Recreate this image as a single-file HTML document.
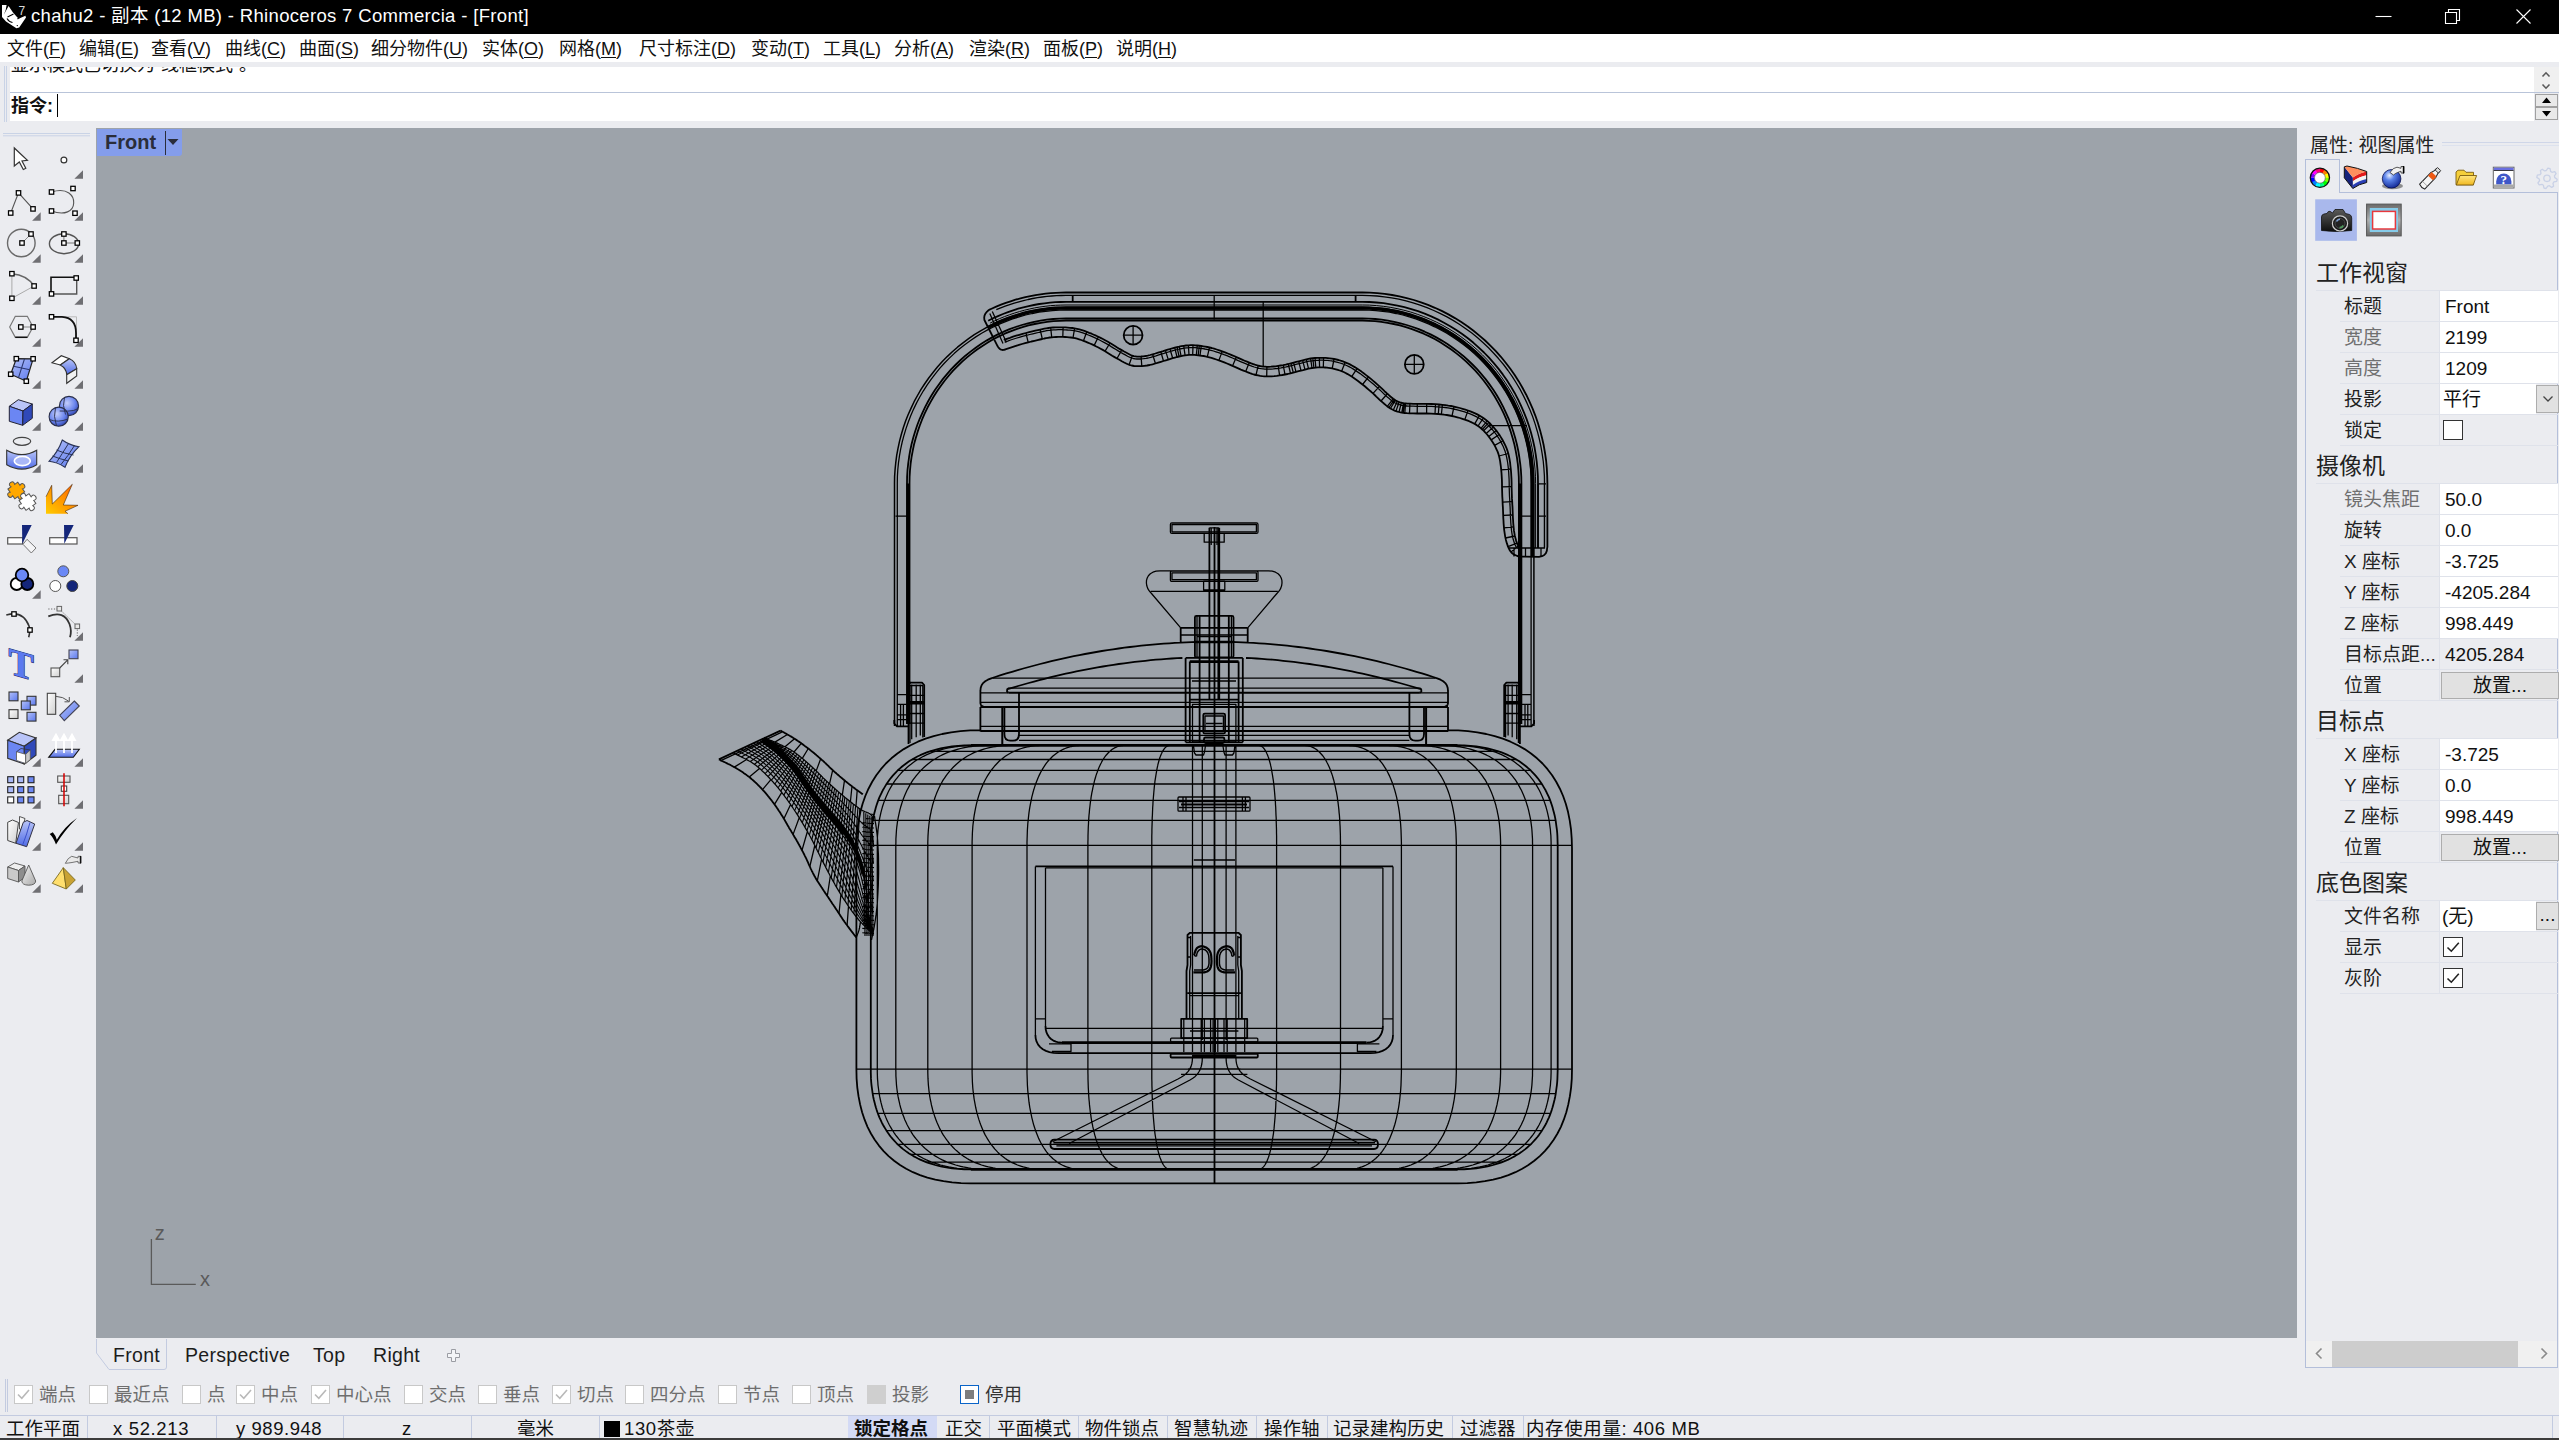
<!DOCTYPE html>
<html lang="zh-CN">
<head>
<meta charset="utf-8">
<title>chahu2 - 副本 (12 MB) - Rhinoceros 7 Commercia - [Front]</title>
<style>
html,body{margin:0;padding:0;}
body{width:2559px;height:1440px;overflow:hidden;position:relative;background:#ebecf0;
 font-family:"Liberation Sans","Noto Sans CJK SC",sans-serif;font-size:18px;color:#111;}
.abs{position:absolute;}
.t{position:absolute;white-space:nowrap;line-height:1;}
#titlebar{left:0;top:0;width:2559px;height:34px;background:#000;}
#title{left:31px;top:7px;color:#fff;font-size:18.5px;letter-spacing:0.33px;}
#menubar{left:0;top:34px;width:2559px;height:28px;background:#fff;}
#menubar .t{top:6px;font-size:18px;color:#111;}
#menubar u{text-decoration-thickness:1px;text-underline-offset:2px;}
#cmdhist{left:10px;top:67px;width:2524px;height:25px;background:#fff;overflow:hidden;}
#cmdline{left:10px;top:93px;width:2524px;height:28px;background:#fff;}
#cmdsep{left:10px;top:92px;width:2549px;height:1px;background:#b9c4d9;}
#viewport{left:96px;top:128px;width:2201px;height:1210px;background:#9da3aa;overflow:hidden;}
#vtab{left:97px;top:129px;width:85px;height:27px;background:#849deb;border-bottom-right-radius:3px;}
.hl{position:absolute;height:1px;background:#c9d1e2;}
.vl{position:absolute;width:1px;background:#c9d1e2;}
</style>
</head>
<body>
<div id="titlebar" class="abs"></div>
<div id="title" class="t">chahu2 - 副本 (12 MB) - Rhinoceros 7 Commercia - [Front]</div>
<div id="menubar" class="abs">
<span class="t" style="left:7px">文件(<u>F</u>)</span>
<span class="t" style="left:79px">编辑(<u>E</u>)</span>
<span class="t" style="left:151px">查看(<u>V</u>)</span>
<span class="t" style="left:225px">曲线(<u>C</u>)</span>
<span class="t" style="left:299px">曲面(<u>S</u>)</span>
<span class="t" style="left:371px">细分物件(<u>U</u>)</span>
<span class="t" style="left:482px">实体(<u>O</u>)</span>
<span class="t" style="left:559px">网格(<u>M</u>)</span>
<span class="t" style="left:639px">尺寸标注(<u>D</u>)</span>
<span class="t" style="left:751px">变动(<u>T</u>)</span>
<span class="t" style="left:823px">工具(<u>L</u>)</span>
<span class="t" style="left:894px">分析(<u>A</u>)</span>
<span class="t" style="left:969px">渲染(<u>R</u>)</span>
<span class="t" style="left:1043px">面板(<u>P</u>)</span>
<span class="t" style="left:1116px">说明(<u>H</u>)</span>
</div>
<div id="cmdhist" class="abs"><span class="t" style="left:1px;top:-11px;font-size:18px">显示模式已切换为“线框模式”。</span></div>
<div id="cmdline" class="abs"><span class="t" style="left:1px;top:4px;font-size:18px;font-weight:bold">指令:</span><div class="abs" style="left:47px;top:1px;width:1px;height:23px;background:#000"></div></div>
<div id="cmdsep" class="abs"></div>
<div id="viewport" class="abs">
<svg class="abs" style="left:0;top:0" width="2201" height="1210" viewBox="96 128 2201 1210" fill="none" stroke="#000" stroke-linecap="butt" stroke-linejoin="round">
<path stroke-width="1.28" d="M1258.4 745.4L1259 745.4L1259.6 745.5L1260.2 745.7L1260.7 745.9L1261.3 746.2L1261.8 746.5L1262.4 746.9L1262.9 747.4L1263.4 747.9L1263.9 748.5L1264.4 749.1L1264.9 749.8L1265.4 750.6L1265.8 751.4L1266.3 752.2L1266.7 753.2L1267.2 754.2L1267.6 755.2L1268 756.3L1268.5 757.5L1268.9 758.7L1269.2 760L1269.6 761.3L1270 762.7L1270.4 764.2L1270.7 765.7L1271.1 767.3L1271.4 768.9L1271.7 770.5L1272 772.3L1272.3 774.1L1272.6 775.9L1272.9 777.8L1273.2 779.7L1273.5 781.7L1273.7 783.8L1274 785.9L1274.2 788.1L1274.4 790.3L1274.6 792.5L1274.8 794.9L1275 797.2L1275.2 799.7L1275.4 802.1L1275.5 804.7L1275.7 807.3L1275.8 809.9L1275.9 812.6L1276 815.3L1276.2 818.1L1276.2 820.9L1276.3 823.8L1276.4 826.8L1276.5 829.7L1276.5 832.8L1276.6 835.9L1276.6 839L1276.6 842.2L1276.6 845.4L1276.6 1069.4L1276.6 1072.6L1276.6 1075.8L1276.6 1078.9L1276.5 1082L1276.5 1085.1L1276.4 1088L1276.3 1091L1276.2 1093.9L1276.2 1096.7L1276 1099.5L1275.9 1102.2L1275.8 1104.9L1275.7 1107.5L1275.5 1110.1L1275.4 1112.7L1275.2 1115.1L1275 1117.6L1274.8 1119.9L1274.6 1122.3L1274.4 1124.5L1274.2 1126.7L1274 1128.9L1273.7 1131L1273.5 1133.1L1273.2 1135.1L1272.9 1137L1272.6 1138.9L1272.3 1140.7L1272 1142.5L1271.7 1144.3L1271.4 1145.9L1271.1 1147.5L1270.7 1149.1L1270.4 1150.6L1270 1152.1L1269.6 1153.5L1269.2 1154.8L1268.9 1156.1L1268.5 1157.3L1268 1158.5L1267.6 1159.6L1267.2 1160.6L1266.7 1161.6L1266.3 1162.6L1265.8 1163.4L1265.4 1164.2L1264.9 1165L1264.4 1165.7L1263.9 1166.3L1263.4 1166.9L1262.9 1167.4L1262.4 1167.9L1261.8 1168.3L1261.3 1168.6L1260.7 1168.9L1260.2 1169.1L1259.6 1169.3L1259 1169.4L1258.4 1169.4M1303.7 745.4L1304.9 745.4L1306.1 745.5L1307.2 745.7L1308.4 745.9L1309.5 746.2L1310.6 746.5L1311.7 746.9L1312.7 747.4L1313.8 747.9L1314.8 748.5L1315.8 749.1L1316.8 749.8L1317.7 750.6L1318.7 751.4L1319.6 752.2L1320.5 753.2L1321.4 754.2L1322.3 755.2L1323.2 756.3L1324 757.5L1324.8 758.7L1325.6 760L1326.4 761.3L1327.1 762.7L1327.9 764.2L1328.6 765.7L1329.3 767.3L1330 768.9L1330.6 770.5L1331.2 772.3L1331.9 774.1L1332.5 775.9L1333 777.8L1333.6 779.7L1334.1 781.7L1334.6 783.8L1335.1 785.9L1335.6 788.1L1336 790.3L1336.5 792.5L1336.9 794.9L1337.3 797.2L1337.6 799.7L1338 802.1L1338.3 804.7L1338.6 807.3L1338.9 809.9L1339.1 812.6L1339.4 815.3L1339.6 818.1L1339.8 820.9L1339.9 823.8L1340.1 826.8L1340.2 829.7L1340.3 832.8L1340.4 835.9L1340.4 839L1340.5 842.2L1340.5 845.4L1340.5 1069.4L1340.5 1072.6L1340.4 1075.8L1340.4 1078.9L1340.3 1082L1340.2 1085.1L1340.1 1088L1339.9 1091L1339.8 1093.9L1339.6 1096.7L1339.4 1099.5L1339.1 1102.2L1338.9 1104.9L1338.6 1107.5L1338.3 1110.1L1338 1112.7L1337.6 1115.1L1337.3 1117.6L1336.9 1119.9L1336.5 1122.3L1336 1124.5L1335.6 1126.7L1335.1 1128.9L1334.6 1131L1334.1 1133.1L1333.6 1135.1L1333 1137L1332.5 1138.9L1331.9 1140.7L1331.2 1142.5L1330.6 1144.3L1330 1145.9L1329.3 1147.5L1328.6 1149.1L1327.9 1150.6L1327.1 1152.1L1326.4 1153.5L1325.6 1154.8L1324.8 1156.1L1324 1157.3L1323.2 1158.5L1322.3 1159.6L1321.4 1160.6L1320.5 1161.6L1319.6 1162.6L1318.7 1163.4L1317.7 1164.2L1316.8 1165L1315.8 1165.7L1314.8 1166.3L1313.8 1166.9L1312.7 1167.4L1311.7 1167.9L1310.6 1168.3L1309.5 1168.6L1308.4 1168.9L1307.2 1169.1L1306.1 1169.3L1304.9 1169.4L1303.7 1169.4M1346.9 745.4L1348.6 745.4L1350.4 745.5L1352.1 745.7L1353.8 745.9L1355.4 746.2L1357 746.5L1358.6 746.9L1360.2 747.4L1361.8 747.9L1363.3 748.5L1364.8 749.1L1366.2 749.8L1367.7 750.6L1369.1 751.4L1370.5 752.2L1371.8 753.2L1373.1 754.2L1374.4 755.2L1375.7 756.3L1376.9 757.5L1378.1 758.7L1379.3 760L1380.5 761.3L1381.6 762.7L1382.7 764.2L1383.7 765.7L1384.8 767.3L1385.8 768.9L1386.7 770.5L1387.7 772.3L1388.6 774.1L1389.5 775.9L1390.3 777.8L1391.1 779.7L1391.9 781.7L1392.7 783.8L1393.4 785.9L1394.1 788.1L1394.8 790.3L1395.4 792.5L1396 794.9L1396.6 797.2L1397.1 799.7L1397.6 802.1L1398.1 804.7L1398.6 807.3L1399 809.9L1399.4 812.6L1399.7 815.3L1400 818.1L1400.3 820.9L1400.6 823.8L1400.8 826.8L1401 829.7L1401.1 832.8L1401.2 835.9L1401.3 839L1401.4 842.2L1401.4 845.4L1401.4 1069.4L1401.4 1072.6L1401.3 1075.8L1401.2 1078.9L1401.1 1082L1401 1085.1L1400.8 1088L1400.6 1091L1400.3 1093.9L1400 1096.7L1399.7 1099.5L1399.4 1102.2L1399 1104.9L1398.6 1107.5L1398.1 1110.1L1397.6 1112.7L1397.1 1115.1L1396.6 1117.6L1396 1119.9L1395.4 1122.3L1394.8 1124.5L1394.1 1126.7L1393.4 1128.9L1392.7 1131L1391.9 1133.1L1391.1 1135.1L1390.3 1137L1389.5 1138.9L1388.6 1140.7L1387.7 1142.5L1386.7 1144.3L1385.8 1145.9L1384.8 1147.5L1383.7 1149.1L1382.7 1150.6L1381.6 1152.1L1380.5 1153.5L1379.3 1154.8L1378.1 1156.1L1376.9 1157.3L1375.7 1158.5L1374.4 1159.6L1373.1 1160.6L1371.8 1161.6L1370.5 1162.6L1369.1 1163.4L1367.7 1164.2L1366.2 1165L1364.8 1165.7L1363.3 1166.3L1361.8 1166.9L1360.2 1167.4L1358.6 1167.9L1357 1168.3L1355.4 1168.6L1353.8 1168.9L1352.1 1169.1L1350.4 1169.3L1348.6 1169.4L1346.9 1169.4M1385.8 745.4L1388.1 745.4L1390.4 745.5L1392.6 745.7L1394.7 745.9L1396.9 746.2L1399 746.5L1401 746.9L1403.1 747.4L1405.1 747.9L1407 748.5L1409 749.1L1410.9 749.8L1412.7 750.6L1414.5 751.4L1416.3 752.2L1418.1 753.2L1419.8 754.2L1421.5 755.2L1423.1 756.3L1424.7 757.5L1426.3 758.7L1427.8 760L1429.3 761.3L1430.7 762.7L1432.1 764.2L1433.5 765.7L1434.8 767.3L1436.1 768.9L1437.4 770.5L1438.6 772.3L1439.8 774.1L1440.9 775.9L1442 777.8L1443.1 779.7L1444.1 781.7L1445.1 783.8L1446 785.9L1446.9 788.1L1447.8 790.3L1448.6 792.5L1449.4 794.9L1450.1 797.2L1450.8 799.7L1451.5 802.1L1452.1 804.7L1452.7 807.3L1453.2 809.9L1453.7 812.6L1454.2 815.3L1454.6 818.1L1454.9 820.9L1455.3 823.8L1455.6 826.8L1455.8 829.7L1456 832.8L1456.1 835.9L1456.2 839L1456.3 842.2L1456.3 845.4L1456.3 1069.4L1456.3 1072.6L1456.2 1075.8L1456.1 1078.9L1456 1082L1455.8 1085.1L1455.6 1088L1455.3 1091L1454.9 1093.9L1454.6 1096.7L1454.2 1099.5L1453.7 1102.2L1453.2 1104.9L1452.7 1107.5L1452.1 1110.1L1451.5 1112.7L1450.8 1115.1L1450.1 1117.6L1449.4 1119.9L1448.6 1122.3L1447.8 1124.5L1446.9 1126.7L1446 1128.9L1445.1 1131L1444.1 1133.1L1443.1 1135.1L1442 1137L1440.9 1138.9L1439.8 1140.7L1438.6 1142.5L1437.4 1144.3L1436.1 1145.9L1434.8 1147.5L1433.5 1149.1L1432.1 1150.6L1430.7 1152.1L1429.3 1153.5L1427.8 1154.8L1426.3 1156.1L1424.7 1157.3L1423.1 1158.5L1421.5 1159.6L1419.8 1160.6L1418.1 1161.6L1416.3 1162.6L1414.5 1163.4L1412.7 1164.2L1410.9 1165L1409 1165.7L1407 1166.3L1405.1 1166.9L1403.1 1167.4L1401 1167.9L1399 1168.3L1396.9 1168.6L1394.7 1168.9L1392.6 1169.1L1390.4 1169.3L1388.1 1169.4L1385.8 1169.4M1417.2 745.4L1419.9 745.4L1422.6 745.5L1425.2 745.7L1427.8 745.9L1430.3 746.2L1432.8 746.5L1435.2 746.9L1437.6 747.4L1440 747.9L1442.3 748.5L1444.6 749.1L1446.9 749.8L1449 750.6L1451.2 751.4L1453.3 752.2L1455.4 753.2L1457.4 754.2L1459.4 755.2L1461.3 756.3L1463.2 757.5L1465.1 758.7L1466.9 760L1468.6 761.3L1470.3 762.7L1472 764.2L1473.6 765.7L1475.2 767.3L1476.7 768.9L1478.2 770.5L1479.7 772.3L1481.1 774.1L1482.4 775.9L1483.7 777.8L1485 779.7L1486.2 781.7L1487.3 783.8L1488.5 785.9L1489.5 788.1L1490.5 790.3L1491.5 792.5L1492.4 794.9L1493.3 797.2L1494.1 799.7L1494.9 802.1L1495.7 804.7L1496.3 807.3L1497 809.9L1497.5 812.6L1498.1 815.3L1498.6 818.1L1499 820.9L1499.4 823.8L1499.7 826.8L1500 829.7L1500.2 832.8L1500.4 835.9L1500.5 839L1500.6 842.2L1500.6 845.4L1500.6 1069.4L1500.6 1072.6L1500.5 1075.8L1500.4 1078.9L1500.2 1082L1500 1085.1L1499.7 1088L1499.4 1091L1499 1093.9L1498.6 1096.7L1498.1 1099.5L1497.5 1102.2L1497 1104.9L1496.3 1107.5L1495.7 1110.1L1494.9 1112.7L1494.1 1115.1L1493.3 1117.6L1492.4 1119.9L1491.5 1122.3L1490.5 1124.5L1489.5 1126.7L1488.5 1128.9L1487.3 1131L1486.2 1133.1L1485 1135.1L1483.7 1137L1482.4 1138.9L1481.1 1140.7L1479.7 1142.5L1478.2 1144.3L1476.7 1145.9L1475.2 1147.5L1473.6 1149.1L1472 1150.6L1470.3 1152.1L1468.6 1153.5L1466.9 1154.8L1465.1 1156.1L1463.2 1157.3L1461.3 1158.5L1459.4 1159.6L1457.4 1160.6L1455.4 1161.6L1453.3 1162.6L1451.2 1163.4L1449 1164.2L1446.9 1165L1444.6 1165.7L1442.3 1166.3L1440 1166.9L1437.6 1167.4L1435.2 1167.9L1432.8 1168.3L1430.3 1168.6L1427.8 1168.9L1425.2 1169.1L1422.6 1169.3L1419.9 1169.4L1417.2 1169.4M1439.9 745.4L1442.9 745.4L1445.8 745.5L1448.7 745.7L1451.6 745.9L1454.4 746.2L1457.2 746.5L1459.9 746.9L1462.6 747.4L1465.2 747.9L1467.8 748.5L1470.3 749.1L1472.8 749.8L1475.2 750.6L1477.6 751.4L1480 752.2L1482.3 753.2L1484.5 754.2L1486.7 755.2L1488.9 756.3L1491 757.5L1493 758.7L1495 760L1497 761.3L1498.9 762.7L1500.8 764.2L1502.6 765.7L1504.3 767.3L1506 768.9L1507.7 770.5L1509.3 772.3L1510.8 774.1L1512.3 775.9L1513.8 777.8L1515.2 779.7L1516.5 781.7L1517.8 783.8L1519 785.9L1520.2 788.1L1521.4 790.3L1522.4 792.5L1523.5 794.9L1524.4 797.2L1525.4 799.7L1526.2 802.1L1527 804.7L1527.8 807.3L1528.5 809.9L1529.1 812.6L1529.7 815.3L1530.3 818.1L1530.8 820.9L1531.2 823.8L1531.6 826.8L1531.9 829.7L1532.1 832.8L1532.3 835.9L1532.5 839L1532.5 842.2L1532.6 845.4L1532.6 1069.4L1532.5 1072.6L1532.5 1075.8L1532.3 1078.9L1532.1 1082L1531.9 1085.1L1531.6 1088L1531.2 1091L1530.8 1093.9L1530.3 1096.7L1529.7 1099.5L1529.1 1102.2L1528.5 1104.9L1527.8 1107.5L1527 1110.1L1526.2 1112.7L1525.4 1115.1L1524.4 1117.6L1523.5 1119.9L1522.4 1122.3L1521.4 1124.5L1520.2 1126.7L1519 1128.9L1517.8 1131L1516.5 1133.1L1515.2 1135.1L1513.8 1137L1512.3 1138.9L1510.8 1140.7L1509.3 1142.5L1507.7 1144.3L1506 1145.9L1504.3 1147.5L1502.6 1149.1L1500.8 1150.6L1498.9 1152.1L1497 1153.5L1495 1154.8L1493 1156.1L1491 1157.3L1488.9 1158.5L1486.7 1159.6L1484.5 1160.6L1482.3 1161.6L1480 1162.6L1477.6 1163.4L1475.2 1164.2L1472.8 1165L1470.3 1165.7L1467.8 1166.3L1465.2 1166.9L1462.6 1167.4L1459.9 1167.9L1457.2 1168.3L1454.4 1168.6L1451.6 1168.9L1448.7 1169.1L1445.8 1169.3L1442.9 1169.4L1439.9 1169.4M1453 745.4L1456.2 745.4L1459.3 745.5L1462.4 745.7L1465.4 745.9L1468.4 746.2L1471.3 746.5L1474.2 746.9L1477 747.4L1479.8 747.9L1482.5 748.5L1485.2 749.1L1487.9 749.8L1490.4 750.6L1493 751.4L1495.5 752.2L1497.9 753.2L1500.3 754.2L1502.6 755.2L1504.9 756.3L1507.1 757.5L1509.3 758.7L1511.4 760L1513.5 761.3L1515.5 762.7L1517.4 764.2L1519.4 765.7L1521.2 767.3L1523 768.9L1524.8 770.5L1526.5 772.3L1528.1 774.1L1529.7 775.9L1531.2 777.8L1532.7 779.7L1534.1 781.7L1535.5 783.8L1536.8 785.9L1538.1 788.1L1539.3 790.3L1540.4 792.5L1541.5 794.9L1542.5 797.2L1543.5 799.7L1544.4 802.1L1545.3 804.7L1546.1 807.3L1546.8 809.9L1547.5 812.6L1548.1 815.3L1548.7 818.1L1549.2 820.9L1549.6 823.8L1550 826.8L1550.4 829.7L1550.6 832.8L1550.9 835.9L1551 839L1551.1 842.2L1551.1 845.4L1551.1 1069.4L1551.1 1072.6L1551 1075.8L1550.9 1078.9L1550.6 1082L1550.4 1085.1L1550 1088L1549.6 1091L1549.2 1093.9L1548.7 1096.7L1548.1 1099.5L1547.5 1102.2L1546.8 1104.9L1546.1 1107.5L1545.3 1110.1L1544.4 1112.7L1543.5 1115.1L1542.5 1117.6L1541.5 1119.9L1540.4 1122.3L1539.3 1124.5L1538.1 1126.7L1536.8 1128.9L1535.5 1131L1534.1 1133.1L1532.7 1135.1L1531.2 1137L1529.7 1138.9L1528.1 1140.7L1526.5 1142.5L1524.8 1144.3L1523 1145.9L1521.2 1147.5L1519.4 1149.1L1517.4 1150.6L1515.5 1152.1L1513.5 1153.5L1511.4 1154.8L1509.3 1156.1L1507.1 1157.3L1504.9 1158.5L1502.6 1159.6L1500.3 1160.6L1497.9 1161.6L1495.5 1162.6L1493 1163.4L1490.4 1164.2L1487.9 1165L1485.2 1165.7L1482.5 1166.3L1479.8 1166.9L1477 1167.4L1474.2 1167.9L1471.3 1168.3L1468.4 1168.6L1465.4 1168.9L1462.4 1169.1L1459.3 1169.3L1456.2 1169.4L1453 1169.4M1170 745.4L1169.4 745.4L1168.8 745.5L1168.2 745.7L1167.7 745.9L1167.1 746.2L1166.6 746.5L1166 746.9L1165.5 747.4L1165 747.9L1164.5 748.5L1164 749.1L1163.5 749.8L1163 750.6L1162.6 751.4L1162.1 752.2L1161.7 753.2L1161.2 754.2L1160.8 755.2L1160.4 756.3L1159.9 757.5L1159.5 758.7L1159.2 760L1158.8 761.3L1158.4 762.7L1158 764.2L1157.7 765.7L1157.3 767.3L1157 768.9L1156.7 770.5L1156.4 772.3L1156.1 774.1L1155.8 775.9L1155.5 777.8L1155.2 779.7L1154.9 781.7L1154.7 783.8L1154.4 785.9L1154.2 788.1L1154 790.3L1153.8 792.5L1153.6 794.9L1153.4 797.2L1153.2 799.7L1153 802.1L1152.9 804.7L1152.7 807.3L1152.6 809.9L1152.5 812.6L1152.4 815.3L1152.2 818.1L1152.2 820.9L1152.1 823.8L1152 826.8L1151.9 829.7L1151.9 832.8L1151.8 835.9L1151.8 839L1151.8 842.2L1151.8 845.4L1151.8 1069.4L1151.8 1072.6L1151.8 1075.8L1151.8 1078.9L1151.9 1082L1151.9 1085.1L1152 1088L1152.1 1091L1152.2 1093.9L1152.2 1096.7L1152.4 1099.5L1152.5 1102.2L1152.6 1104.9L1152.7 1107.5L1152.9 1110.1L1153 1112.7L1153.2 1115.1L1153.4 1117.6L1153.6 1119.9L1153.8 1122.3L1154 1124.5L1154.2 1126.7L1154.4 1128.9L1154.7 1131L1154.9 1133.1L1155.2 1135.1L1155.5 1137L1155.8 1138.9L1156.1 1140.7L1156.4 1142.5L1156.7 1144.3L1157 1145.9L1157.3 1147.5L1157.7 1149.1L1158 1150.6L1158.4 1152.1L1158.8 1153.5L1159.2 1154.8L1159.5 1156.1L1159.9 1157.3L1160.4 1158.5L1160.8 1159.6L1161.2 1160.6L1161.7 1161.6L1162.1 1162.6L1162.6 1163.4L1163 1164.2L1163.5 1165L1164 1165.7L1164.5 1166.3L1165 1166.9L1165.5 1167.4L1166 1167.9L1166.6 1168.3L1167.1 1168.6L1167.7 1168.9L1168.2 1169.1L1168.8 1169.3L1169.4 1169.4L1170 1169.4M1124.7 745.4L1123.5 745.4L1122.3 745.5L1121.2 745.7L1120 745.9L1118.9 746.2L1117.8 746.5L1116.7 746.9L1115.7 747.4L1114.6 747.9L1113.6 748.5L1112.6 749.1L1111.6 749.8L1110.7 750.6L1109.7 751.4L1108.8 752.2L1107.9 753.2L1107 754.2L1106.1 755.2L1105.2 756.3L1104.4 757.5L1103.6 758.7L1102.8 760L1102 761.3L1101.3 762.7L1100.5 764.2L1099.8 765.7L1099.1 767.3L1098.4 768.9L1097.8 770.5L1097.2 772.3L1096.5 774.1L1095.9 775.9L1095.4 777.8L1094.8 779.7L1094.3 781.7L1093.8 783.8L1093.3 785.9L1092.8 788.1L1092.4 790.3L1091.9 792.5L1091.5 794.9L1091.1 797.2L1090.8 799.7L1090.4 802.1L1090.1 804.7L1089.8 807.3L1089.5 809.9L1089.3 812.6L1089 815.3L1088.8 818.1L1088.6 820.9L1088.5 823.8L1088.3 826.8L1088.2 829.7L1088.1 832.8L1088 835.9L1088 839L1087.9 842.2L1087.9 845.4L1087.9 1069.4L1087.9 1072.6L1088 1075.8L1088 1078.9L1088.1 1082L1088.2 1085.1L1088.3 1088L1088.5 1091L1088.6 1093.9L1088.8 1096.7L1089 1099.5L1089.3 1102.2L1089.5 1104.9L1089.8 1107.5L1090.1 1110.1L1090.4 1112.7L1090.8 1115.1L1091.1 1117.6L1091.5 1119.9L1091.9 1122.3L1092.4 1124.5L1092.8 1126.7L1093.3 1128.9L1093.8 1131L1094.3 1133.1L1094.8 1135.1L1095.4 1137L1095.9 1138.9L1096.5 1140.7L1097.2 1142.5L1097.8 1144.3L1098.4 1145.9L1099.1 1147.5L1099.8 1149.1L1100.5 1150.6L1101.3 1152.1L1102 1153.5L1102.8 1154.8L1103.6 1156.1L1104.4 1157.3L1105.2 1158.5L1106.1 1159.6L1107 1160.6L1107.9 1161.6L1108.8 1162.6L1109.7 1163.4L1110.7 1164.2L1111.6 1165L1112.6 1165.7L1113.6 1166.3L1114.6 1166.9L1115.7 1167.4L1116.7 1167.9L1117.8 1168.3L1118.9 1168.6L1120 1168.9L1121.2 1169.1L1122.3 1169.3L1123.5 1169.4L1124.7 1169.4M1081.5 745.4L1079.8 745.4L1078 745.5L1076.3 745.7L1074.6 745.9L1073 746.2L1071.4 746.5L1069.8 746.9L1068.2 747.4L1066.6 747.9L1065.1 748.5L1063.6 749.1L1062.2 749.8L1060.7 750.6L1059.3 751.4L1057.9 752.2L1056.6 753.2L1055.3 754.2L1054 755.2L1052.7 756.3L1051.5 757.5L1050.3 758.7L1049.1 760L1047.9 761.3L1046.8 762.7L1045.7 764.2L1044.7 765.7L1043.6 767.3L1042.6 768.9L1041.7 770.5L1040.7 772.3L1039.8 774.1L1038.9 775.9L1038.1 777.8L1037.3 779.7L1036.5 781.7L1035.7 783.8L1035 785.9L1034.3 788.1L1033.6 790.3L1033 792.5L1032.4 794.9L1031.8 797.2L1031.3 799.7L1030.8 802.1L1030.3 804.7L1029.8 807.3L1029.4 809.9L1029 812.6L1028.7 815.3L1028.4 818.1L1028.1 820.9L1027.8 823.8L1027.6 826.8L1027.4 829.7L1027.3 832.8L1027.2 835.9L1027.1 839L1027 842.2L1027 845.4L1027 1069.4L1027 1072.6L1027.1 1075.8L1027.2 1078.9L1027.3 1082L1027.4 1085.1L1027.6 1088L1027.8 1091L1028.1 1093.9L1028.4 1096.7L1028.7 1099.5L1029 1102.2L1029.4 1104.9L1029.8 1107.5L1030.3 1110.1L1030.8 1112.7L1031.3 1115.1L1031.8 1117.6L1032.4 1119.9L1033 1122.3L1033.6 1124.5L1034.3 1126.7L1035 1128.9L1035.7 1131L1036.5 1133.1L1037.3 1135.1L1038.1 1137L1038.9 1138.9L1039.8 1140.7L1040.7 1142.5L1041.7 1144.3L1042.6 1145.9L1043.6 1147.5L1044.7 1149.1L1045.7 1150.6L1046.8 1152.1L1047.9 1153.5L1049.1 1154.8L1050.3 1156.1L1051.5 1157.3L1052.7 1158.5L1054 1159.6L1055.3 1160.6L1056.6 1161.6L1057.9 1162.6L1059.3 1163.4L1060.7 1164.2L1062.2 1165L1063.6 1165.7L1065.1 1166.3L1066.6 1166.9L1068.2 1167.4L1069.8 1167.9L1071.4 1168.3L1073 1168.6L1074.6 1168.9L1076.3 1169.1L1078 1169.3L1079.8 1169.4L1081.5 1169.4M1042.6 745.4L1040.3 745.4L1038 745.5L1035.8 745.7L1033.7 745.9L1031.5 746.2L1029.4 746.5L1027.4 746.9L1025.3 747.4L1023.3 747.9L1021.4 748.5L1019.4 749.1L1017.5 749.8L1015.7 750.6L1013.9 751.4L1012.1 752.2L1010.3 753.2L1008.6 754.2L1006.9 755.2L1005.3 756.3L1003.7 757.5L1002.1 758.7L1000.6 760L999.1 761.3L997.7 762.7L996.3 764.2L994.9 765.7L993.6 767.3L992.3 768.9L991 770.5L989.8 772.3L988.6 774.1L987.5 775.9L986.4 777.8L985.3 779.7L984.3 781.7L983.3 783.8L982.4 785.9L981.5 788.1L980.6 790.3L979.8 792.5L979 794.9L978.3 797.2L977.6 799.7L976.9 802.1L976.3 804.7L975.7 807.3L975.2 809.9L974.7 812.6L974.2 815.3L973.8 818.1L973.5 820.9L973.1 823.8L972.8 826.8L972.6 829.7L972.4 832.8L972.3 835.9L972.2 839L972.1 842.2L972.1 845.4L972.1 1069.4L972.1 1072.6L972.2 1075.8L972.3 1078.9L972.4 1082L972.6 1085.1L972.8 1088L973.1 1091L973.5 1093.9L973.8 1096.7L974.2 1099.5L974.7 1102.2L975.2 1104.9L975.7 1107.5L976.3 1110.1L976.9 1112.7L977.6 1115.1L978.3 1117.6L979 1119.9L979.8 1122.3L980.6 1124.5L981.5 1126.7L982.4 1128.9L983.3 1131L984.3 1133.1L985.3 1135.1L986.4 1137L987.5 1138.9L988.6 1140.7L989.8 1142.5L991 1144.3L992.3 1145.9L993.6 1147.5L994.9 1149.1L996.3 1150.6L997.7 1152.1L999.1 1153.5L1000.6 1154.8L1002.1 1156.1L1003.7 1157.3L1005.3 1158.5L1006.9 1159.6L1008.6 1160.6L1010.3 1161.6L1012.1 1162.6L1013.9 1163.4L1015.7 1164.2L1017.5 1165L1019.4 1165.7L1021.4 1166.3L1023.3 1166.9L1025.3 1167.4L1027.4 1167.9L1029.4 1168.3L1031.5 1168.6L1033.7 1168.9L1035.8 1169.1L1038 1169.3L1040.3 1169.4L1042.6 1169.4M1011.2 745.4L1008.5 745.4L1005.8 745.5L1003.2 745.7L1000.6 745.9L998.1 746.2L995.6 746.5L993.2 746.9L990.8 747.4L988.4 747.9L986.1 748.5L983.8 749.1L981.5 749.8L979.4 750.6L977.2 751.4L975.1 752.2L973 753.2L971 754.2L969 755.2L967.1 756.3L965.2 757.5L963.3 758.7L961.5 760L959.8 761.3L958.1 762.7L956.4 764.2L954.8 765.7L953.2 767.3L951.7 768.9L950.2 770.5L948.7 772.3L947.3 774.1L946 775.9L944.7 777.8L943.4 779.7L942.2 781.7L941.1 783.8L939.9 785.9L938.9 788.1L937.9 790.3L936.9 792.5L936 794.9L935.1 797.2L934.3 799.7L933.5 802.1L932.7 804.7L932.1 807.3L931.4 809.9L930.9 812.6L930.3 815.3L929.8 818.1L929.4 820.9L929 823.8L928.7 826.8L928.4 829.7L928.2 832.8L928 835.9L927.9 839L927.8 842.2L927.8 845.4L927.8 1069.4L927.8 1072.6L927.9 1075.8L928 1078.9L928.2 1082L928.4 1085.1L928.7 1088L929 1091L929.4 1093.9L929.8 1096.7L930.3 1099.5L930.9 1102.2L931.4 1104.9L932.1 1107.5L932.7 1110.1L933.5 1112.7L934.3 1115.1L935.1 1117.6L936 1119.9L936.9 1122.3L937.9 1124.5L938.9 1126.7L939.9 1128.9L941.1 1131L942.2 1133.1L943.4 1135.1L944.7 1137L946 1138.9L947.3 1140.7L948.7 1142.5L950.2 1144.3L951.7 1145.9L953.2 1147.5L954.8 1149.1L956.4 1150.6L958.1 1152.1L959.8 1153.5L961.5 1154.8L963.3 1156.1L965.2 1157.3L967.1 1158.5L969 1159.6L971 1160.6L973 1161.6L975.1 1162.6L977.2 1163.4L979.4 1164.2L981.5 1165L983.8 1165.7L986.1 1166.3L988.4 1166.9L990.8 1167.4L993.2 1167.9L995.6 1168.3L998.1 1168.6L1000.6 1168.9L1003.2 1169.1L1005.8 1169.3L1008.5 1169.4L1011.2 1169.4M988.5 745.4L985.5 745.4L982.6 745.5L979.7 745.7L976.8 745.9L974 746.2L971.2 746.5L968.5 746.9L965.8 747.4L963.2 747.9L960.6 748.5L958.1 749.1L955.6 749.8L953.2 750.6L950.8 751.4L948.4 752.2L946.1 753.2L943.9 754.2L941.7 755.2L939.5 756.3L937.4 757.5L935.4 758.7L933.4 760L931.4 761.3L929.5 762.7L927.6 764.2L925.8 765.7L924.1 767.3L922.4 768.9L920.7 770.5L919.1 772.3L917.6 774.1L916.1 775.9L914.6 777.8L913.2 779.7L911.9 781.7L910.6 783.8L909.4 785.9L908.2 788.1L907 790.3L906 792.5L904.9 794.9L904 797.2L903 799.7L902.2 802.1L901.4 804.7L900.6 807.3L899.9 809.9L899.3 812.6L898.7 815.3L898.1 818.1L897.6 820.9L897.2 823.8L896.8 826.8L896.5 829.7L896.3 832.8L896.1 835.9L895.9 839L895.9 842.2L895.8 845.4L895.8 1069.4L895.9 1072.6L895.9 1075.8L896.1 1078.9L896.3 1082L896.5 1085.1L896.8 1088L897.2 1091L897.6 1093.9L898.1 1096.7L898.7 1099.5L899.3 1102.2L899.9 1104.9L900.6 1107.5L901.4 1110.1L902.2 1112.7L903 1115.1L904 1117.6L904.9 1119.9L906 1122.3L907 1124.5L908.2 1126.7L909.4 1128.9L910.6 1131L911.9 1133.1L913.2 1135.1L914.6 1137L916.1 1138.9L917.6 1140.7L919.1 1142.5L920.7 1144.3L922.4 1145.9L924.1 1147.5L925.8 1149.1L927.6 1150.6L929.5 1152.1L931.4 1153.5L933.4 1154.8L935.4 1156.1L937.4 1157.3L939.5 1158.5L941.7 1159.6L943.9 1160.6L946.1 1161.6L948.4 1162.6L950.8 1163.4L953.2 1164.2L955.6 1165L958.1 1165.7L960.6 1166.3L963.2 1166.9L965.8 1167.4L968.5 1167.9L971.2 1168.3L974 1168.6L976.8 1168.9L979.7 1169.1L982.6 1169.3L985.5 1169.4L988.5 1169.4M975.4 745.4L972.2 745.4L969.1 745.5L966 745.7L963 745.9L960 746.2L957.1 746.5L954.2 746.9L951.4 747.4L948.6 747.9L945.9 748.5L943.2 749.1L940.5 749.8L938 750.6L935.4 751.4L932.9 752.2L930.5 753.2L928.1 754.2L925.8 755.2L923.5 756.3L921.3 757.5L919.1 758.7L917 760L914.9 761.3L912.9 762.7L911 764.2L909 765.7L907.2 767.3L905.4 768.9L903.6 770.5L901.9 772.3L900.3 774.1L898.7 775.9L897.2 777.8L895.7 779.7L894.3 781.7L892.9 783.8L891.6 785.9L890.3 788.1L889.1 790.3L888 792.5L886.9 794.9L885.9 797.2L884.9 799.7L884 802.1L883.1 804.7L882.3 807.3L881.6 809.9L880.9 812.6L880.3 815.3L879.7 818.1L879.2 820.9L878.8 823.8L878.4 826.8L878 829.7L877.8 832.8L877.5 835.9L877.4 839L877.3 842.2L877.3 845.4L877.3 1069.4L877.3 1072.6L877.4 1075.8L877.5 1078.9L877.8 1082L878 1085.1L878.4 1088L878.8 1091L879.2 1093.9L879.7 1096.7L880.3 1099.5L880.9 1102.2L881.6 1104.9L882.3 1107.5L883.1 1110.1L884 1112.7L884.9 1115.1L885.9 1117.6L886.9 1119.9L888 1122.3L889.1 1124.5L890.3 1126.7L891.6 1128.9L892.9 1131L894.3 1133.1L895.7 1135.1L897.2 1137L898.7 1138.9L900.3 1140.7L901.9 1142.5L903.6 1144.3L905.4 1145.9L907.2 1147.5L909 1149.1L911 1150.6L912.9 1152.1L914.9 1153.5L917 1154.8L919.1 1156.1L921.3 1157.3L923.5 1158.5L925.8 1159.6L928.1 1160.6L930.5 1161.6L932.9 1162.6L935.4 1163.4L938 1164.2L940.5 1165L943.2 1165.7L945.9 1166.3L948.6 1166.9L951.4 1167.4L954.2 1167.9L957.1 1168.3L960 1168.6L963 1168.9L966 1169.1L969.1 1169.3L972.2 1169.4L975.4 1169.4M930 751.4L1498.4 751.4M912.1 759.5L1516.3 759.5M897.8 770.4L1530.6 770.4M886.6 784L1541.8 784M878.3 800.3L1550.1 800.3M872.8 820.4L1555.6 820.4M870.8 845.4L1557.7 845.4M870.8 1069.2L1557.7 1069.2M872.7 1093.6L1555.7 1093.6M877.8 1113.3L1550.6 1113.3M886.4 1130.6L1542 1130.6M897.8 1144.4L1530.6 1144.4M910.6 1154.4L1517.8 1154.4M926.6 1162.2L1501.8 1162.2M856.4 1069.2L870.8 1069.2M1572 1069.2L1557.7 1069.2M1557.7 845.4L1572 845.4M993 678.2L1435.4 678.2M1009 688.1L1419.4 688.1M980.4 692.8L1008.5 692.8M1448 692.8L1419.9 692.8M980.4 702.4L1448 702.4M980.4 726.4L1448 726.4M1019 735.4L1409.4 735.4M1019 740.4L1409.4 740.4M1180.7 635L1247.7 635M1197 616L1197 657M1231.4 616L1231.4 657M1197 636.7L1231.4 636.7M1211.2 527.8L1211.2 545M1217 527.8L1217 545M1209.4 527.8L1218.8 527.8M1192.5 704.3H1235.9V742H1192.5ZM1205 716H1223.4V731H1205ZM1206 723.5L1222.4 723.5M1192 681L1236 681M1193.5 745.5L1194.5 753L1196 755L1203.5 755L1204.5 752L1205.5 745.5M1234.9 745.5L1233.9 753L1232.4 755L1224.9 755L1223.9 752L1222.9 745.5M1171.9 522.9H1256.5Q1258 522.9 1258 524.4V531.9Q1258 533.4 1256.5 533.4H1171.9Q1170.4 533.4 1170.4 531.9V524.4Q1170.4 522.9 1171.9 522.9ZM1172 524.5H1256.4V531.8H1172ZM1204.2 533.3H1224.2V542.2H1204.2ZM1171.4 571.2H1257Q1258 571.2 1258 572.2V580.3Q1258 581.3 1257 581.3H1171.4Q1170.4 581.3 1170.4 580.3V572.2Q1170.4 571.2 1171.4 571.2ZM1172 572.8H1256.4V579.7H1172ZM1203.6 581.1H1224.8V590H1203.6ZM1214.2 570.8L1160 570.8L1160 570.8L1156.1 571.2L1152.9 572.2L1150.3 573.7L1148.4 575.7L1147.2 578L1146.5 580.4L1146.4 583L1146.4 583L1146.8 585.8L1147.6 588.1L1148.7 590.2L1150 591.9L1151.5 593.5L1180.7 627.8M1214.2 570.8L1268.4 570.8L1268.4 570.8L1272.3 571.2L1275.5 572.2L1278.1 573.7L1280 575.7L1281.2 578L1281.9 580.4L1282 583L1282 583L1281.6 585.8L1280.8 588.1L1279.7 590.2L1278.4 591.9L1276.9 593.5L1247.7 627.8M1150.6 591.3L1277.8 591.3M1192.5 745.4L1192.5 1040M1235.9 745.4L1235.9 1040M1202.3 745.4L1202.3 1040M1226.1 745.4L1226.1 1040M1179 797H1249Q1250 797 1250 798V810.2Q1250 811.2 1249 811.2H1179Q1178 811.2 1178 810.2V798Q1178 797 1179 797ZM1179 801.5L1249 801.5M1179 807.5L1249 807.5M1183 797L1183 811M1245.4 797L1245.4 811M1186 797L1186 811M1242.4 797L1242.4 811M1193.8 860L1235 860M1045.5 867.8L1382.9 867.8M1035.4 866.4L1035.4 1035M1393 866.4L1393 1035M1045.5 867.8L1045.5 1026M1382.9 867.8L1382.9 1026M1035.4 1018.8L1045.5 1018.8M1393 1018.8L1382.9 1018.8M1045.5 1028.4L1382.9 1028.4M1049 1043.8L1071 1043.8L1071 1051.5L1052 1051.5M1379.4 1043.8L1357.4 1043.8L1357.4 1051.5L1376.4 1051.5M1190.6 936L1190.6 965L1189.7 971L1189.7 1018.8M1237.8 936L1237.8 965L1238.7 971L1238.7 1018.8M1188 937.5L1190.5 937.5M1240.4 937.5L1237.9 937.5M1188 957L1190.5 957M1240.4 957L1237.9 957M1194 955.3L1196.4 956.3M1234.4 955.3L1232 956.3M1190 995.6L1238.4 995.6M1183.8 1018.8L1183.8 1052M1244.7 1018.8L1244.7 1052M1192.5 1018.8L1192.5 1052M1235.9 1018.8L1235.9 1052M1201.2 1018.8L1201.2 1052M1227.2 1018.8L1227.2 1052M1204.4 1018.8L1204.4 1052M1224 1018.8L1224 1052M1210.6 1018.8L1210.6 1052M1217.8 1018.8L1217.8 1052M1213.1 1018.8L1213.1 1052M1215.3 1018.8L1215.3 1052M1190 1031L1238.4 1031M1171.6 1038.1H1256.8Q1257.8 1038.1 1257.8 1039.1V1040.9Q1257.8 1041.9 1256.8 1041.9H1171.6Q1170.6 1041.9 1170.6 1040.9V1039.1Q1170.6 1038.1 1171.6 1038.1ZM1192.5 1057.5L1192.3 1060.8L1191.8 1063.9L1191 1066.6L1189.7 1069.1L1188.2 1071.4L1186.2 1073.5L1183.9 1075.5L1181.1 1077.3L1178 1079L1052.5 1141.7M1235.9 1057.5L1236.1 1060.8L1236.6 1063.9L1237.4 1066.6L1238.7 1069.1L1240.2 1071.4L1242.2 1073.5L1244.5 1075.5L1247.3 1077.3L1250.4 1079L1375.9 1141.7M1202.3 1057.5L1202.2 1060.9L1201.8 1064L1201.1 1066.9L1200.1 1069.6L1198.8 1072L1197.2 1074.3L1195.2 1076.4L1192.8 1078.3L1190 1080L1069.2 1143.5M1226.1 1057.5L1226.2 1060.9L1226.6 1064L1227.3 1066.9L1228.3 1069.6L1229.6 1072L1231.2 1074.3L1233.2 1076.4L1235.6 1078.3L1238.4 1080L1359.2 1143.5M1188 1068.8L1240.4 1068.8M1181 1074.4L1247.4 1074.4M1056.4 1145.8L1372 1145.8M897.3 726L897.3 483.5L897.4 476.5L897.8 469.5L898.5 462.6L899.5 455.7L900.7 448.8L902.2 442L904 435.2L906 428.6L908.3 422L910.8 415.5L913.6 409.1L916.6 402.9L919.9 396.8L923.4 390.8L927.2 384.9L931.1 379.3L935.3 373.8L939.7 368.4L944.3 363.3L949.1 358.4L954.1 353.6L959.3 349.1L964.7 344.8L970.2 340.7L975.8 336.9L981.6 333.2L987.6 329.9L993.7 326.8L999.9 323.9L1006.2 321.3L1012.6 318.9L1019.1 316.9L1025.6 315L1032.3 313.5L1038.9 312.2L1045.7 311.3L1052.4 310.6L1059.2 310.1L1066 310L1362.4 310L1369.2 310.1L1376 310.6L1382.7 311.3L1389.5 312.2L1396.1 313.5L1402.8 315L1409.3 316.9L1415.8 318.9L1422.2 321.3L1428.5 323.9L1434.7 326.8L1440.8 329.9L1446.8 333.2L1452.6 336.9L1458.2 340.7L1463.7 344.8L1469.1 349.1L1474.3 353.6L1479.3 358.4L1484.1 363.3L1488.7 368.4L1493.1 373.8L1497.3 379.3L1501.2 384.9L1505 390.8L1508.5 396.8L1511.8 402.9L1514.8 409.1L1517.6 415.5L1520.1 422L1522.4 428.6L1524.4 435.2L1526.2 442L1527.7 448.8L1528.9 455.7L1529.9 462.6L1530.6 469.5L1531 476.5L1531.1 483.5L1531.1 726M896.7 694.7L906.5 694.7M896.7 704.4L906.5 704.4M896.7 714.9L906.5 714.9M896.7 719.7L906.5 719.7M900.6 704.4L900.6 726.3M903.4 704.4L903.4 726.3M910 743L910 685.5L922.8 685.5L922.8 737.5M911.7 684.5L911.7 739.3M916.2 684.5L916.2 737.3M920.3 684.5L920.3 735.5M908.5 695.4L924.2 695.4M908.5 713.5L924.2 713.5M908.5 723.2L924.2 723.2M1531.7 694.7L1521.9 694.7M1531.7 704.4L1521.9 704.4M1531.7 714.9L1521.9 714.9M1531.7 719.7L1521.9 719.7M1527.8 704.4L1527.8 726.3M1525 704.4L1525 726.3M1518.4 743L1518.4 685.5L1505.6 685.5L1505.6 737.5M1516.7 684.5L1516.7 739.3M1512.2 684.5L1512.2 737.3M1508.1 684.5L1508.1 735.5M1519.9 695.4L1504.2 695.4M1519.9 713.5L1504.2 713.5M1519.9 723.2L1504.2 723.2M996.3 309.7L1000.7 307.9L1005.2 306.2L1009.7 304.6L1014.3 303.1L1018.9 301.8L1023.5 300.6L1028.1 299.5L1032.8 298.5L1037.5 297.7L1042.2 297L1047 296.4L1051.7 296L1056.5 295.7L1061.2 295.5L1066 295.4L1362.4 295.4L1369.7 295.6L1377.1 296L1384.3 296.8L1391.6 297.8L1398.8 299.2L1406 300.9L1413.1 302.8L1420.1 305.1L1427 307.6L1433.8 310.5L1440.5 313.6L1447 316.9L1453.5 320.6L1459.7 324.5L1465.8 328.7L1471.8 333.1L1477.6 337.8L1483.2 342.7L1488.5 347.8L1493.7 353.2L1498.7 358.8L1503.5 364.5L1508 370.5L1512.3 376.6L1516.3 383L1520.1 389.4L1523.6 396.1L1526.9 402.9L1529.9 409.8L1532.7 416.8L1535.1 423.9L1537.3 431.2L1539.2 438.5L1540.8 445.9L1542.1 453.3L1543.2 460.8L1543.9 468.4L1544.4 475.9L1544.5 483.5L1544.5 547.5M989.8 313.5L1003 343.5M992.3 311.5L1006.5 342.5M1004.6 342.1L1007.6 341.1L1010.6 340L1013.7 339L1016.9 338L1020 337.1L1023.2 336.2L1026.5 335.3L1029.7 334.5L1032.8 333.8L1035.7 333.1L1038.4 332.5L1040.7 332L1042.8 331.5L1044.7 331.1L1046.7 330.7L1048.8 330.4L1051 330.1L1053.3 329.9L1055.7 329.8L1058.2 329.7L1060.6 329.7L1063 329.7L1065.4 329.8L1067.6 330L1069.8 330.1L1072 330.4L1074.2 330.7L1076.5 331.2L1078.8 331.7L1081.2 332.4L1083.6 333.2L1086 334.1L1088.3 335L1090.6 335.9L1092.9 336.9L1095.1 337.9L1097.3 338.9L1099.6 340L1101.8 341.2L1104 342.4L1106.3 343.6L1108.8 345L1111.2 346.6L1113.6 348.1L1116 349.5L1118.2 350.9L1120.5 352.2L1122.9 353.6L1125.3 354.9L1127.6 356.2L1129.6 357.2L1131.5 358L1133.3 358.5L1135.1 358.8L1137 359L1139.1 359L1141.2 358.9L1143.6 358.7L1145.9 358.4L1148.2 358L1150.7 357.4L1153.3 356.6L1156 355.8L1158.8 354.9L1161.5 354.1L1163.9 353.4L1166.1 352.7L1168.4 352L1170.7 351.3L1173 350.6L1175.3 350L1177.5 349.5L1179.7 349L1181.9 348.6L1184.1 348.2L1186.3 347.9L1188.5 347.7L1190.8 347.6L1192.9 347.6L1195 347.7L1197 347.9L1199 348.1L1201 348.4L1202.9 348.6L1204.9 349L1206.9 349.3L1208.9 349.8L1211.1 350.3L1213.5 351L1216 351.8L1218.6 352.7L1221.3 353.6L1224.1 354.7L1226.9 355.7L1229.7 356.8L1232.5 358L1235.5 359.3L1238.3 360.6L1241.1 361.8L1243.7 362.9L1246.1 363.9L1248.4 364.8L1250.5 365.7L1252.4 366.4L1254.2 367L1255.9 367.5L1257.6 368L1259.5 368.4L1261.3 368.7L1263.1 368.9L1264.9 369.1L1266.8 369.2L1268.9 369.2L1271.1 369.1L1273.4 368.9L1275.9 368.6L1278.5 368.3L1281.1 367.9L1283.7 367.4L1286.2 366.9L1288.8 366.3L1291.5 365.6L1294.2 364.9L1296.8 364.2L1299.2 363.6L1301.3 363.1L1303.2 362.6L1305 362.1L1306.9 361.7L1308.9 361.2L1310.9 360.9L1313.1 360.6L1315.2 360.4L1317.3 360.3L1319.4 360.2L1321.5 360.2L1323.5 360.2L1325.5 360.3L1327.5 360.4L1329.5 360.7L1331.6 360.9L1333.6 361.3L1335.7 361.8L1337.8 362.4L1339.9 363L1342.1 363.7L1344.3 364.5L1346.6 365.5L1348.9 366.6L1351.1 367.8L1353.4 369.1L1355.6 370.6L1357.9 372.1L1360.1 373.6L1362.3 375.2L1364.6 377L1367 378.8L1369.3 380.8L1371.7 382.7L1373.9 384.6L1376 386.4L1377.9 388.1L1379.7 389.8L1381.4 391.4L1382.9 392.9L1384.3 394.3L1385.8 395.6L1387.3 397L1388.9 398.3L1390.3 399.5L1391.7 400.7L1393 401.6L1394.2 402.4L1395.3 403L1396.3 403.5L1397.3 403.9L1398.3 404.3L1399.5 404.7L1400.8 405L1402 405.3L1403.1 405.5L1404.1 405.7L1405.4 405.8L1407.3 406L1409.8 406.1L1413.1 406.2L1417.3 406.3L1421.9 406.3L1426.7 406.3L1431.3 406.4L1435.4 406.6L1438.9 406.9L1442.1 407.2L1445.1 407.5L1447.9 407.9L1450.7 408.4L1453.5 409L1456.3 409.6L1459.2 410.3L1461.9 411.1L1464.6 411.9L1467.2 412.8L1469.6 413.7L1471.9 414.6L1474.1 415.6L1476.2 416.6L1478.2 417.7L1480.2 418.8L1482.1 420.1L1483.9 421.4L1485.6 422.8L1487.2 424.2L1488.7 425.7L1490.2 427.2L1491.6 428.7L1493 430.4L1494.4 432.1L1495.8 433.9L1497.2 435.8L1498.5 437.8L1499.7 439.9L1500.9 441.9L1502 444.1L1503.1 446.3L1504.1 448.7L1505.1 451.3L1505.9 454.1L1506.6 457L1507.2 460L1507.7 463L1508.1 466.1L1508.4 469.2L1508.7 472.4L1508.9 475.9L1509.1 479.5L1509.2 483.2L1509.2 486.8L1509.3 490.2L1509.4 493.3L1509.5 496.3L1509.7 499.1L1509.8 501.7L1509.9 504.4L1510.1 507L1510.2 509.7L1510.3 512.4L1510.4 515.1L1510.5 517.7L1510.7 520.3L1510.8 522.7L1511 525L1511.2 527.2L1511.4 529.2L1511.6 531.2L1511.9 533.1L1512.2 534.8L1512.5 536.5L1512.9 538.1L1513.3 539.8L1513.8 541.3L1514.3 542.7L1514.7 544L1515.2 545L1515.6 545.9L1515.9 546.5L1516.2 547L1516.5 547.4L1516.8 547.7L1517.1 548L1517.2 548.1L1517.5 548.2L1518 548.4M1028.2 342.3L1025.9 333M1042.3 339L1040.2 329.6M1051.7 337.3L1050.7 327.7M1062.8 336.9L1063.1 327.3M1073 337.8L1074.6 328.4M1083.5 340.8L1086.8 331.8M1094.2 345.4L1098.4 336.8M1105.1 351.2L1110 343M1117 358.5L1121.7 350.1M1129.1 364.8L1132.3 355.7M1141.8 366.1L1141.1 356.5M1155.4 363.5L1152.6 354.3M1168.3 359.6L1165.4 350.4M1179.1 356.5L1177 347.1M1189 354.9L1188.4 345.3M1198.2 355.3L1199.3 345.7M1207.3 356.8L1209.5 347.5M1218.9 360.4L1222.2 351.4M1232.5 365.9L1236.4 357.1M1245.7 371.5L1249.3 362.6M1256 375L1258.2 365.6M1266.7 376.4L1266.9 366.8M1279.6 375.4L1278.2 365.9M1293.3 372.6L1290.9 363.3M1305 369.6L1302.6 360.3M1313.9 367.8L1312.8 358.2M1323.3 367.4L1323.6 357.8M1332.2 368.4L1334.1 359M1341.6 371.2L1345.2 362.3M1351.7 376.6L1357 368.6M1362.5 384.5L1368.5 377M1373 393.4L1379.5 386.4M1381 401L1387.4 393.8M1388.9 407.5L1394.4 399.6M1396 411.1L1399.1 402M1403.2 412.8L1404.4 403.3M1417.2 413.5L1417.3 403.9M1438.3 414L1439.1 404.5M1452 416L1454 406.6M1464.8 419.6L1468 410.5M1474.7 423.9L1479.4 415.6M1482.3 429.5L1488.9 422.4M1488.8 436.6L1496.3 430.6M1494.6 445.4L1503 440.8M1499 456L1508.3 453.5M1501.2 469.9L1510.8 469M1502 486.9L1511.6 486.7M1502.6 502.1L1512.2 501.6M1503.2 515.4L1512.8 515M1504 527.9L1513.6 526.9M1505.5 538L1514.9 536M1508 546.6L1517 543.1M1511 552L1518.4 545.8M1163.5 361L1160.8 351.8M1168.3 359.6L1165.4 350.4M1172.7 358.2L1170 349M1177 357L1174.7 347.7M1181.1 356.1L1179.2 346.7M1185.1 355.3L1183.7 345.8M1189 354.9L1188.4 345.3M1192.7 354.8L1193 345.2M1196.3 355.1L1197.3 345.5M1200 355.5L1201.3 346M1279.6 375.4L1278.2 365.9M1285 374.5L1283.2 365.1M1290.5 373.3L1288.3 364M1296 371.9L1293.6 362.6M1301 370.6L1298.7 361.3M1305 369.6L1302.6 360.3M1308.5 368.7L1306.3 359.3M1312 368L1310.6 358.5M1315.8 367.6L1315 358M1319.6 367.4L1319.3 357.8M1387.3 406.4L1393.2 398.8M1390.4 408.5L1395.4 400.3M1393.3 410L1397.3 401.3M1396 411.1L1399.1 402M1399 412L1401.4 402.7M1401.8 412.6L1403.5 403.2M1404.8 413L1405.6 403.4M1409.5 413.3L1409.9 403.7M1417.2 413.5L1417.3 403.9M1426.6 413.5L1426.7 403.9M1435 413.8L1435.5 404.2M1441.4 414.3L1442.4 404.8M1474.7 423.9L1479.4 415.6M1478 426L1483.4 418.1M1481 428.3L1487.2 420.9M1483.6 430.7L1490.5 424M1486.2 433.5L1493.4 427.1M1488.8 436.6L1496.3 430.6M1491.2 439.9L1499.2 434.5M1509 548L1545 548M1544.4 484L1544.4 548M1538.1 483.8L1538.1 548M1538.1 483.8L1546 483.8M1538.1 516.2L1546 516.2M1521 516.2L1531 516.2M1489.5 425.6L1527 425.6M1514 548L1514 556.6M1525.5 548L1525.5 556.6M1541 548L1541 556.6M1123.7 335.2L1142.5 335.2M1133.1 325.8L1133.1 344.6M1404.9 364.4L1423.7 364.4M1414.3 355L1414.3 373.8M1263.2 302L1263.2 366M1214.2 295.5L1214.2 319.5M895.5 516.2L907 516.2M720.3 760.9L781.8 732.2M765 738.1L765.7 738.4L766.4 738.7L767.1 739L767.7 739.2L768.4 739.5L769.1 739.8L769.8 740.1L770.5 740.3L771.2 740.6L771.9 740.9L772.6 741.2L773.3 741.5L773.9 741.7L774.6 742L775.3 742.3L776 742.6L776.7 742.9L777.3 743.2L778 743.5L778.7 743.9L779.4 744.2L780 744.5L780.7 744.8L781.4 745.1L782.1 745.4L782.7 745.7L783.4 746.1L784.1 746.4L784.7 746.7L785.4 747L786.1 747.4L786.7 747.7L787.4 748L788.1 748.4L788.7 748.7L789.4 749.1L790 749.4L790.6 749.8L791.3 750.2L791.9 750.6L792.5 751L793.2 751.4L793.8 751.8L794.4 752.2L795 752.7L795.6 753.1L796.2 753.6L796.8 754L797.4 754.5L798 754.9L798.6 755.4L799.1 755.8L799.7 756.3L800.3 756.8L800.9 757.2L801.4 757.7L802 758.2L802.6 758.6L803.2 759.1L803.7 759.6L804.3 760.1L804.8 760.6L805.4 761.1L806 761.5L806.5 762L807.1 762.5L807.6 763L808.2 763.5L808.8 764L809.3 764.5L809.9 765L810.4 765.5L811 766L811.5 766.5L812.1 767L812.6 767.5L813.2 768L813.7 768.5L814.2 769L814.8 769.5L815.3 770L815.8 770.6L816.4 771.1L816.9 771.6L817.4 772.1L818 772.6L818.5 773.2L819 773.7L819.5 774.2L820.1 774.7L820.6 775.3L821.1 775.8L821.6 776.3L822.2 776.8L822.7 777.4L823.2 777.9L823.8 778.4L824.3 778.9L824.8 779.4L825.4 780L825.9 780.5L826.4 781L827 781.5L827.5 782L828.1 782.5L828.6 783L829.2 783.5L829.7 784L830.3 784.5L830.8 785L831.4 785.5L831.9 786L832.5 786.5L833 787L833.6 787.5L834.1 788L834.7 788.5L835.2 789L835.8 789.5L836.3 790L836.9 790.4L837.5 790.9L838 791.4L838.6 791.9L839.1 792.4L839.7 792.9L840.3 793.4L840.8 793.8L841.4 794.3L842 794.8L842.5 795.3L843.1 795.8L843.7 796.2L844.3 796.7L844.8 797.2L845.4 797.7L846 798.1L846.5 798.6L847.1 799.1L847.7 799.5L848.3 800L848.9 800.5L849.4 800.9L850 801.4L850.6 801.9L851.2 802.3L851.8 802.8L852.3 803.2L852.9 803.7L853.5 804.2L854.1 804.6L854.7 805.1L855.3 805.5L855.9 806L856.5 806.4L857.1 806.9L857.7 807.3L858.3 807.7L858.9 808.2L859.5 808.6L860.1 809L860.7 809.5L861.3 809.8L862 810.2L862.6 810.6L863.3 810.9L863.9 811.2L864.6 811.5L865.3 811.8L866 812L866.7 812.3L867.4 812.6L868.1 812.8L868.8 813.2L869.4 813.5L870 813.9L870.6 814.4L871.1 814.9L871.6 815.5L872 816.1L872.3 816.8L872.6 817.5L872.8 818.2L872.9 818.9L873.1 819.6L873.2 820.4L873.3 821.1M733 752.8L734 753.3L735.1 753.9L736.1 754.4L737.2 754.9L738.2 755.4L739.3 755.9L740.3 756.4L741.4 756.9L742.4 757.4L743.5 758L744.5 758.5L745.6 759L746.6 759.5L747.6 760.1L748.7 760.7L749.7 761.2L750.7 761.8L751.7 762.4L752.6 763.1L753.6 763.7L754.6 764.4L755.5 765.1L756.4 765.8L757.3 766.6L758.2 767.3L759.1 768.1L760 768.8L760.9 769.6L761.7 770.4L762.6 771.2L763.4 772L764.3 772.8L765.1 773.6L765.9 774.5L766.7 775.3L767.6 776.1L768.4 777L769.2 777.8L770 778.7L770.8 779.5L771.6 780.4L772.4 781.2L773.2 782.1L773.9 783L774.7 783.8L775.5 784.7L776.3 785.6L777 786.5L777.8 787.4L778.5 788.3L779.2 789.2L780 790.1L780.7 791L781.4 791.9L782.1 792.9L782.8 793.8L783.5 794.7L784.2 795.6L784.9 796.6L785.6 797.5L786.3 798.5L787 799.4L787.7 800.4L788.4 801.3L789.1 802.3L789.7 803.2L790.4 804.2L791 805.1L791.7 806.1L792.4 807.1L793 808L793.6 809L794.3 810L794.9 811L795.6 812L796.2 812.9L796.8 813.9L797.5 814.9L798.1 815.9L798.7 816.9L799.3 817.9L799.9 818.9L800.6 819.9L801.2 820.9L801.8 821.9L802.4 822.8L803 823.9L803.6 824.9L804.2 825.9L804.8 826.9L805.3 827.9L805.9 828.9L806.5 829.9L807.1 830.9L807.7 831.9L808.2 833L808.8 834L809.4 835L809.9 836L810.5 837L811 838.1L811.6 839.1L812.1 840.1L812.7 841.2L813.2 842.2L813.7 843.3L814.2 844.3L814.8 845.3L815.3 846.4L815.8 847.4L816.3 848.5L816.8 849.5L817.3 850.6L817.9 851.6L818.4 852.7L818.9 853.7L819.4 854.8L819.9 855.8L820.4 856.9L821 857.9L821.5 859L822 860L822.5 861L823.1 862.1L823.6 863.1L824.1 864.2L824.7 865.2L825.2 866.3L825.7 867.3L826.3 868.3L826.8 869.4L827.3 870.4L827.9 871.4L828.4 872.5L829 873.5L829.5 874.5L830 875.6L830.6 876.6L831.2 877.6L831.7 878.7L832.3 879.7L832.8 880.7L833.4 881.7L834 882.7L834.6 883.8L835.1 884.8L835.7 885.8L836.3 886.8L836.9 887.8L837.5 888.8L838.1 889.8L838.7 890.8L839.3 891.8L839.9 892.8L840.5 893.8L841.1 894.8L841.7 895.8L842.3 896.8L842.9 897.8L843.6 898.8L844.2 899.8L844.8 900.7L845.5 901.7L846.1 902.7L846.8 903.7L847.4 904.6L848.1 905.6L848.7 906.6L849.4 907.5L850.1 908.5L850.7 909.4L851.4 910.4L852.1 911.3L852.8 912.3L853.5 913.2L854.2 914.2L854.9 915.1L855.6 916L856.3 916.9L857.1 917.8L857.8 918.7L858.5 919.6L859.3 920.5L860.1 921.4L860.9 922.2L861.7 923.1L862.5 923.9L863.3 924.8L864.2 925.6L865 926.4L865.8 927.2L866.7 928L867.5 928.8L868.3 929.7L869.2 930.5L870 931.3L870.8 932.1L871.7 932.9L872.5 933.8M734.3 767.1L746.6 759.5M774.9 742.1L787.4 734.5M749.3 777.1L759.5 768.4M785 746.8L794.5 738.7M762.5 789.6L770.9 779.6M794 752L801.3 743.3M774.5 804.4L781.8 792.4M802.3 758.4L808.3 748.5M793.1 834.4L799.2 817.7M816.2 770.9L820.7 758.8M809.8 866.5L814.8 845.5M829.5 783.8L832.7 770.1M827.3 896L830.3 876.1M842.3 795.1L844.5 780.4M839 913.5L840.9 894.6M850.4 801.7L852 786.3M847.1 925.3L848.5 906.2M856 806.1L857.2 790.3M783.9 818.8L790.6 804.5M802 850.2L807.4 831.5M817.3 880.9L821.6 859.2M874.5 816L874.9 819L875.3 821.9L875.8 824.7L876.2 827.6L876.6 830.6L877 833.6L877.3 836.7L877.6 840L877.8 843.5L878 847.1L878.2 850.8L878.4 854.6L878.5 858.5L878.5 862.4L878.6 866.2L878.6 870L878.6 873.8L878.5 877.7L878.4 881.6L878.3 885.5L878.1 889.3L877.9 893.1L877.7 896.6L877.5 900L877.3 903.2L877 906.2L876.7 909L876.4 911.8L876.1 914.4L875.7 917L875.4 919.5L875 922L874.6 924.4L874.2 926.8L873.8 929L873.3 931.2L872.9 933.4L872.4 935.6L871.9 937.8L871.5 940M856.2 937.5L856.6 936.6L857 935.6L857.3 934.7L857.7 933.8L858.1 932.8L858.4 931.9L858.7 931L859 930L859.2 929L859.5 928L859.7 927L859.8 926L860 925L860.2 924L860.3 923L860.5 922"/>
<path stroke-width="1.8" d="M1457.7 745.4L1460.9 745.4L1464.1 745.5L1467.2 745.7L1470.3 745.9L1473.3 746.2L1476.3 746.5L1479.2 746.9L1482.1 747.4L1485 747.9L1487.7 748.5L1490.5 749.1L1493.2 749.8L1495.8 750.6L1498.4 751.4L1500.9 752.2L1503.4 753.2L1505.8 754.2L1508.2 755.2L1510.5 756.3L1512.8 757.5L1515 758.7L1517.1 760L1519.3 761.3L1521.3 762.7L1523.3 764.2L1525.3 765.7L1527.2 767.3L1529 768.9L1530.8 770.5L1532.5 772.3L1534.2 774.1L1535.8 775.9L1537.4 777.8L1538.9 779.7L1540.3 781.7L1541.7 783.8L1543 785.9L1544.3 788.1L1545.6 790.3L1546.7 792.5L1547.8 794.9L1548.9 797.2L1549.9 799.7L1550.8 802.1L1551.7 804.7L1552.5 807.3L1553.2 809.9L1553.9 812.6L1554.6 815.3L1555.2 818.1L1555.7 820.9L1556.1 823.8L1556.5 826.8L1556.9 829.7L1557.2 832.8L1557.4 835.9L1557.5 839L1557.6 842.2L1557.7 845.4L1557.7 1069.4L1557.6 1072.6L1557.5 1075.8L1557.4 1078.9L1557.2 1082L1556.9 1085.1L1556.5 1088L1556.1 1091L1555.7 1093.9L1555.2 1096.7L1554.6 1099.5L1553.9 1102.2L1553.2 1104.9L1552.5 1107.5L1551.7 1110.1L1550.8 1112.7L1549.9 1115.1L1548.9 1117.6L1547.8 1119.9L1546.7 1122.3L1545.6 1124.5L1544.3 1126.7L1543 1128.9L1541.7 1131L1540.3 1133.1L1538.9 1135.1L1537.4 1137L1535.8 1138.9L1534.2 1140.7L1532.5 1142.5L1530.8 1144.3L1529 1145.9L1527.2 1147.5L1525.3 1149.1L1523.3 1150.6L1521.3 1152.1L1519.3 1153.5L1517.1 1154.8L1515 1156.1L1512.8 1157.3L1510.5 1158.5L1508.2 1159.6L1505.8 1160.6L1503.4 1161.6L1500.9 1162.6L1498.4 1163.4L1495.8 1164.2L1493.2 1165L1490.5 1165.7L1487.7 1166.3L1485 1166.9L1482.1 1167.4L1479.2 1167.9L1476.3 1168.3L1473.3 1168.6L1470.3 1168.9L1467.2 1169.1L1464.1 1169.3L1460.9 1169.4L1457.7 1169.4M970.8 745.4L967.5 745.4L964.3 745.5L961.2 745.7L958.1 745.9L955.1 746.2L952.1 746.5L949.2 746.9L946.3 747.4L943.4 747.9L940.7 748.5L937.9 749.1L935.2 749.8L932.6 750.6L930 751.4L927.5 752.2L925 753.2L922.6 754.2L920.2 755.2L917.9 756.3L915.6 757.5L913.4 758.7L911.3 760L909.1 761.3L907.1 762.7L905.1 764.2L903.1 765.7L901.2 767.3L899.4 768.9L897.6 770.5L895.9 772.3L894.2 774.1L892.6 775.9L891 777.8L889.5 779.7L888.1 781.7L886.7 783.8L885.4 785.9L884.1 788.1L882.8 790.3L881.7 792.5L880.6 794.9L879.5 797.2L878.5 799.7L877.6 802.1L876.7 804.7L875.9 807.3L875.2 809.9L874.5 812.6L873.8 815.3L873.2 818.1L872.7 820.9L872.3 823.8L871.9 826.8L871.5 829.7L871.2 832.8L871 835.9L870.9 839L870.8 842.2L870.8 845.4L870.8 1069.4L870.8 1072.6L870.9 1075.8L871 1078.9L871.2 1082L871.5 1085.1L871.9 1088L872.3 1091L872.7 1093.9L873.2 1096.7L873.8 1099.5L874.5 1102.2L875.2 1104.9L875.9 1107.5L876.7 1110.1L877.6 1112.7L878.5 1115.1L879.5 1117.6L880.6 1119.9L881.7 1122.3L882.8 1124.5L884.1 1126.7L885.4 1128.9L886.7 1131L888.1 1133.1L889.5 1135.1L891 1137L892.6 1138.9L894.2 1140.7L895.9 1142.5L897.6 1144.3L899.4 1145.9L901.2 1147.5L903.1 1149.1L905.1 1150.6L907.1 1152.1L909.1 1153.5L911.3 1154.8L913.4 1156.1L915.6 1157.3L917.9 1158.5L920.2 1159.6L922.6 1160.6L925 1161.6L927.5 1162.6L930 1163.4L932.6 1164.2L935.2 1165L937.9 1165.7L940.7 1166.3L943.4 1166.9L946.3 1167.4L949.2 1167.9L952.1 1168.3L955.1 1168.6L958.1 1168.9L961.2 1169.1L964.3 1169.3L967.5 1169.4L970.8 1169.4M1448 730.2L1458.2 730.4L1467.9 731.2L1477.3 732.3L1486.2 734L1494.7 736.1L1502.8 738.7L1510.5 741.7L1517.8 745.2L1524.6 749.1L1531 753.5L1537 758.3L1542.5 763.5L1547.5 769.2L1552.1 775.3L1556.2 781.8L1559.9 788.7L1563.1 796L1565.8 803.7L1568 811.8L1569.7 820.4L1571 829.3L1571.7 838.5L1572 848.2L1572 1069.3L1571.8 1078.6L1571.1 1087.6L1569.9 1096.2L1568.3 1104.4L1566.3 1112.3L1563.8 1119.7L1560.9 1126.8L1557.5 1133.5L1553.7 1139.7L1549.5 1145.6L1544.8 1151.1L1539.8 1156.1L1534.3 1160.8L1528.4 1165L1522.2 1168.8L1515.5 1172.2L1508.4 1175.1L1501 1177.6L1493.1 1179.6L1484.9 1181.2L1476.3 1182.4L1467.3 1183.1L1458 1183.3M980.4 730.2L970.2 730.4L960.5 731.2L951.1 732.3L942.2 734L933.7 736.1L925.6 738.7L917.9 741.7L910.6 745.2L903.8 749.1L897.4 753.5L891.4 758.3L885.9 763.5L880.9 769.2L876.3 775.3L872.2 781.8L868.5 788.7L865.3 796L862.6 803.7L860.4 811.8L858.7 820.4L857.4 829.3L856.7 838.5L856.4 848.2L856.4 1069.3L856.6 1078.6L857.3 1087.6L858.5 1096.2L860.1 1104.4L862.1 1112.3L864.6 1119.7L867.5 1126.8L870.9 1133.5L874.7 1139.7L878.9 1145.6L883.6 1151.1L888.6 1156.1L894.1 1160.8L900 1165L906.2 1168.8L912.9 1172.2L920 1175.1L927.4 1177.6L935.3 1179.6L943.5 1181.2L952.1 1182.4L961.1 1183.1L970.4 1183.3M970.4 1183.3L1458 1183.3M1214.5 527L1214.5 1183.3M1214.2 641.8L1208.6 641.8L1203 641.9L1197.4 642L1191.7 642.2L1186.1 642.4L1180.5 642.6L1174.9 642.9L1169.3 643.3L1163.7 643.7L1158 644.1L1152.4 644.6L1146.8 645.1L1141.2 645.7L1135.6 646.3L1130 647L1124.4 647.7L1118.7 648.5L1113.1 649.3L1107.5 650.1L1101.9 651L1096.3 652L1090.7 653L1085 654L1079.4 655.1L1073.8 656.2L1068.2 657.4L1062.6 658.6L1057 659.9L1051.4 661.2L1045.7 662.6L1040.1 664L1034.5 665.5L1028.9 667L1023.3 668.5L1017.7 670.1L1012 671.8L1006.4 673.4L1000.8 675.2L995.2 677L995.2 677L991.2 678.3L987.9 679.7L985.2 681.3L983.1 683.1L981.6 685.3L980.7 687.9L980.4 691M1214.2 641.8L1219.8 641.8L1225.4 641.9L1231 642L1236.7 642.2L1242.3 642.4L1247.9 642.6L1253.5 642.9L1259.1 643.3L1264.7 643.7L1270.4 644.1L1276 644.6L1281.6 645.1L1287.2 645.7L1292.8 646.3L1298.4 647L1304 647.7L1309.7 648.5L1315.3 649.3L1320.9 650.1L1326.5 651L1332.1 652L1337.7 653L1343.4 654L1349 655.1L1354.6 656.2L1360.2 657.4L1365.8 658.6L1371.4 659.9L1377 661.2L1382.7 662.6L1388.3 664L1393.9 665.5L1399.5 667L1405.1 668.5L1410.7 670.1L1416.4 671.8L1422 673.4L1427.6 675.2L1433.2 677L1433.2 677L1437.2 678.3L1440.5 679.7L1443.2 681.3L1445.3 683.1L1446.8 685.3L1447.7 687.9L1448 691M1182.4 658L1177.1 658.2L1171.8 658.5L1166.5 658.9L1161.2 659.3L1155.9 659.7L1150.6 660.2L1145.3 660.8L1140 661.3L1134.7 661.9L1129.4 662.6L1124.1 663.3L1118.8 664L1113.5 664.8L1108.2 665.6L1102.9 666.5L1097.6 667.4L1092.3 668.3L1087 669.3L1081.7 670.4L1076.4 671.4L1071.1 672.6L1065.8 673.7L1060.5 674.9L1055.2 676.2L1049.9 677.4L1044.6 678.8L1039.3 680.1L1034 681.6L1028.7 683L1023.4 684.5L1018.1 686L1012.8 687.6L1007.5 689.2M1246 658L1251.3 658.2L1256.6 658.5L1261.9 658.9L1267.2 659.3L1272.5 659.7L1277.8 660.2L1283.1 660.8L1288.4 661.3L1293.7 661.9L1299 662.6L1304.3 663.3L1309.6 664L1314.9 664.8L1320.2 665.6L1325.5 666.5L1330.8 667.4L1336.1 668.3L1341.4 669.3L1346.7 670.4L1352 671.4L1357.3 672.6L1362.6 673.7L1367.9 674.9L1373.2 676.2L1378.5 677.4L1383.8 678.8L1389.1 680.1L1394.4 681.6L1399.7 683L1405 684.5L1410.3 686L1415.6 687.6L1420.9 689.2M980.4 690L980.4 703.5M1448 690L1448 703.5M980.4 703L980.7 704.3L981.2 705.4L982.1 706.1L983.4 706.6L985 706.9M1448 703L1447.7 704.3L1447.2 705.4L1446.3 706.1L1445 706.6L1443.4 706.9M1009 688.1L1007.2 689.3L1007 691.5L1008.5 692.8M1419.4 688.1L1421.2 689.3L1421.4 691.5L1419.9 692.8M980.4 706.9L980.4 731.4M1448 706.9L1448 731.4M1004.4 707V734Q1004.4 740.7 1010.4 740.7H1013Q1019 740.7 1019 734V693M1424 707V734Q1424 740.7 1418 740.7H1415.4Q1409.4 740.7 1409.4 734V693M1180.7 627.8L1180.7 643.2M1247.7 627.8L1247.7 643.2M1180.7 627.8L1247.7 627.8M1196.4 615.9H1232Q1233.5 615.9 1233.5 617.4V656Q1233.5 657.5 1232 657.5H1196.4Q1194.9 657.5 1194.9 656V617.4Q1194.9 615.9 1196.4 615.9ZM1199.6 616L1199.6 742M1228.8 616L1228.8 742M1185.6 657.8L1242.8 657.8M1185.6 657.9L1185.6 742.3M1242.8 657.9L1242.8 742.3M1189.8 661.6L1189.8 742.3M1238.6 661.6L1238.6 742.3M1185.6 742.3L1242.8 742.3M1209.4 527.8L1209.4 700M1189.8 699.6L1238.6 699.6M1204.8 713.6H1223.6Q1225.1 713.6 1225.1 715.1V731.9Q1225.1 733.4 1223.6 733.4H1204.8Q1203.3 733.4 1203.3 731.9V715.1Q1203.3 713.6 1204.8 713.6ZM1205.5 737.5H1222.9Q1224.4 737.5 1224.4 739V741.5Q1224.4 743 1222.9 743H1205.5Q1204 743 1204 741.5V739Q1204 737.5 1205.5 737.5ZM1181 804.5L1247 804.5M1035.4 866.4L1393 866.4M1035.4 1035L1035.7 1038.5L1036.6 1041.7L1038.1 1044.6L1040.2 1047.1L1042.8 1049.2L1045.9 1050.9L1049.5 1052.1L1053.5 1052.8L1058 1053.1M1393 1035L1392.7 1038.5L1391.8 1041.7L1390.3 1044.6L1388.2 1047.1L1385.6 1049.2L1382.5 1050.9L1378.9 1052.1L1374.9 1052.8L1370.4 1053.1M1045.5 1026L1045.7 1029.2L1046.4 1032.1L1047.6 1034.8L1049.1 1037.1L1051 1039L1053.3 1040.6L1055.9 1041.7L1058.8 1042.5L1062 1042.7M1382.9 1026L1382.7 1029.2L1382 1032.1L1380.8 1034.8L1379.3 1037.1L1377.4 1039L1375.1 1040.6L1372.5 1041.7L1369.6 1042.5L1366.4 1042.7M1058 1053.1L1370.4 1053.1M1214.2 932.8L1190 932.8L1187.5 935L1187.5 965L1186.5 971L1186.5 1018.8M1214.2 932.8L1238.4 932.8L1240.9 935L1240.9 965L1241.9 971L1241.9 1018.8M1187.5 993.1L1240.9 993.1M1181.2 1018.8H1247.2V1038.1H1181.2ZM1171.6 1053.8H1256.8Q1257.8 1053.8 1257.8 1054.8V1056.5Q1257.8 1057.5 1256.8 1057.5H1171.6Q1170.6 1057.5 1170.6 1056.5V1054.8Q1170.6 1053.8 1171.6 1053.8ZM1054.4 1139.6H1374Q1378 1139.6 1378 1144.3Q1378 1149 1374 1149H1054.4Q1050.4 1149 1050.4 1144.3Q1050.4 1139.6 1054.4 1139.6ZM1053.4 1142.7L1375 1142.7M907 724L907 483.5L907.1 476.9L907.5 470.2L908.2 463.6L909.1 457L910.2 450.5L911.6 444L913.3 437.6L915.2 431.2L917.3 425L919.7 418.8L922.4 412.8L925.2 406.8L928.3 401L931.6 395.3L935.1 389.8L938.9 384.4L942.8 379.1L947 374.1L951.3 369.2L955.9 364.5L960.6 360L965.4 355.7L970.5 351.6L975.7 347.7L981 344L986.5 340.6L992.1 337.4L997.8 334.4L1003.7 331.7L1009.6 329.2L1015.6 327L1021.8 325L1027.9 323.3L1034.2 321.8L1040.5 320.6L1046.8 319.7L1053.2 319L1059.6 318.6L1066 318.5L1362.4 318.5L1368.8 318.6L1375.2 319L1381.6 319.7L1387.9 320.6L1394.2 321.8L1400.5 323.3L1406.6 325L1412.8 327L1418.8 329.2L1424.7 331.7L1430.6 334.4L1436.3 337.4L1441.9 340.6L1447.4 344L1452.7 347.7L1457.9 351.6L1463 355.7L1467.8 360L1472.5 364.5L1477.1 369.2L1481.4 374.1L1485.6 379.1L1489.5 384.4L1493.3 389.8L1496.8 395.3L1500.1 401L1503.2 406.8L1506 412.8L1508.7 418.8L1511.1 425L1513.2 431.2L1515.1 437.6L1516.8 444L1518.2 450.5L1519.3 457L1520.2 463.6L1520.9 470.2L1521.3 476.9L1521.4 483.5L1521.4 724M909.5 724L909.5 483.5L909.6 476.9L910 470.4L910.6 463.9L911.5 457.4L912.7 450.9L914 444.5L915.7 438.2L917.6 431.9L919.7 425.8L922 419.7L924.6 413.7L927.4 407.8L930.5 402.1L933.7 396.5L937.2 391L940.9 385.7L944.8 380.5L948.9 375.5L953.1 370.7L957.6 366.1L962.2 361.6L967 357.4L972 353.4L977.1 349.5L982.4 345.9L987.8 342.5L993.3 339.3L998.9 336.4L1004.7 333.7L1010.5 331.3L1016.4 329.1L1022.5 327.1L1028.5 325.4L1034.7 324L1040.9 322.8L1047.1 321.9L1053.4 321.2L1059.7 320.8L1066 320.7L1362.4 320.7L1368.7 320.8L1375 321.2L1381.3 321.9L1387.5 322.8L1393.7 324L1399.9 325.4L1405.9 327.1L1412 329.1L1417.9 331.3L1423.7 333.7L1429.5 336.4L1435.1 339.3L1440.7 342.5L1446 345.9L1451.3 349.5L1456.4 353.4L1461.4 357.4L1466.2 361.6L1470.8 366.1L1475.3 370.7L1479.5 375.5L1483.6 380.5L1487.5 385.7L1491.2 391L1494.7 396.5L1497.9 402.1L1501 407.8L1503.8 413.7L1506.4 419.7L1508.7 425.8L1510.8 431.9L1512.7 438.2L1514.4 444.5L1515.7 450.9L1516.9 457.4L1517.8 463.9L1518.4 470.4L1518.8 476.9L1518.9 483.5L1518.9 724M894.3 720L894.3 723.5L897 726.3L908 726.3M908.5 744L908.5 685L910.5 682.6L922 682.6L924.2 685L924.2 737M908.5 701.9L924.2 701.9M908.5 703.7L924.2 703.7M1534.1 720L1534.1 723.5L1531.4 726.3L1520.4 726.3M1519.9 744L1519.9 685L1517.9 682.6L1506.4 682.6L1504.2 685L1504.2 737M1519.9 701.9L1504.2 701.9M1519.9 703.7L1504.2 703.7M991.5 308.7L996.2 306.6L1001 304.7L1005.8 302.9L1010.6 301.3L1015.5 299.7L1020.5 298.4L1025.4 297.1L1030.4 296.1L1035.5 295.1L1040.5 294.3L1045.6 293.7L1050.7 293.2L1055.8 292.8L1060.9 292.6L1066 292.5L1362.4 292.5L1369.8 292.7L1377.3 293.1L1384.7 293.9L1392.1 295L1399.4 296.4L1406.7 298.1L1413.9 300L1421 302.3L1428 304.9L1434.9 307.8L1441.7 310.9L1448.4 314.4L1454.9 318.1L1461.3 322.1L1467.5 326.3L1473.5 330.8L1479.4 335.6L1485.1 340.5L1490.6 345.8L1495.8 351.2L1500.9 356.8L1505.7 362.7L1510.3 368.8L1514.7 375L1518.8 381.4L1522.6 388L1526.2 394.7L1529.5 401.6L1532.6 408.6L1535.4 415.8L1537.9 423L1540.1 430.4L1542 437.8L1543.7 445.3L1545 452.9L1546.1 460.5L1546.8 468.1L1547.2 475.8L1547.4 483.5L1547.4 547.5M988.2 320.7L993 318.3L998 316.1L1003 314L1008 312.1L1013.1 310.3L1018.2 308.7L1023.4 307.3L1028.7 306.1L1033.9 305L1039.2 304L1044.6 303.3L1049.9 302.7L1055.3 302.2L1060.6 302L1066 301.9L1362.4 301.9L1369.5 302L1376.5 302.5L1383.6 303.2L1390.6 304.3L1397.5 305.6L1404.4 307.2L1411.3 309.1L1418 311.2L1424.7 313.7L1431.2 316.4L1437.7 319.4L1444 322.7L1450.2 326.2L1456.3 330L1462.2 334L1467.9 338.3L1473.5 342.8L1478.8 347.6L1484 352.5L1489 357.7L1493.8 363.1L1498.4 368.6L1502.8 374.4L1506.9 380.3L1510.8 386.4L1514.5 392.7L1517.9 399.1L1521 405.6L1523.9 412.3L1526.6 419.1L1529 426L1531.1 433L1532.9 440L1534.5 447.2L1535.7 454.4L1536.7 461.6L1537.4 468.9L1537.9 476.2L1538 483.5L1538 548M991.5 308.7L989.6 309.6L987.9 310.8L986.5 312.2L985.3 313.8L984.5 315.7L984.2 317.7L984.4 320L996.9 344.8L996.9 344.8L997.8 346.5L998.8 347.9L999.9 349L1001.1 349.6L1002.4 350L1003.9 349.9L1005.5 349.6M1003.8 349.9L1006.8 348.9L1009.9 347.9L1012.9 346.9L1015.9 345.9L1019 344.9L1022 344L1025.1 343.1L1028.2 342.3L1031.4 341.5L1034.5 340.8L1037.4 340.1L1040 339.5L1042.3 339L1044.3 338.5L1046.1 338.1L1047.9 337.8L1049.7 337.5L1051.7 337.3L1053.8 337.1L1056.1 337L1058.3 336.9L1060.6 336.9L1062.8 336.9L1065 337L1067.1 337.1L1069.1 337.3L1071 337.5L1073 337.8L1075 338.2L1077 338.7L1079.1 339.3L1081.3 340L1083.5 340.8L1085.6 341.7L1087.8 342.6L1090 343.5L1092.1 344.4L1094.2 345.4L1096.3 346.5L1098.4 347.5L1100.6 348.7L1102.8 349.9L1105.1 351.2L1107.4 352.7L1109.8 354.2L1112.2 355.7L1114.6 357.1L1117 358.5L1119.4 359.8L1121.8 361.2L1124.2 362.5L1126.7 363.7L1129.1 364.8L1131.6 365.5L1134.1 366L1136.6 366.2L1139.2 366.2L1141.8 366.1L1144.4 365.8L1147 365.5L1149.7 365L1152.5 364.3L1155.4 363.5L1158.2 362.6L1160.9 361.8L1163.5 361L1165.9 360.3L1168.3 359.6L1170.5 358.8L1172.7 358.2L1174.9 357.6L1177 357L1179.1 356.5L1181.1 356.1L1183.2 355.7L1185.1 355.3L1187.1 355.1L1189 354.9L1190.9 354.8L1192.7 354.8L1194.5 354.9L1196.3 355.1L1198.2 355.3L1200 355.5L1201.8 355.8L1203.6 356L1205.4 356.4L1207.3 356.8L1209.3 357.3L1211.4 357.9L1213.7 358.6L1216.3 359.5L1218.9 360.4L1221.6 361.4L1224.3 362.4L1227 363.5L1229.7 364.6L1232.5 365.9L1235.4 367.1L1238.2 368.4L1240.9 369.6L1243.4 370.6L1245.7 371.5L1247.9 372.4L1249.9 373.2L1251.9 373.9L1253.9 374.5L1256 375L1258.1 375.4L1260.2 375.8L1262.3 376.1L1264.4 376.3L1266.7 376.4L1269 376.4L1271.5 376.3L1274.1 376.1L1276.8 375.8L1279.6 375.4L1282.3 375L1285 374.5L1287.7 374L1290.5 373.3L1293.3 372.6L1296 371.9L1298.6 371.2L1301 370.6L1303.1 370.1L1305 369.6L1306.8 369.1L1308.5 368.7L1310.2 368.3L1312 368L1313.9 367.8L1315.8 367.6L1317.7 367.4L1319.6 367.4L1321.4 367.4L1323.3 367.4L1325.1 367.5L1326.9 367.6L1328.6 367.8L1330.4 368.1L1332.2 368.4L1334 368.8L1335.9 369.3L1337.8 369.9L1339.7 370.5L1341.6 371.2L1343.6 372L1345.6 373L1347.6 374.1L1349.6 375.3L1351.7 376.6L1353.8 378L1355.9 379.5L1358 381L1360.2 382.7L1362.5 384.5L1364.8 386.3L1367 388.2L1369.2 390.1L1371.2 391.8L1373 393.4L1374.7 395L1376.3 396.6L1377.9 398.1L1379.4 399.6L1381 401L1382.6 402.4L1384.2 403.8L1385.8 405.1L1387.3 406.4L1388.9 407.5L1390.4 408.5L1391.9 409.3L1393.3 410L1394.6 410.6L1396 411.1L1397.5 411.6L1399 412L1400.5 412.4L1401.8 412.6L1403.2 412.8L1404.8 413L1406.9 413.2L1409.5 413.3L1413 413.4L1417.2 413.5L1421.8 413.5L1426.6 413.5L1431.1 413.6L1435 413.8L1438.3 414L1441.4 414.3L1444.2 414.7L1446.8 415L1449.4 415.5L1452 416L1454.7 416.6L1457.3 417.3L1459.9 418L1462.4 418.8L1464.8 419.6L1467 420.4L1469.1 421.2L1471.1 422.1L1472.9 423L1474.7 423.9L1476.4 424.9L1478 426L1479.5 427.1L1481 428.3L1482.3 429.5L1483.6 430.7L1484.9 432.1L1486.2 433.5L1487.5 435L1488.8 436.6L1490 438.2L1491.2 439.9L1492.4 441.7L1493.5 443.5L1494.6 445.4L1495.6 447.3L1496.5 449.3L1497.5 451.4L1498.3 453.6L1499 456L1499.6 458.5L1500.1 461.2L1500.5 464L1500.9 466.9L1501.2 469.9L1501.5 473L1501.7 476.3L1501.9 479.8L1502 483.3L1502 486.9L1502.1 490.4L1502.2 493.6L1502.3 496.6L1502.5 499.4L1502.6 502.1L1502.7 504.7L1502.9 507.4L1503 510L1503.1 512.7L1503.2 515.4L1503.3 518.1L1503.5 520.7L1503.6 523.2L1503.8 525.6L1504 527.9L1504.2 530.1L1504.5 532.2L1504.8 534.2L1505.1 536.1L1505.5 538L1505.9 539.9L1506.4 541.7L1506.9 543.4L1507.5 545.1L1508 546.6L1508.6 548L1509.2 549.2L1509.8 550.3L1510.4 551.2L1511 552L1511.7 552.8L1512.5 553.5L1513.3 554.1L1514.3 554.6L1515.2 555.1L1516.2 555.5L1517.2 555.9L1518.2 556.3M1003.8 339.8L1006.8 338.8L1009.9 337.8L1013 336.7L1016.2 335.7L1019.3 334.8L1022.6 333.9L1025.9 333L1029.1 332.2L1032.3 331.4L1035.2 330.7L1037.9 330.1L1040.2 329.6L1042.3 329.1L1044.3 328.7L1046.3 328.3L1048.5 328L1050.7 327.7L1053.1 327.5L1055.6 327.4L1058.1 327.3L1060.6 327.3L1063.1 327.3L1065.5 327.4L1067.8 327.6L1070 327.8L1072.3 328L1074.6 328.4L1077 328.8L1079.4 329.4L1081.9 330.1L1084.4 330.9L1086.8 331.8L1089.2 332.8L1091.6 333.7L1093.8 334.7L1096.1 335.7L1098.4 336.8L1100.6 337.9L1102.9 339L1105.1 340.2L1107.5 341.5L1110 343L1112.5 344.5L1114.9 346L1117.2 347.5L1119.5 348.9L1121.7 350.1L1124.1 351.5L1126.5 352.8L1128.7 354L1130.6 355L1132.3 355.7L1133.8 356.2L1135.4 356.4L1137.1 356.6L1139 356.6L1141.1 356.5L1143.3 356.3L1145.5 356L1147.7 355.6L1150.1 355L1152.6 354.3L1155.3 353.5L1158.1 352.6L1160.8 351.8L1163.2 351.1L1165.4 350.4L1167.7 349.7L1170 349L1172.3 348.3L1174.7 347.7L1177 347.1L1179.2 346.7L1181.4 346.2L1183.7 345.8L1186 345.5L1188.4 345.3L1190.7 345.2L1193 345.2L1195.2 345.3L1197.3 345.5L1199.3 345.7L1201.3 346L1203.3 346.3L1205.3 346.6L1207.3 347L1209.5 347.5L1211.7 348L1214.1 348.7L1216.7 349.5L1219.4 350.4L1222.2 351.4L1225 352.4L1227.8 353.5L1230.6 354.6L1233.5 355.8L1236.4 357.1L1239.3 358.4L1242.1 359.6L1244.6 360.7L1247 361.7L1249.3 362.6L1251.3 363.4L1253.2 364.1L1254.9 364.7L1256.5 365.2L1258.2 365.6L1259.9 366L1261.7 366.3L1263.4 366.6L1265.1 366.7L1266.9 366.8L1268.8 366.8L1270.9 366.7L1273.2 366.5L1275.6 366.3L1278.2 365.9L1280.7 365.5L1283.2 365.1L1285.7 364.6L1288.3 364L1290.9 363.3L1293.6 362.6L1296.2 361.9L1298.7 361.3L1300.7 360.8L1302.6 360.3L1304.4 359.8L1306.3 359.3L1308.4 358.9L1310.6 358.5L1312.8 358.2L1315 358L1317.2 357.9L1319.3 357.8L1321.5 357.8L1323.6 357.8L1325.7 357.9L1327.7 358.1L1329.8 358.3L1331.9 358.6L1334.1 359L1336.3 359.5L1338.5 360L1340.6 360.7L1342.9 361.4L1345.2 362.3L1347.6 363.3L1349.9 364.4L1352.3 365.7L1354.7 367.1L1357 368.6L1359.2 370.1L1361.5 371.6L1363.7 373.3L1366.1 375.1L1368.5 377L1370.9 378.9L1373.2 380.9L1375.4 382.8L1377.5 384.6L1379.5 386.4L1381.4 388.1L1383 389.7L1384.5 391.2L1386 392.5L1387.4 393.8L1388.9 395.1L1390.4 396.5L1391.9 397.7L1393.2 398.8L1394.4 399.6L1395.4 400.3L1396.4 400.9L1397.3 401.3L1398.2 401.7L1399.1 402L1400.1 402.4L1401.4 402.7L1402.6 403L1403.5 403.2L1404.4 403.3L1405.6 403.4L1407.5 403.6L1409.9 403.7L1413.2 403.8L1417.3 403.9L1421.9 403.9L1426.7 403.9L1431.4 404L1435.5 404.2L1439.1 404.5L1442.4 404.8L1445.4 405.1L1448.3 405.6L1451.1 406L1454 406.6L1456.9 407.3L1459.8 408L1462.6 408.8L1465.3 409.6L1468 410.5L1470.4 411.4L1472.8 412.4L1475.1 413.4L1477.3 414.4L1479.4 415.6L1481.4 416.8L1483.4 418.1L1485.4 419.5L1487.2 420.9L1488.9 422.4L1490.5 424L1491.9 425.5L1493.4 427.1L1494.8 428.8L1496.3 430.6L1497.7 432.5L1499.2 434.5L1500.5 436.6L1501.8 438.7L1503 440.8L1504.1 443L1505.3 445.3L1506.4 447.8L1507.4 450.6L1508.3 453.5L1509 456.5L1509.6 459.6L1510.1 462.7L1510.4 465.8L1510.8 469L1511.1 472.3L1511.3 475.8L1511.5 479.4L1511.6 483.1L1511.6 486.7L1511.7 490.1L1511.8 493.2L1511.9 496.2L1512 498.9L1512.2 501.6L1512.3 504.3L1512.5 506.9L1512.6 509.5L1512.7 512.3L1512.8 515L1512.9 517.6L1513.1 520.2L1513.2 522.5L1513.4 524.8L1513.6 526.9L1513.8 529L1514 530.9L1514.3 532.7L1514.6 534.4L1514.9 536L1515.3 537.6L1515.7 539.1L1516.1 540.6L1516.5 541.9L1517 543.1L1517.4 544.1L1517.7 544.8L1518 545.3L1518.2 545.6L1518.4 545.8L1518.5 546L1518.6 546.1L1518.5 546L1518.6 546L1519 546.2M1518.2 556.6L1539 556.8L1539 556.8L1542 556.2L1544.3 555L1545.9 553.1L1546.9 550.6L1547.2 547.5M1123.7 335.2A9.4 9.4 0 1 0 1142.5 335.2A9.4 9.4 0 1 0 1123.7 335.2M1404.9 364.4A9.4 9.4 0 1 0 1423.7 364.4A9.4 9.4 0 1 0 1404.9 364.4M1072.7 295.5L1072.7 302M1355.6 295.5L1355.6 302M780.6 730.6L781 730.8L781.4 731L781.7 731.3L782.1 731.5L782.5 731.7L782.9 731.9L783.2 732.1L783.6 732.3L784 732.5L784.4 732.8L784.8 733L785.1 733.2L785.5 733.4L785.9 733.6L786.3 733.8L786.7 734L787 734.2L787.4 734.5L787.8 734.7L788.2 734.9L788.5 735.1L788.9 735.3L789.3 735.5L789.7 735.7L790.1 736L790.4 736.2L790.8 736.4L791.2 736.6L791.5 736.8L791.9 737.1L792.3 737.3L792.7 737.5L793 737.8L793.4 738L793.8 738.2L794.1 738.5L794.5 738.7L794.9 738.9L795.2 739.2L795.6 739.4L796 739.6L796.3 739.9L796.7 740.1L797 740.4L797.4 740.6L797.8 740.9L798.1 741.1L798.5 741.3L798.8 741.6L799.2 741.8L799.5 742.1L799.9 742.3L800.3 742.6L800.6 742.8L801 743.1L801.3 743.3L801.7 743.6L802 743.9L802.4 744.1L802.7 744.4L803.1 744.6L803.4 744.9L803.8 745.1L804.1 745.4L804.5 745.7L804.8 745.9L805.2 746.2L805.5 746.4L805.9 746.7L806.2 747L806.6 747.2L806.9 747.5L807.3 747.7L807.6 748L807.9 748.3L808.3 748.5L808.6 748.8L809 749.1L809.3 749.3L809.7 749.6L810 749.9L810.3 750.1L810.7 750.4L811 750.7L811.4 751L811.7 751.2L812 751.5L812.4 751.8L812.7 752L813.1 752.3L813.4 752.6L813.7 752.9L814.1 753.1L814.4 753.4L814.7 753.7L815.1 754L815.4 754.3L815.7 754.5L816.1 754.8L816.4 755.1L816.7 755.4L817.1 755.7L817.4 756L817.7 756.2L818 756.5L818.4 756.8L818.7 757.1L819 757.4L819.4 757.7L819.7 758L820 758.2L820.3 758.5L820.7 758.8L821 759.1L821.3 759.4L821.6 759.7L822 760L822.3 760.3L822.6 760.6L822.9 760.8L823.3 761.1L823.6 761.4L823.9 761.7L824.2 762L824.5 762.3L824.8 762.6L825.2 762.9L825.5 763.2L825.8 763.5L826.1 763.8L826.4 764.1L826.7 764.4L827 764.7L827.3 765L827.7 765.3L828 765.6L828.3 765.9L828.6 766.2L828.9 766.5L829.2 766.9L829.5 767.2L829.8 767.5L830.2 767.8L830.5 768.1L830.8 768.4L831.1 768.7L831.4 769L831.7 769.3L832 769.5L832.4 769.8L832.7 770.1L833 770.4L833.3 770.7L833.6 771L834 771.3L834.3 771.6L834.6 771.9L834.9 772.2L835.3 772.5L835.6 772.8L835.9 773L836.2 773.3L836.6 773.6L836.9 773.9L837.2 774.2L837.6 774.5L837.9 774.8L838.2 775L838.5 775.3L838.9 775.6L839.2 775.9L839.5 776.2L839.9 776.5L840.2 776.7L840.5 777L840.9 777.3L841.2 777.6L841.5 777.9L841.9 778.1L842.2 778.4L842.5 778.7L842.9 779L843.2 779.3L843.5 779.5L843.9 779.8L844.2 780.1L844.5 780.4L844.9 780.6L845.2 780.9L845.5 781.2L845.9 781.5L846.2 781.7L846.5 782L846.9 782.3L847.2 782.6L847.6 782.8L847.9 783.1L848.2 783.4L848.6 783.7L848.9 783.9L849.3 784.2L849.6 784.5L849.9 784.7L850.3 785L850.6 785.3L851 785.5L851.3 785.8L851.7 786.1L852 786.3L852.3 786.6L852.7 786.9L853 787.1L853.4 787.4L853.7 787.7L854.1 787.9L854.4 788.2L854.8 788.4L855.1 788.7L855.5 789L855.8 789.2L856.2 789.5L856.5 789.7L856.9 790L857.2 790.3L857.6 790.5L857.9 790.8L858.3 791L858.6 791.3L859 791.5L859.3 791.8L859.7 792.1L860 792.3L860.4 792.6L860.7 792.8L861.1 793.1L861.4 793.4L861.8 793.6L862.1 793.9L862.5 794.1L862.8 794.4M718.9 759.4L719.8 759.8L720.6 760.2L721.5 760.7L722.3 761.1L723.2 761.5L724 761.9L724.9 762.3L725.8 762.7L726.6 763.1L727.5 763.6L728.3 764L729.2 764.4L730.1 764.8L730.9 765.3L731.7 765.7L732.6 766.2L733.4 766.6L734.3 767.1L735.1 767.6L735.9 768L736.7 768.5L737.5 769L738.4 769.5L739.2 770L740 770.5L740.8 771.1L741.6 771.6L742.4 772.1L743.2 772.6L743.9 773.2L744.7 773.7L745.5 774.3L746.3 774.8L747 775.4L747.8 776L748.6 776.6L749.3 777.1L750.1 777.7L750.8 778.3L751.5 779L752.3 779.6L753 780.2L753.7 780.8L754.4 781.5L755.1 782.1L755.8 782.8L756.5 783.4L757.2 784.1L757.9 784.8L758.5 785.5L759.2 786.1L759.9 786.8L760.5 787.5L761.2 788.2L761.8 788.9L762.5 789.6L763.1 790.3L763.8 791L764.4 791.7L765 792.4L765.7 793.2L766.3 793.9L766.9 794.6L767.5 795.3L768.1 796.1L768.7 796.8L769.3 797.6L769.9 798.3L770.5 799.1L771.1 799.8L771.7 800.6L772.2 801.3L772.8 802.1L773.4 802.8L774 803.6L774.5 804.4L775.1 805.2L775.6 805.9L776.2 806.7L776.7 807.5L777.2 808.3L777.8 809.1L778.3 809.9L778.8 810.7L779.4 811.5L779.9 812.3L780.4 813.1L780.9 813.9L781.4 814.7L781.9 815.5L782.4 816.3L782.9 817.1L783.4 817.9L783.9 818.8L784.4 819.6L784.9 820.4L785.3 821.2L785.8 822.1L786.3 822.9L786.8 823.7L787.2 824.6L787.7 825.4L788.2 826.2L788.7 827L789.1 827.9L789.6 828.7L790.1 829.5L790.6 830.3L791.1 831.1L791.6 832L792.1 832.8L792.6 833.6L793.1 834.4L793.5 835.2L794 836.1L794.5 836.9L795 837.7L795.5 838.5L796 839.3L796.5 840.2L796.9 841L797.4 841.8L797.9 842.7L798.3 843.5L798.8 844.3L799.3 845.2L799.7 846L800.2 846.8L800.6 847.7L801.1 848.5L801.5 849.4L802 850.2L802.4 851L802.9 851.9L803.3 852.7L803.7 853.6L804.2 854.4L804.6 855.3L805 856.1L805.4 857L805.9 857.9L806.3 858.7L806.7 859.6L807.1 860.5L807.5 861.3L807.9 862.2L808.3 863.1L808.6 863.9L809 864.8L809.4 865.7L809.8 866.5L810.2 867.4L810.6 868.3L811 869.1L811.4 870L811.8 870.9L812.3 871.7L812.7 872.6L813.1 873.4L813.5 874.3L814 875.1L814.4 876L814.9 876.8L815.4 877.6L815.8 878.5L816.3 879.3L816.8 880.1L817.3 880.9L817.9 881.7L818.4 882.5L818.9 883.3L819.4 884.1L820 884.9L820.5 885.7L821 886.5L821.5 887.3L822.1 888.1L822.6 888.9L823.1 889.7L823.6 890.5L824.1 891.3L824.7 892.1L825.2 892.9L825.7 893.7L826.3 894.4L826.8 895.2L827.3 896L827.9 896.8L828.4 897.6L828.9 898.4L829.5 899.2L830 900L830.5 900.8L831.1 901.6L831.6 902.4L832.1 903.2L832.6 904L833.2 904.8L833.7 905.5L834.2 906.3L834.8 907.1L835.3 907.9L835.8 908.7L836.3 909.5L836.9 910.3L837.4 911.1L837.9 911.9L838.5 912.7L839 913.5L839.5 914.3L840 915.1L840.5 915.9L841.1 916.7L841.6 917.5L842.1 918.3L842.6 919.1L843.2 919.9L843.7 920.7L844.3 921.4L844.8 922.2L845.4 923L845.9 923.8L846.5 924.5L847.1 925.3L847.6 926.1L848.2 926.8L848.8 927.6L849.3 928.4L849.9 929.1L850.5 929.9L851.1 930.7L851.6 931.4L852.2 932.2L852.8 932.9L853.4 933.7L854 934.5L854.5 935.2L855.1 936L855.7 936.7L856.2 937.5M718.9 759.4L780.6 730.6M763.8 737.5L764.7 738.2L765.6 738.9L766.6 739.5L767.5 740.2L768.4 740.9L769.4 741.5L770.3 742.2L771.2 742.9L772.2 743.6L773.1 744.2L774.1 744.9L775 745.7L775.9 746.4L776.8 747.1L777.8 747.9L778.6 748.6L779.5 749.4L780.4 750.2L781.3 751L782.1 751.8L782.9 752.6L783.8 753.4L784.6 754.2L785.4 755.1L786.3 755.9L787.1 756.7L787.9 757.6L788.7 758.4L789.5 759.2L790.3 760.1L791 760.9L791.8 761.8L792.6 762.7L793.4 763.5L794.1 764.4L794.9 765.3L795.7 766.2L796.4 767.1L797.2 768L797.9 769L798.6 769.9L799.3 770.8L800 771.8L800.6 772.7L801.3 773.7L802 774.7L802.6 775.6L803.2 776.6L803.9 777.5L804.5 778.5L805.2 779.4L805.8 780.3L806.5 781.3L807.1 782.2L807.8 783.1L808.5 784.1L809.1 785L809.8 785.9L810.5 786.9L811.1 787.8L811.8 788.7L812.5 789.7L813.1 790.6L813.8 791.5L814.5 792.4L815.1 793.4L815.8 794.3L816.5 795.2L817.2 796.1L817.9 797L818.6 797.9L819.3 798.8L820 799.7L820.7 800.6L821.4 801.4L822.1 802.3L822.9 803.2L823.6 804.1L824.3 804.9L825.1 805.8L825.8 806.7L826.5 807.6L827.3 808.4L828 809.3L828.8 810.2L829.5 811.1L830.3 811.9L831 812.8L831.8 813.6L832.5 814.5L833.3 815.3L834 816.2L834.8 817.1L835.6 817.9L836.3 818.8L837.1 819.7L837.9 820.6L838.6 821.4L839.4 822.3L840.1 823.2L840.8 824.1L841.6 825L842.3 825.9L843 826.8L843.7 827.8L844.4 828.7L845.1 829.6L845.8 830.6L846.5 831.5L847.2 832.4L847.9 833.4L848.5 834.4L849.2 835.3L849.8 836.3L850.5 837.2L851.1 838.2L851.8 839.1L852.4 840.1L853.1 841.1M763.2 738.4L764.1 739.1L765 739.8L765.9 740.4L766.9 741.1L767.8 741.8L768.7 742.4L769.7 743.1L770.6 743.8L771.5 744.4L772.5 745.1L773.4 745.8L774.3 746.5L775.2 747.2L776.1 748L777 748.7L777.9 749.5L778.8 750.2L779.7 751L780.5 751.8L781.4 752.6L782.2 753.4L783 754.2L783.8 755L784.7 755.8L785.5 756.7L786.3 757.5L787.1 758.3L787.9 759.2L788.7 760L789.5 760.8L790.2 761.7L791 762.5L791.8 763.4L792.6 764.3L793.3 765.1L794.1 766L794.8 766.9L795.6 767.8L796.3 768.7L797 769.6L797.7 770.5L798.4 771.5L799.1 772.4L799.7 773.4L800.4 774.3L801 775.3L801.7 776.2L802.3 777.2L803 778.1L803.6 779.1L804.3 780L804.9 781L805.6 781.9L806.2 782.8L806.9 783.8L807.6 784.7L808.2 785.6L808.9 786.6L809.6 787.5L810.2 788.4L810.9 789.4L811.6 790.3L812.2 791.2L812.9 792.2L813.6 793.1L814.3 794L814.9 794.9L815.6 795.9L816.3 796.8L817 797.7L817.7 798.6L818.4 799.5L819.1 800.4L819.8 801.2L820.6 802.1L821.3 803L822 803.9L822.8 804.8L823.5 805.7L824.2 806.5L825 807.4L825.7 808.3L826.5 809.2L827.2 810L827.9 810.9L828.7 811.8L829.4 812.6L830.2 813.5L830.9 814.4L831.7 815.2L832.5 816.1L833.2 816.9L834 817.8L834.7 818.7L835.5 819.5L836.3 820.4L837 821.3L837.8 822.1L838.5 823L839.3 823.9L840 824.8L840.7 825.7L841.4 826.6L842.1 827.5L842.8 828.4L843.6 829.4L844.3 830.3L844.9 831.2L845.6 832.1L846.3 833.1L847 834L847.6 835L848.3 835.9L848.9 836.9L849.6 837.8L850.2 838.8L850.9 839.7L851.5 840.7L852.1 841.7L852.7 842.7L853.4 843.7L853.9 844.7L854.5 845.7L855.1 846.7L855.6 847.8L856.1 848.8L856.6 849.9L857.1 850.9L857.6 852L858 853.1L858.5 854.1L858.9 855.2L859.3 856.3L859.7 857.4L860.1 858.5L860.5 859.6L860.8 860.7L861.2 861.8L861.5 862.9L861.8 864L862.2 865.1L862.5 866.2L862.8 867.3L863.1 868.5L863.4 869.6L863.6 870.7L863.9 871.8L864.2 873L864.4 874.1M762.5 739.3L763.4 740L764.3 740.7L765.3 741.3L766.2 742L767.2 742.7L768.1 743.3L769 744L770 744.7L770.9 745.3L771.8 746L772.7 746.7L773.7 747.4L774.6 748.1L775.4 748.8L776.3 749.6L777.2 750.3L778.1 751.1L778.9 751.8L779.8 752.6L780.6 753.4L781.4 754.2L782.2 755L783.1 755.8L783.9 756.6L784.7 757.4L785.5 758.3L786.3 759.1L787.1 759.9L787.9 760.7L788.7 761.6L789.4 762.4L790.2 763.3L791 764.1L791.7 765L792.5 765.9L793.2 766.7L794 767.6L794.7 768.5L795.4 769.4L796.1 770.3L796.8 771.2L797.5 772.1L798.2 773.1L798.8 774L799.5 775L800.1 775.9L800.8 776.9L801.4 777.8L802.1 778.8L802.7 779.7L803.4 780.7L804 781.6L804.7 782.5L805.3 783.5L806 784.4L806.7 785.3L807.3 786.3L808 787.2L808.7 788.1L809.3 789.1L810 790L810.7 791L811.3 791.9L812 792.8L812.7 793.7L813.4 794.7L814.1 795.6L814.7 796.5L815.4 797.4L816.1 798.3L816.8 799.2L817.5 800.1L818.3 801L819 801.9L819.7 802.8L820.4 803.7L821.2 804.6L821.9 805.5L822.6 806.4L823.4 807.2L824.1 808.1L824.9 809L825.6 809.9L826.4 810.7L827.1 811.6L827.9 812.5L828.6 813.4L829.4 814.2L830.1 815.1L830.9 815.9L831.6 816.8L832.4 817.7L833.2 818.5L833.9 819.4L834.7 820.3L835.4 821.1L836.2 822L836.9 822.9L837.7 823.7L838.4 824.6L839.1 825.5L839.8 826.4L840.6 827.3L841.3 828.2L842 829.1L842.7 830L843.4 830.9L844.1 831.9L844.7 832.8L845.4 833.7L846.1 834.7L846.7 835.6L847.4 836.5L848 837.5L848.7 838.4L849.3 839.4L850 840.4L850.6 841.3L851.2 842.3L851.8 843.3L852.4 844.2L853 845.2L853.6 846.2L854.1 847.2L854.6 848.3L855.1 849.3L855.6 850.3L856.1 851.4L856.6 852.4L857 853.5L857.4 854.5L857.9 855.6L858.3 856.7L858.7 857.8L859 858.8L859.4 859.9L859.8 861L860.1 862.1L860.5 863.2L860.8 864.3L861.1 865.4L861.4 866.5L861.7 867.6L862 868.7L862.3 869.9L862.6 871L862.8 872.1L863.1 873.2L863.4 874.3L863.6 875.4L863.8 876.6L864.1 877.7L864.3 878.8L864.5 879.9L864.7 881.1L865 882.2L865.2 883.3L865.4 884.5L865.6 885.6L865.8 886.7L866 887.8L866.2 889L866.4 890.1L866.6 891.2L866.7 892.4L866.9 893.5L867.1 894.7L867.2 895.8L867.4 896.9L867.6 898.1L867.7 899.2L867.9 900.3L868 901.5L868.2 902.6L868.4 903.7L868.5 904.9L868.7 906L868.9 907.2L869 908.3M761.8 740.2L762.8 740.9L763.7 741.6L764.6 742.2L765.6 742.9L766.5 743.6L767.5 744.2L768.4 744.9L769.3 745.6L770.2 746.2L771.2 746.9L772.1 747.6L773 748.3L773.9 749L774.8 749.7L775.6 750.4L776.5 751.1L777.3 751.9L778.2 752.6L779 753.4L779.8 754.2L780.7 755L781.5 755.8L782.3 756.6L783.1 757.4L783.9 758.2L784.7 759L785.5 759.8L786.3 760.7L787.1 761.5L787.8 762.3L788.6 763.2L789.4 764L790.1 764.9L790.9 765.7L791.7 766.6L792.4 767.4L793.1 768.3L793.9 769.2L794.6 770.1L795.3 771L795.9 771.9L796.6 772.8L797.3 773.7L797.9 774.6L798.6 775.6L799.2 776.5L799.9 777.5L800.5 778.4L801.2 779.4L801.8 780.3L802.4 781.3L803.1 782.2L803.8 783.2L804.4 784.1L805.1 785L805.8 786L806.4 786.9L807.1 787.8L807.8 788.8L808.4 789.7L809.1 790.7L809.8 791.6L810.5 792.5L811.1 793.5L811.8 794.4L812.5 795.3L813.2 796.2L813.9 797.2L814.6 798.1L815.3 799L816 799.9L816.7 800.8L817.4 801.7L818.1 802.6L818.9 803.5L819.6 804.4L820.3 805.3L821.1 806.2L821.8 807.1L822.5 808L823.3 808.8L824 809.7L824.8 810.6L825.5 811.5L826.3 812.3L827 813.2L827.8 814.1L828.5 815L829.3 815.8L830.1 816.7L830.8 817.5L831.6 818.4L832.3 819.3L833.1 820.1L833.9 821L834.6 821.8L835.3 822.7L836.1 823.6L836.8 824.4L837.5 825.3L838.3 826.2L839 827.1L839.7 828L840.4 828.9L841.1 829.8L841.8 830.7L842.5 831.6L843.2 832.5L843.8 833.4L844.5 834.4L845.2 835.3L845.8 836.2L846.5 837.2L847.1 838.1L847.8 839.1L848.4 840L849 841L849.7 841.9L850.3 842.9L850.9 843.8L851.5 844.8L852 845.8L852.6 846.8L853.1 847.7L853.6 848.7L854.1 849.8L854.6 850.8L855.1 851.8L855.5 852.9L856 853.9L856.4 854.9L856.8 856L857.2 857.1L857.6 858.1L858 859.2L858.4 860.3L858.7 861.4L859.1 862.4L859.4 863.5L859.7 864.6L860.1 865.7L860.4 866.8L860.7 867.9L861 869L861.2 870.1L861.5 871.2L861.8 872.3L862 873.4L862.3 874.6M761.2 741.1L762.1 741.8L763.1 742.4L764 743.1L764.9 743.8L765.9 744.5L766.8 745.1L767.7 745.8L768.7 746.4L769.6 747.1L770.5 747.8L771.4 748.5L772.3 749.1L773.2 749.8L774.1 750.5L774.9 751.2L775.8 752L776.6 752.7L777.4 753.5L778.3 754.2L779.1 755L779.9 755.8L780.7 756.6L781.5 757.4L782.3 758.2L783.1 759L783.9 759.8L784.7 760.6L785.5 761.4L786.3 762.3L787 763.1L787.8 763.9L788.6 764.8L789.3 765.6L790.1 766.5L790.8 767.3L791.6 768.2L792.3 769L793 769.9L793.7 770.7L794.4 771.6L795.1 772.5L795.7 773.4L796.4 774.3L797 775.3L797.7 776.2L798.3 777.1L799 778.1L799.6 779L800.2 780L800.9 780.9L801.5 781.9L802.2 782.9L802.9 783.8L803.5 784.8L804.2 785.7L804.9 786.6L805.6 787.6L806.2 788.5L806.9 789.4L807.5 790.4L808.2 791.3L808.9 792.2L809.6 793.2L810.2 794.1L810.9 795L811.6 796L812.3 796.9L813 797.8L813.7 798.8L814.4 799.7L815.1 800.6L815.8 801.5L816.5 802.4L817.3 803.3L818 804.2L818.7 805.1L819.5 806L820.2 806.9L821 807.8L821.7 808.7L822.5 809.5L823.2 810.4L823.9 811.3L824.7 812.2L825.4 813L826.2 813.9L826.9 814.8L827.7 815.7L828.5 816.5L829.2 817.4L830 818.3L830.8 819.1L831.5 820L832.3 820.8L833 821.7L833.8 822.6L834.5 823.4L835.3 824.3L836 825.1L836.7 826L837.4 826.9L838.1 827.8L838.8 828.7L839.5 829.6L840.2 830.5L840.9 831.4L841.6 832.3L842.3 833.2L843 834.1"/>
<path stroke-width="2.7" d="M970.8 1169.4L1457.7 1169.4M1195 642L1233.4 642M1189.8 661.6L1238.6 661.6M1218.8 527.8L1218.8 700M1062 1042.7L1366.4 1042.7M1192 1056L1236.4 1056"/>
<path stroke-width="2.0" d="M1008.5 692.8L1419.9 692.8M980.4 706.9L1448 706.9M980.4 731L1448 731M1002.3 707.4L1002.3 745M1426.1 707.4L1426.1 745"/>
<path stroke-width="2.9" d="M970.8 745.4L1457.7 745.4"/>
<path stroke-width="1.0" d="M990.1 323.1L994.8 320.8L999.6 318.6L1004.5 316.6L1009.4 314.8L1014.4 313.1L1019.4 311.6L1024.5 310.2L1029.6 309L1034.7 307.9L1039.9 307L1045.1 306.3L1050.3 305.7L1055.5 305.3L1060.8 305.1L1066 305L1362.4 305L1369.4 305.1L1376.3 305.6L1383.3 306.3L1390.2 307.3L1397 308.6L1403.8 310.2L1410.6 312L1417.2 314.2L1423.8 316.6L1430.3 319.3L1436.6 322.2L1442.9 325.4L1449 328.9L1455 332.6L1460.8 336.6L1466.4 340.8L1471.9 345.2L1477.3 349.9L1482.4 354.8L1487.3 359.8L1492 365.1L1496.6 370.6L1500.9 376.3L1504.9 382.1L1508.8 388.1L1512.4 394.2L1515.8 400.5L1518.9 407L1521.7 413.5L1524.3 420.2L1526.7 427L1528.8 433.8L1530.6 440.8L1532.1 447.8L1533.4 454.9L1534.3 462L1535 469.1L1535.5 476.3L1535.6 483.5L1535.6 548"/>
<path stroke-width="1.5" d="M1196.4 956.3L1196.5 955.8L1196.6 955.4L1196.7 954.9L1196.7 954.4L1196.8 953.9L1197 953.5L1197.1 953L1197.3 952.6L1197.5 952.2L1197.8 951.7L1198.1 951.3L1198.4 950.9L1198.7 950.5L1199.1 950.2L1199.4 949.8L1199.8 949.6L1200.2 949.4L1200.5 949.3L1200.9 949.2L1201.3 949.1L1201.8 949.1L1202.2 949.1L1202.6 949.1L1203 949.2L1203.4 949.3L1203.8 949.4L1204.3 949.6L1204.7 949.7L1205.1 950L1205.6 950.2L1205.9 950.5L1206.3 950.8L1206.6 951.2L1206.9 951.5L1207.2 952L1207.5 952.4L1207.8 952.9L1208 953.4L1208.2 954L1208.4 954.5L1208.6 955.1L1208.7 955.7L1208.8 956.3L1208.8 956.9L1208.9 957.6L1208.9 958.2L1209 958.9L1209 959.5L1209 960.1L1209 960.8L1209 961.5L1209 962.2L1209 962.8L1209 963.4L1208.9 964L1208.8 964.6L1208.7 965.1L1208.6 965.6L1208.5 966.1L1208.3 966.5L1208.1 966.9L1207.9 967.3L1207.7 967.7L1207.4 968L1207.1 968.3L1206.7 968.6L1206.3 968.9L1205.9 969.1L1205.5 969.3L1205 969.5L1204.5 969.7L1204 969.8L1203.5 969.9L1202.9 970L1202.2 970L1201.6 970L1200.9 970L1200.3 970L1199.6 970L1199 970L1198.4 970L1197.8 970L1197.1 970L1196.5 970L1195.9 970L1195.2 970L1194.6 970L1194 970M1232 956.3L1231.9 955.8L1231.8 955.4L1231.7 954.9L1231.7 954.4L1231.6 953.9L1231.4 953.5L1231.3 953L1231.1 952.6L1230.9 952.2L1230.6 951.7L1230.3 951.3L1230 950.9L1229.7 950.5L1229.3 950.2L1229 949.8L1228.6 949.6L1228.2 949.4L1227.9 949.3L1227.5 949.2L1227 949.1L1226.6 949.1L1226.2 949.1L1225.8 949.1L1225.4 949.2L1225 949.3L1224.6 949.4L1224.1 949.6L1223.7 949.7L1223.3 950L1222.8 950.2L1222.5 950.5L1222.1 950.8L1221.8 951.2L1221.5 951.5L1221.2 952L1220.9 952.4L1220.6 952.9L1220.4 953.4L1220.2 954L1220 954.5L1219.8 955.1L1219.7 955.7L1219.6 956.3L1219.6 956.9L1219.5 957.6L1219.5 958.2L1219.4 958.9L1219.4 959.5L1219.4 960.1L1219.4 960.8L1219.4 961.5L1219.4 962.2L1219.4 962.8L1219.4 963.4L1219.5 964L1219.6 964.6L1219.7 965.1L1219.8 965.6L1219.9 966.1L1220.1 966.5L1220.3 966.9L1220.5 967.3L1220.7 967.7L1221 968L1221.3 968.3L1221.7 968.6L1222.1 968.9L1222.5 969.1L1222.9 969.3L1223.4 969.5L1223.9 969.7L1224.4 969.8L1224.9 969.9L1225.5 970L1226.2 970L1226.8 970L1227.5 970L1228.1 970L1228.8 970L1229.4 970L1230 970L1230.7 970L1231.3 970L1231.9 970L1232.5 970L1233.2 970L1233.8 970L1234.4 970M894.5 726L894.5 483.5L894.6 476.4L895.1 469.3L895.8 462.3L896.7 455.3L898 448.3L899.5 441.4L901.3 434.5L903.3 427.8L905.6 421.1L908.2 414.5L911.1 408.1L914.1 401.7L917.5 395.5L921 389.4L924.9 383.5L928.9 377.8L933.2 372.2L937.6 366.8L942.3 361.6L947.2 356.6L952.3 351.8L957.5 347.2L963 342.8L968.6 338.7L974.3 334.7L980.2 331.1L986.3 327.7L992.5 324.5L998.8 321.6L1005.2 318.9L1011.7 316.6L1018.3 314.4L1025 312.6L1031.7 311.1L1038.5 309.8L1045.3 308.8L1052.2 308.1L1059.1 307.6L1066 307.5L1362.4 307.5L1369.3 307.6L1376.2 308.1L1383.1 308.8L1389.9 309.8L1396.7 311.1L1403.4 312.6L1410.1 314.4L1416.7 316.6L1423.2 318.9L1429.6 321.6L1435.9 324.5L1442.1 327.7L1448.2 331.1L1454.1 334.7L1459.8 338.7L1465.4 342.8L1470.9 347.2L1476.1 351.8L1481.2 356.6L1486.1 361.6L1490.8 366.8L1495.2 372.2L1499.5 377.8L1503.5 383.5L1507.4 389.4L1510.9 395.5L1514.3 401.7L1517.3 408.1L1520.2 414.5L1522.8 421.1L1525.1 427.8L1527.1 434.5L1528.9 441.4L1530.4 448.3L1531.7 455.3L1532.6 462.3L1533.3 469.3L1533.8 476.4L1533.9 483.5L1533.9 726"/>
<path stroke-width="3.4" d="M988.8 327.1L993.6 324.7L998.5 322.4L1003.4 320.3L1008.4 318.4L1013.5 316.6L1018.6 315L1023.7 313.5L1028.9 312.2L1034.1 311.1L1039.4 310.2L1044.7 309.4L1050 308.8L1055.3 308.3L1060.7 308.1L1066 308L1362.4 308L1369.2 308.1L1376.1 308.6L1382.9 309.3L1389.7 310.3L1396.4 311.5L1403.1 313.1L1409.7 314.9L1416.2 317L1422.7 319.4L1429 322L1435.3 324.9L1441.4 328.1L1447.4 331.5L1453.3 335.2L1459 339.1L1464.5 343.2L1469.9 347.6L1475.1 352.1L1480.2 356.9L1485 361.9L1489.6 367.1L1494.1 372.5L1498.3 378.1L1502.3 383.8L1506.1 389.7L1509.6 395.8L1512.9 401.9L1516 408.3L1518.8 414.7L1521.4 421.3L1523.7 427.9L1525.7 434.7L1527.5 441.5L1529 448.4L1530.2 455.3L1531.2 462.3L1531.8 469.4L1532.3 476.4L1532.4 483.5L1532.4 556M908.2 483.5L908.2 724M1520.2 483.5L1520.2 724"/>
<path stroke-width="2.2" d="M1194 955.3L1194.1 954.8L1194.3 954.3L1194.4 953.8L1194.6 953.3L1194.7 952.9L1194.9 952.4L1195 951.9L1195.2 951.5L1195.4 951.1L1195.5 950.7L1195.6 950.3L1195.8 949.9L1196 949.5L1196.1 949.2L1196.4 948.8L1196.6 948.5L1196.9 948.2L1197.2 947.9L1197.6 947.6L1197.9 947.4L1198.3 947.1L1198.7 946.9L1199.1 946.7L1199.5 946.6L1199.9 946.5L1200.3 946.4L1200.7 946.3L1201.2 946.3L1201.6 946.2L1202 946.2L1202.5 946.3L1203 946.4L1203.5 946.5L1204.1 946.7L1204.7 946.9L1205.3 947.2L1205.9 947.4L1206.5 947.8L1207 948.1L1207.5 948.5L1208 948.9L1208.4 949.4L1208.9 949.9L1209.3 950.5L1209.7 951.1L1210 951.7L1210.3 952.3L1210.6 953L1210.8 953.7L1211 954.4L1211.1 955.1L1211.2 955.9L1211.3 956.7L1211.3 957.5L1211.4 958.2L1211.4 959L1211.4 959.8L1211.5 960.5L1211.5 961.3L1211.5 962.1L1211.4 962.8L1211.4 963.6L1211.3 964.3L1211.2 965L1211.1 965.7L1210.9 966.3L1210.8 967L1210.6 967.6L1210.3 968.2L1210.1 968.8L1209.8 969.3L1209.4 969.8L1209 970.2L1208.5 970.6L1208 971L1207.5 971.3L1206.9 971.6L1206.3 971.8L1205.6 972L1205 972.2L1204.3 972.3L1203.6 972.4L1202.8 972.4L1202.1 972.5L1201.3 972.4L1200.5 972.4L1199.7 972.4L1199 972.4L1198.3 972.4L1197.6 972.4L1196.9 972.4L1196.2 972.4L1195.5 972.4L1194.8 972.4L1194.1 972.4L1193.4 972.4M1234.4 955.3L1234.3 954.8L1234.1 954.3L1234 953.8L1233.8 953.3L1233.7 952.9L1233.5 952.4L1233.4 951.9L1233.2 951.5L1233 951.1L1232.9 950.7L1232.8 950.3L1232.6 949.9L1232.4 949.5L1232.3 949.2L1232 948.8L1231.8 948.5L1231.5 948.2L1231.2 947.9L1230.8 947.6L1230.5 947.4L1230.1 947.1L1229.7 946.9L1229.3 946.7L1228.9 946.6L1228.5 946.5L1228.1 946.4L1227.7 946.3L1227.3 946.3L1226.8 946.2L1226.4 946.2L1225.9 946.3L1225.4 946.4L1224.9 946.5L1224.3 946.7L1223.7 946.9L1223.1 947.2L1222.5 947.4L1222 947.8L1221.4 948.1L1220.9 948.5L1220.4 948.9L1220 949.4L1219.5 949.9L1219.1 950.5L1218.7 951.1L1218.4 951.7L1218.1 952.3L1217.8 953L1217.6 953.7L1217.4 954.4L1217.3 955.1L1217.2 955.9L1217.1 956.7L1217.1 957.5L1217 958.2L1217 959L1217 959.8L1216.9 960.5L1216.9 961.3L1216.9 962.1L1217 962.8L1217 963.6L1217.1 964.3L1217.2 965L1217.3 965.7L1217.5 966.3L1217.6 967L1217.8 967.6L1218.1 968.2L1218.3 968.8L1218.6 969.3L1219 969.8L1219.4 970.2L1219.9 970.6L1220.4 971L1220.9 971.3L1221.5 971.6L1222.1 971.8L1222.8 972L1223.4 972.2L1224.1 972.3L1224.8 972.4L1225.6 972.4L1226.3 972.5L1227.1 972.4L1227.9 972.4L1228.7 972.4L1229.4 972.4L1230.1 972.4L1230.8 972.4L1231.5 972.4L1232.2 972.4L1232.9 972.4L1233.6 972.4L1234.3 972.4L1235 972.4"/>
<path stroke-width="1.15" d="M737.6 750.7L738.6 751.3L739.6 751.8L740.6 752.4L741.7 752.9L742.7 753.5L743.7 754L744.8 754.5L745.8 755L746.8 755.6L747.9 756.1L748.9 756.7L749.9 757.2L750.9 757.8L751.9 758.4L752.9 758.9L753.9 759.5L754.9 760.2L755.9 760.8L756.8 761.5L757.8 762.1L758.7 762.8L759.6 763.6L760.5 764.3L761.4 765L762.3 765.8L763.2 766.6L764.1 767.3L764.9 768.1L765.8 768.9L766.6 769.7L767.4 770.5L768.3 771.4L769.1 772.2L769.9 773L770.7 773.8L771.5 774.7L772.3 775.5L773.1 776.4L773.9 777.2L774.7 778.1L775.5 779L776.3 779.8L777 780.7L777.8 781.6L778.5 782.5L779.3 783.3L780 784.2L780.8 785.1L781.5 786L782.2 787L783 787.9L783.7 788.8L784.4 789.7L785.1 790.6L785.8 791.6L786.5 792.5L787.2 793.4L787.9 794.3L788.6 795.3L789.3 796.2L790 797.2L790.7 798.1L791.4 799L792 800L792.7 800.9L793.4 801.9L794 802.9L794.7 803.8L795.4 804.8L796 805.7L796.7 806.7L797.3 807.7L798 808.6L798.6 809.6L799.3 810.5L799.9 811.5L800.6 812.5L801.2 813.5L801.9 814.4L802.5 815.4L803.2 816.4L803.8 817.3L804.4 818.3L805.1 819.3L805.7 820.3L806.3 821.2L806.9 822.2L807.6 823.2L808.2 824.2L808.8 825.2L809.4 826.2L810 827.2L810.6 828.1L811.2 829.1L811.8 830.1L812.4 831.1L813 832.1L813.6 833.1L814.2 834.1L814.8 835.1L815.4 836.1L816 837.1L816.5 838.2L817.1 839.2L817.6 840.2L818.2 841.2L818.7 842.2L819.3 843.3L819.8 844.3L820.4 845.3L820.9 846.4L821.4 847.4L822 848.4L822.5 849.5L823 850.5L823.6 851.5L824.1 852.6L824.6 853.6L825.2 854.6L825.7 855.7L826.3 856.7L826.8 857.7L827.3 858.8L827.9 859.8L828.4 860.8L828.9 861.9L829.4 862.9L830 864L830.5 865L831 866L831.5 867.1L832 868.1L832.6 869.2L833.1 870.2L833.6 871.2L834.1 872.3L834.6 873.3L835.2 874.4L835.7 875.4L836.2 876.4L836.7 877.5L837.3 878.5L837.8 879.5L838.3 880.6L838.8 881.6L839.4 882.6L839.9 883.7L840.4 884.7L841 885.7L841.5 886.8L842 887.8L842.6 888.8L843.1 889.8L843.7 890.8L844.2 891.9L844.8 892.9L845.3 893.9L845.9 894.9L846.4 895.9L847 896.9L847.6 897.9L848.1 898.9L848.7 899.9L849.3 900.9L849.9 901.9L850.4 902.9L851 903.9L851.6 904.9L852.2 905.9L852.8 906.9L853.4 907.9L853.9 908.8L854.5 909.8L855.2 910.8L855.8 911.8L856.4 912.7L857 913.7L857.6 914.6L858.3 915.6L858.9 916.5L859.6 917.5L860.3 918.4L860.9 919.3L861.6 920.2L862.3 921.1L863 922L863.7 922.9L864.4 923.8L865.2 924.7L865.9 925.5L866.6 926.4L867.4 927.3L868.1 928.1L868.8 929L869.6 929.8L870.3 930.7L871 931.6L871.8 932.5L872.5 933.3M741.2 749L742.2 749.6L743.2 750.2L744.2 750.8L745.3 751.3L746.3 751.9L747.3 752.4L748.3 753L749.3 753.5L750.4 754.1L751.4 754.6L752.4 755.2L753.4 755.8L754.4 756.4L755.4 757L756.4 757.6L757.3 758.2L758.3 758.8L759.3 759.5L760.2 760.2L761.1 760.9L762 761.6L762.9 762.3L763.8 763L764.7 763.8L765.6 764.6L766.5 765.3L767.3 766.1L768.2 766.9L769 767.7L769.8 768.5L770.7 769.3L771.5 770.2L772.3 771L773.1 771.8L773.9 772.7L774.7 773.5L775.5 774.4L776.3 775.2L777.1 776.1L777.8 777L778.6 777.8L779.4 778.7L780.1 779.6L780.9 780.5L781.6 781.4L782.4 782.3L783.1 783.2L783.8 784.1L784.5 785L785.2 785.9L786 786.8L786.7 787.7L787.4 788.7L788.1 789.6L788.8 790.5L789.5 791.4L790.2 792.4L790.9 793.3L791.6 794.2L792.2 795.2L792.9 796.1L793.6 797.1L794.3 798L795 798.9L795.6 799.9L796.3 800.8L797 801.8L797.6 802.7L798.3 803.7L799 804.6L799.6 805.6L800.3 806.6L801 807.5L801.6 808.5L802.3 809.4L802.9 810.4L803.6 811.3L804.3 812.3L804.9 813.2L805.6 814.2L806.2 815.2L806.9 816.1L807.5 817.1L808.2 818L808.8 819L809.5 820L810.1 820.9L810.8 821.9L811.4 822.9L812 823.8L812.7 824.8L813.3 825.8L813.9 826.7L814.6 827.7L815.2 828.7L815.8 829.7L816.4 830.6L817 831.6L817.6 832.6L818.3 833.6L818.9 834.6L819.5 835.6L820 836.6L820.6 837.6L821.2 838.6L821.8 839.6L822.4 840.6L822.9 841.6L823.5 842.6L824 843.6L824.6 844.6L825.2 845.7L825.7 846.7L826.3 847.7L826.8 848.7L827.4 849.7L827.9 850.8L828.5 851.8L829 852.8L829.5 853.8L830.1 854.9L830.6 855.9L831.2 856.9L831.7 858L832.2 859L832.8 860L833.3 861.1L833.8 862.1L834.3 863.1L834.8 864.2L835.3 865.2L835.8 866.3L836.3 867.3L836.8 868.4L837.3 869.4L837.8 870.5L838.3 871.5L838.8 872.6L839.3 873.6L839.8 874.7L840.3 875.7L840.8 876.8L841.3 877.8L841.8 878.8L842.3 879.9L842.8 880.9L843.3 882L843.8 883L844.3 884.1L844.7 885.1L845.2 886.1L845.7 887.2L846.2 888.2L846.7 889.2L847.2 890.3L847.7 891.3L848.2 892.3L848.7 893.4L849.2 894.4L849.8 895.4L850.3 896.4L850.8 897.5L851.3 898.5L851.8 899.5L852.3 900.5L852.8 901.5L853.4 902.6L853.9 903.6L854.4 904.6L854.9 905.6L855.5 906.6L856 907.6L856.5 908.6L857.1 909.6L857.6 910.6L858.2 911.6L858.7 912.6L859.3 913.5L859.9 914.5L860.4 915.5L861 916.5L861.6 917.4L862.2 918.4L862.8 919.3L863.4 920.3L864.1 921.2L864.7 922.1L865.3 923L866 923.9L866.6 924.8L867.3 925.7L867.9 926.6L868.6 927.5L869.3 928.4L869.9 929.4L870.6 930.3L871.2 931.2L871.9 932.1L872.5 933M744.6 747.5L745.6 748.1L746.6 748.7L747.6 749.3L748.6 749.8L749.6 750.4L750.6 751L751.6 751.5L752.6 752.1L753.6 752.7L754.6 753.3L755.6 753.9L756.6 754.4L757.6 755L758.6 755.7L759.5 756.3L760.5 756.9L761.4 757.6L762.4 758.3L763.3 759L764.2 759.7L765.1 760.4L766 761.1L766.9 761.9L767.8 762.7L768.6 763.4L769.5 764.2L770.3 765L771.2 765.8L772 766.6L772.8 767.4L773.6 768.2L774.5 769.1L775.3 769.9L776.1 770.7L776.9 771.6L777.6 772.4L778.4 773.3L779.2 774.2L780 775L780.7 775.9L781.5 776.8L782.3 777.7L783 778.5L783.7 779.4L784.5 780.3L785.2 781.2L785.9 782.2L786.6 783.1L787.3 784L788 784.9L788.7 785.8L789.4 786.8L790.1 787.7L790.8 788.6L791.5 789.5L792.2 790.5L792.9 791.4L793.6 792.3L794.3 793.3L795 794.2L795.6 795.1L796.3 796.1L797 797L797.7 798L798.3 798.9L799 799.9L799.7 800.8L800.4 801.7L801 802.7L801.7 803.6L802.4 804.6L803 805.5L803.7 806.5L804.4 807.4L805.1 808.4L805.7 809.3L806.4 810.3L807.1 811.2L807.7 812.1L808.4 813.1L809.1 814L809.7 815L810.4 815.9L811.1 816.9L811.7 817.8L812.4 818.8L813 819.7L813.7 820.7L814.4 821.6L815 822.6L815.7 823.5L816.3 824.5L817 825.4L817.6 826.4L818.3 827.3L818.9 828.3L819.6 829.3L820.2 830.2L820.8 831.2L821.5 832.2L822.1 833.1L822.7 834.1L823.3 835.1L823.9 836.1L824.5 837.1L825.1 838.1L825.7 839L826.3 840L826.9 841L827.4 842L828 843.1L828.6 844.1L829.1 845.1L829.7 846.1L830.3 847.1L830.8 848.1L831.4 849.1L832 850.1L832.5 851.1L833.1 852.2L833.6 853.2L834.2 854.2L834.7 855.2L835.3 856.2L835.8 857.3L836.3 858.3L836.8 859.4L837.3 860.4L837.8 861.4L838.3 862.5L838.8 863.5L839.3 864.6L839.8 865.6L840.3 866.7L840.8 867.7L841.3 868.8L841.7 869.9L842.2 870.9L842.7 872L843.1 873L843.6 874.1L844.1 875.1L844.5 876.2L845 877.2L845.5 878.3L845.9 879.3L846.4 880.4L846.8 881.5L847.3 882.5L847.7 883.6L848.2 884.6L848.6 885.7L849.1 886.7L849.6 887.8L850 888.8L850.5 889.9L850.9 890.9L851.4 892L851.8 893L852.3 894L852.8 895.1L853.2 896.1L853.7 897.2L854.2 898.2L854.6 899.2L855.1 900.3L855.5 901.3L856 902.3L856.5 903.4L856.9 904.4L857.4 905.4L857.9 906.4L858.4 907.5L858.8 908.5L859.3 909.5L859.8 910.5L860.3 911.5L860.8 912.5L861.3 913.5L861.8 914.5L862.3 915.5L862.9 916.5L863.4 917.5L864 918.5L864.5 919.4L865.1 920.4L865.6 921.4L866.2 922.3L866.8 923.2L867.3 924.2L867.9 925.1L868.5 926.1L869.1 927L869.6 928L870.2 928.9L870.8 929.8L871.4 930.8L871.9 931.7L872.5 932.7M747.8 746L748.8 746.6L749.8 747.2L750.8 747.8L751.7 748.4L752.7 749L753.7 749.6L754.7 750.2L755.7 750.8L756.7 751.4L757.7 752L758.7 752.6L759.7 753.2L760.6 753.8L761.6 754.4L762.5 755.1L763.5 755.8L764.4 756.4L765.3 757.1L766.3 757.8L767.2 758.6L768 759.3L768.9 760L769.8 760.8L770.7 761.6L771.5 762.4L772.4 763.1L773.2 763.9L774 764.7L774.8 765.6L775.7 766.4L776.5 767.2L777.3 768L778.1 768.9L778.9 769.7L779.7 770.6L780.4 771.4L781.2 772.3L782 773.1L782.8 774L783.5 774.9L784.3 775.8L785 776.7L785.7 777.6L786.4 778.5L787.2 779.4L787.9 780.3L788.6 781.2L789.3 782.1L790 783L790.7 784L791.3 784.9L792 785.8L792.7 786.8L793.4 787.7L794.1 788.6L794.8 789.5L795.5 790.5L796.2 791.4L796.9 792.3L797.5 793.3L798.2 794.2L798.9 795.2L799.6 796.1L800.2 797L800.9 798L801.6 798.9L802.3 799.9L802.9 800.8L803.6 801.8L804.3 802.7L805 803.6L805.6 804.6L806.3 805.5L807 806.4L807.7 807.4L808.4 808.3L809 809.2L809.7 810.2L810.4 811.1L811.1 812L811.8 813L812.5 813.9L813.1 814.8L813.8 815.8L814.5 816.7L815.2 817.6L815.8 818.6L816.5 819.5L817.2 820.5L817.9 821.4L818.5 822.3L819.2 823.3L819.9 824.2L820.6 825.1L821.2 826.1L821.9 827L822.5 828L823.2 828.9L823.8 829.9L824.5 830.8L825.1 831.8L825.8 832.7L826.4 833.7L827 834.7L827.6 835.6L828.3 836.6L828.9 837.6L829.5 838.6L830.1 839.6L830.7 840.6L831.3 841.5L831.8 842.5L832.4 843.5L833 844.5L833.6 845.5L834.2 846.5L834.7 847.5L835.3 848.5L835.9 849.6L836.4 850.6L837 851.6L837.6 852.6L838.1 853.6L838.6 854.6L839.2 855.7L839.7 856.7L840.2 857.7L840.7 858.8L841.2 859.8L841.7 860.9L842.2 861.9L842.7 863L843.1 864L843.6 865.1L844.1 866.2L844.5 867.2L845 868.3L845.4 869.3L845.9 870.4L846.3 871.5L846.8 872.5L847.2 873.6L847.6 874.6L848.1 875.7L848.5 876.8L848.9 877.8L849.3 878.9L849.7 880L850.2 881L850.6 882.1L851 883.2L851.4 884.2L851.8 885.3L852.2 886.4L852.7 887.4L853.1 888.5L853.5 889.5L853.9 890.6L854.3 891.7L854.7 892.7L855.1 893.8L855.6 894.8L856 895.9L856.4 896.9L856.8 898L857.2 899.1L857.6 900.1L858 901.2L858.4 902.2L858.8 903.3L859.3 904.3L859.7 905.4L860.1 906.4L860.5 907.4L860.9 908.5L861.4 909.5L861.8 910.5L862.3 911.6L862.7 912.6L863.2 913.6L863.6 914.6L864.1 915.6L864.5 916.7L865 917.7L865.5 918.7L866 919.7L866.5 920.6L867 921.6L867.5 922.6L868 923.6L868.5 924.6L869 925.5L869.5 926.5L870 927.5L870.5 928.5L871 929.4L871.5 930.4L872 931.4L872.5 932.4M750.9 744.6L751.9 745.2L752.8 745.9L753.8 746.5L754.8 747.1L755.8 747.7L756.8 748.3L757.7 748.9L758.7 749.5L759.7 750.1L760.7 750.7L761.6 751.3L762.6 752L763.6 752.6L764.5 753.3L765.5 753.9L766.4 754.6L767.3 755.3L768.2 756L769.1 756.7L770 757.5L770.9 758.2L771.7 759L772.6 759.7L773.4 760.5L774.3 761.3L775.1 762.1L775.9 762.9L776.8 763.7L777.6 764.5L778.4 765.4L779.2 766.2L780 767L780.8 767.9L781.6 768.7L782.4 769.6L783.1 770.4L783.9 771.3L784.7 772.2L785.4 773L786.2 773.9L786.9 774.8L787.6 775.7L788.3 776.6L789.1 777.5L789.8 778.4L790.4 779.4L791.1 780.3L791.8 781.2L792.5 782.1L793.2 783.1L793.9 784L794.6 784.9L795.2 785.9L795.9 786.8L796.6 787.7L797.3 788.7L798 789.6L798.7 790.5L799.3 791.5L800 792.4L800.7 793.3L801.4 794.3L802.1 795.2L802.7 796.2L803.4 797.1L804.1 798L804.7 799L805.4 799.9L806.1 800.8L806.8 801.8L807.5 802.7L808.1 803.6L808.8 804.6L809.5 805.5L810.2 806.4L810.9 807.3L811.6 808.3L812.3 809.2L813 810.1L813.7 811L814.4 812L815.1 812.9L815.8 813.8L816.5 814.7L817.1 815.6L817.8 816.6L818.5 817.5L819.2 818.4L819.9 819.3L820.6 820.2L821.3 821.2L822 822.1L822.7 823L823.4 823.9L824.1 824.8L824.7 825.8L825.4 826.7L826.1 827.6L826.8 828.6L827.4 829.5L828.1 830.5L828.7 831.4L829.4 832.4L830 833.3L830.7 834.3L831.3 835.2L831.9 836.2L832.5 837.2L833.2 838.1L833.8 839.1L834.4 840.1L835 841.1L835.6 842.1L836.2 843.1L836.8 844L837.3 845L837.9 846L838.5 847L839.1 848L839.7 849L840.2 850L840.8 851L841.4 852.1L841.9 853.1L842.4 854.1L842.9 855.1L843.4 856.2L843.9 857.2L844.4 858.3L844.9 859.3L845.4 860.4L845.8 861.4L846.3 862.5L846.8 863.6L847.2 864.6L847.6 865.7L848.1 866.7L848.5 867.8L848.9 868.9L849.4 870L849.8 871L850.2 872.1L850.6 873.2L851 874.2L851.4 875.3L851.8 876.4L852.2 877.5L852.6 878.6L852.9 879.6L853.3 880.7L853.7 881.8L854.1 882.9L854.5 883.9L854.8 885L855.2 886.1L855.6 887.2L855.9 888.2L856.3 889.3L856.7 890.4L857.1 891.5L857.4 892.5L857.8 893.6L858.2 894.7L858.5 895.7L858.9 896.8L859.2 897.9L859.6 899L860 900L860.3 901.1L860.7 902.2L861 903.2L861.4 904.3L861.8 905.4L862.1 906.4L862.5 907.5L862.9 908.5L863.3 909.6L863.7 910.6L864 911.7L864.4 912.7L864.8 913.8L865.2 914.8L865.6 915.9L866 916.9L866.5 917.9L866.9 918.9L867.3 920L867.7 921L868.2 922L868.6 923L869 924L869.5 925L869.9 926L870.3 927L870.8 928L871.2 929L871.6 930.1L872.1 931.1L872.5 932.1M753.9 743.2L754.9 743.9L755.8 744.5L756.8 745.1L757.7 745.8L758.7 746.4L759.7 747L760.7 747.6L761.6 748.2L762.6 748.9L763.6 749.5L764.5 750.1L765.5 750.8L766.4 751.4L767.3 752.1L768.3 752.8L769.2 753.5L770.1 754.2L771 754.9L771.9 755.7L772.7 756.4L773.6 757.2L774.4 758L775.3 758.7L776.1 759.5L777 760.3L777.8 761.1L778.6 761.9L779.4 762.7L780.2 763.6L781 764.4L781.8 765.2L782.6 766.1L783.4 766.9L784.2 767.8L785 768.6L785.7 769.5L786.5 770.3L787.3 771.2L788 772.1L788.7 773L789.5 773.9L790.2 774.8L790.9 775.7L791.6 776.6L792.3 777.5L793 778.5L793.6 779.4L794.3 780.3L795 781.3L795.7 782.2L796.3 783.1L797 784.1L797.7 785L798.4 785.9L799 786.9L799.7 787.8L800.4 788.7L801.1 789.7L801.8 790.6L802.4 791.5L803.1 792.5L803.8 793.4L804.5 794.4L805.1 795.3L805.8 796.2L806.5 797.2L807.2 798.1L807.8 799L808.5 800L809.2 800.9L809.9 801.8L810.6 802.7L811.3 803.7L812 804.6L812.7 805.5L813.4 806.4L814.1 807.3L814.8 808.2L815.5 809.1L816.2 810.1L816.9 811L817.6 811.9L818.3 812.8L819 813.7L819.7 814.6L820.4 815.5L821.1 816.4L821.8 817.3L822.5 818.2L823.3 819.1L824 820L824.7 820.9L825.4 821.8L826.1 822.7L826.8 823.7L827.5 824.6L828.2 825.5L828.9 826.4L829.6 827.3L830.3 828.2L830.9 829.2L831.6 830.1L832.3 831L832.9 832L833.6 832.9L834.2 833.9L834.9 834.8L835.5 835.8L836.2 836.8L836.8 837.7L837.4 838.7L838 839.7L838.6 840.6L839.2 841.6L839.8 842.6L840.4 843.6L841 844.6L841.6 845.5L842.2 846.5L842.8 847.5L843.4 848.5L844 849.5L844.5 850.5L845.1 851.6L845.6 852.6L846.1 853.6L846.6 854.7L847.1 855.7L847.6 856.8L848 857.8L848.5 858.9L849 859.9L849.4 861L849.8 862.1L850.3 863.1L850.7 864.2L851.1 865.3L851.5 866.3L851.9 867.4L852.3 868.5L852.7 869.6L853.1 870.7L853.5 871.7L853.8 872.8L854.2 873.9L854.6 875L854.9 876.1L855.3 877.2L855.6 878.3L856 879.3L856.3 880.4L856.7 881.5L857 882.6L857.3 883.7L857.7 884.8L858 885.9L858.3 887L858.7 888.1L859 889.1L859.3 890.2L859.6 891.3L860 892.4L860.3 893.5L860.6 894.6L860.9 895.7L861.2 896.8L861.5 897.8L861.8 898.9L862.1 900L862.5 901.1L862.8 902.2L863.1 903.3L863.4 904.4L863.7 905.4L864 906.5L864.3 907.6L864.7 908.7L865 909.7L865.3 910.8L865.7 911.9L866 912.9L866.4 914L866.7 915.1L867 916.1L867.4 917.2L867.8 918.2L868.1 919.3L868.5 920.3L868.8 921.4L869.2 922.4L869.6 923.5L869.9 924.5L870.3 925.5L870.7 926.6L871 927.6L871.4 928.7L871.8 929.7L872.1 930.8L872.5 931.8M756.8 741.9L757.8 742.6L758.7 743.2L759.7 743.8L760.6 744.5L761.6 745.1L762.5 745.8L763.5 746.4L764.5 747L765.4 747.7L766.4 748.3L767.3 749L768.2 749.6L769.2 750.3L770.1 751L771 751.7L771.9 752.4L772.8 753.1L773.7 753.9L774.5 754.6L775.4 755.4L776.3 756.2L777.1 756.9L777.9 757.7L778.8 758.5L779.6 759.3L780.4 760.1L781.2 761L782 761.8L782.8 762.6L783.6 763.4L784.4 764.3L785.2 765.1L786 766L786.8 766.8L787.5 767.7L788.3 768.5L789.1 769.4L789.8 770.3L790.5 771.2L791.3 772.1L792 773L792.7 773.9L793.4 774.8L794.1 775.7L794.7 776.7L795.4 777.6L796.1 778.5L796.7 779.5L797.4 780.4L798.1 781.4L798.7 782.3L799.4 783.2L800.1 784.2L800.7 785.1L801.4 786L802.1 787L802.8 787.9L803.4 788.8L804.1 789.8L804.8 790.7L805.5 791.6L806.1 792.6L806.8 793.5L807.5 794.4L808.1 795.4L808.8 796.3L809.5 797.2L810.2 798.2L810.9 799.1L811.6 800L812.3 800.9L813 801.9L813.7 802.8L814.4 803.7L815.1 804.6L815.8 805.5L816.5 806.4L817.2 807.3L817.9 808.2L818.6 809.1L819.4 810L820.1 810.9L820.8 811.8L821.5 812.7L822.2 813.6L823 814.5L823.7 815.4L824.4 816.3L825.1 817.2L825.9 818L826.6 818.9L827.3 819.8L828 820.7L828.8 821.6L829.5 822.5L830.2 823.4L830.9 824.3L831.6 825.2L832.3 826.1L833 827L833.7 827.9L834.4 828.9L835.1 829.8L835.8 830.7L836.4 831.6L837.1 832.6L837.8 833.5L838.4 834.5L839.1 835.4L839.7 836.4L840.3 837.3L841 838.3L841.6 839.2L842.2 840.2L842.8 841.2L843.5 842.2L844.1 843.1L844.7 844.1L845.3 845.1L845.9 846.1L846.5 847.1L847 848.1L847.6 849.1L848.1 850.1L848.7 851.1L849.2 852.1L849.7 853.2L850.2 854.2L850.6 855.3L851.1 856.3L851.5 857.4L852 858.5L852.4 859.5L852.8 860.6L853.3 861.7L853.7 862.7L854.1 863.8L854.4 864.9L854.8 866L855.2 867.1L855.6 868.2L855.9 869.2L856.3 870.3L856.6 871.4L857 872.5L857.3 873.6L857.6 874.7L857.9 875.8L858.3 876.9L858.6 878L858.9 879.1L859.2 880.2L859.5 881.3L859.8 882.4L860.1 883.5L860.4 884.6L860.7 885.7L861 886.8L861.2 887.9L861.5 889L861.8 890.1L862.1 891.2L862.4 892.3L862.6 893.4L862.9 894.6L863.2 895.7L863.4 896.8L863.7 897.9L863.9 899L864.2 900.1L864.5 901.2L864.7 902.3L865 903.4L865.2 904.5L865.5 905.6L865.8 906.7L866 907.8L866.3 908.9L866.6 910L866.9 911L867.2 912.1L867.4 913.2L867.7 914.3L868 915.4L868.3 916.5L868.6 917.6L868.9 918.6L869.2 919.7L869.5 920.8L869.8 921.9L870.1 922.9L870.4 924L870.7 925.1L871 926.2L871.3 927.2L871.6 928.3L871.9 929.4L872.2 930.5L872.5 931.5M759.7 740.6L760.6 741.3L761.6 741.9L762.5 742.6L763.4 743.2L764.4 743.9L765.3 744.5L766.3 745.2L767.2 745.8L768.2 746.5L769.1 747.2L770 747.8L771 748.5L771.9 749.2L772.8 749.9L773.7 750.6L774.6 751.4L775.5 752.1L776.3 752.8L777.2 753.6L778 754.4L778.9 755.2L779.7 756L780.5 756.8L781.3 757.6L782.2 758.4L783 759.2L783.8 760L784.6 760.8L785.4 761.7L786.2 762.5L786.9 763.3L787.7 764.2L788.5 765L789.3 765.9L790 766.8L790.8 767.6L791.5 768.5L792.3 769.4L793 770.3L793.7 771.2L794.4 772.1L795.1 773L795.8 773.9L796.5 774.9L797.1 775.8L797.8 776.7L798.4 777.7L799.1 778.6L799.7 779.6L800.4 780.5L801.1 781.5L801.7 782.4L802.4 783.3L803.1 784.3L803.7 785.2L804.4 786.1L805.1 787.1L805.7 788L806.4 788.9L807.1 789.9L807.8 790.8L808.4 791.8L809.1 792.7L809.8 793.6L810.4 794.6L811.1 795.5L811.8 796.4L812.5 797.3L813.2 798.3L813.9 799.2L814.6 800.1L815.3 801L816 801.9L816.7 802.8L817.4 803.7L818.1 804.6L818.9 805.5L819.6 806.4L820.3 807.3L821 808.2L821.8 809L822.5 809.9L823.2 810.8L824 811.7L824.7 812.6L825.4 813.5L826.2 814.4L826.9 815.2L827.6 816.1L828.4 817L829.1 817.9L829.9 818.7L830.6 819.6L831.4 820.5L832.1 821.4L832.8 822.2L833.6 823.1L834.3 824L835 824.9L835.7 825.8L836.4 826.7L837.2 827.6L837.9 828.5L838.5 829.4L839.2 830.4L839.9 831.3L840.6 832.2L841.3 833.1L841.9 834.1L842.6 835L843.2 836L843.9 836.9L844.5 837.9L845.1 838.8L845.8 839.8L846.4 840.8L847 841.7L847.7 842.7L848.3 843.7L848.9 844.6L849.5 845.6L850 846.6L850.6 847.6L851.1 848.6L851.7 849.7L852.2 850.7L852.7 851.7L853.1 852.8L853.6 853.8L854.1 854.9L854.5 856L854.9 857L855.4 858.1L855.8 859.2L856.2 860.2L856.6 861.3L856.9 862.4L857.3 863.5L857.7 864.6L858 865.7L858.4 866.8L858.7 867.9L859 869L859.3 870.1L859.7 871.2L860 872.3L860.3 873.4L860.5 874.5L860.8 875.6L861.1 876.7L861.4 877.8L861.7 878.9L861.9 880.1L862.2 881.2L862.4 882.3L862.7 883.4L862.9 884.5L863.2 885.6L863.4 886.7L863.7 887.9L863.9 889L864.2 890.1L864.4 891.2L864.6 892.3L864.8 893.5L865 894.6L865.3 895.7L865.5 896.8L865.7 897.9L865.9 899.1L866.1 900.2L866.3 901.3L866.5 902.4L866.7 903.5L867 904.7L867.2 905.8L867.4 906.9L867.6 908L867.8 909.1L868.1 910.2L868.3 911.3L868.5 912.5L868.7 913.6L869 914.7L869.2 915.8L869.4 916.9L869.7 918L869.9 919.1L870.1 920.2L870.4 921.3L870.6 922.4L870.8 923.5L871.1 924.6L871.3 925.7L871.6 926.8L871.8 927.9L872 929.1L872.3 930.2L872.5 931.3M762.9 739.1L763.8 739.7L764.7 740.3L765.6 740.9L766.5 741.5L767.4 742.1L768.3 742.7L769.2 743.3L770.1 743.9L770.9 744.5L771.8 745.2L772.7 745.8L773.6 746.4L774.5 747L775.3 747.7L776.2 748.4L777 749L777.8 749.7L778.7 750.4L779.5 751.1L780.3 751.8L781.1 752.5L781.9 753.2L782.7 754L783.5 754.7L784.2 755.4L785 756.2L785.8 756.9L786.6 757.7L787.3 758.4L788.1 759.2L788.9 759.9L789.6 760.7L790.4 761.5L791.1 762.2L791.9 763L792.6 763.8L793.3 764.6L794 765.4L794.7 766.2L795.4 767L796.1 767.8L796.8 768.7L797.4 769.5L798.1 770.4L798.7 771.2L799.4 772.1L800 773L800.7 773.8L801.3 774.7L801.9 775.6L802.6 776.4L803.2 777.3L803.8 778.2L804.5 779L805.2 779.9L805.8 780.7L806.5 781.6L807.1 782.4L807.8 783.3L808.4 784.2L809.1 785L809.7 785.9L810.4 786.7L811 787.6L811.7 788.5L812.3 789.3L813 790.2L813.7 791L814.3 791.9L815 792.7L815.7 793.5L816.4 794.4L817.1 795.2L817.7 796L818.4 796.9L819.1 797.7L819.8 798.5L820.5 799.3L821.2 800.1L822 801L822.7 801.8L823.4 802.6L824.1 803.4L824.8 804.2L825.5 805L826.2 805.9L826.9 806.7L827.6 807.5L828.4 808.3L829.1 809.1L829.8 809.9L830.5 810.7L831.2 811.5L832 812.3L832.7 813.1L833.4 813.9L834.1 814.7L834.8 815.5L835.5 816.4L836.2 817.2L836.9 818L837.6 818.8L838.3 819.7L839 820.5L839.7 821.3L840.3 822.2L841 823L841.7 823.9L842.3 824.7L843 825.6L843.6 826.5L844.3 827.3L844.9 828.2L845.5 829.1L846.2 830L846.8 830.8L847.4 831.7L848 832.6L848.6 833.5L849.2 834.4L849.8 835.3L850.4 836.2L851 837.1L851.5 838L852 838.9L852.6 839.9L853.1 840.8L853.6 841.8L854 842.7L854.5 843.7L855 844.7L855.4 845.6L855.8 846.6L856.3 847.6L856.7 848.6L857.1 849.6L857.5 850.5L857.9 851.5L858.2 852.5L858.6 853.5L859 854.5L859.3 855.5L859.7 856.5L860 857.5L860.4 858.5L860.7 859.5L861 860.5L861.3 861.5L861.6 862.6L861.9 863.6L862.2 864.6L862.5 865.6L862.8 866.6L863.1 867.6L863.4 868.6L863.7 869.6L863.9 870.7L864.2 871.7L864.5 872.7L864.7 873.7L865 874.7L865.3 875.7L865.5 876.7L865.8 877.7L866 878.7L866.3 879.7L866.5 880.7L866.8 881.7L867.1 882.7L867.3 883.7L867.6 884.7L867.8 885.7L868.1 886.7L868.3 887.7L868.5 888.7L868.8 889.7L869 890.7L869.3 891.8L869.5 892.8L869.7 893.9L869.9 894.9L870.1 896L870.2 897.1L870.4 898.1L870.6 899.2L870.7 900.3L870.9 901.3L871.1 902.4L871.2 903.5L871.4 904.5L871.5 905.6L871.7 906.7L871.8 907.8L872 908.8L872.1 909.9L872.3 911L872.4 912L872.6 913.1L872.8 914.2M763.3 738.9L764.2 739.4L765 740L765.9 740.5L766.7 741.1L767.6 741.6L768.4 742.1L769.3 742.7L770.1 743.2L771 743.8L771.8 744.3L772.7 744.9L773.5 745.4L774.3 746L775.2 746.6L776 747.1L776.8 747.7L777.6 748.4L778.4 749L779.2 749.6L780 750.2L780.7 750.9L781.5 751.5L782.3 752.1L783 752.8L783.8 753.4L784.6 754.1L785.3 754.7L786.1 755.4L786.8 756.1L787.6 756.7L788.3 757.4L789 758.1L789.8 758.8L790.5 759.5L791.2 760.1L791.9 760.8L792.7 761.6L793.4 762.3L794 763L794.7 763.7L795.4 764.5L796.1 765.2L796.7 766L797.4 766.8L798 767.5L798.6 768.3L799.3 769.1L799.9 769.9L800.5 770.7L801.1 771.4L801.8 772.2L802.4 773L803 773.8L803.7 774.6L804.3 775.3L804.9 776.1L805.6 776.9L806.2 777.7L806.8 778.5L807.5 779.3L808.1 780L808.7 780.8L809.4 781.6L810 782.4L810.6 783.2L811.3 784L811.9 784.7L812.6 785.5L813.2 786.3L813.9 787.1L814.5 787.8L815.2 788.6L815.8 789.4L816.5 790.1L817.2 790.9L817.8 791.6L818.5 792.4L819.2 793.2L819.8 793.9L820.5 794.7L821.2 795.4L821.9 796.2L822.5 796.9L823.2 797.7L823.9 798.5L824.6 799.2L825.2 800L825.9 800.7L826.6 801.5L827.3 802.2L828 803L828.6 803.7L829.3 804.5L830 805.2L830.7 806L831.4 806.7L832 807.5L832.7 808.2L833.4 809L834.1 809.7L834.7 810.5L835.4 811.3L836 812L836.7 812.8L837.3 813.6L838 814.3L838.6 815.1L839.3 815.9L839.9 816.7L840.5 817.5L841.2 818.3L841.8 819.1L842.4 819.9L843 820.7L843.6 821.5L844.2 822.3L844.9 823.1L845.5 823.9L846.1 824.7L846.7 825.5L847.2 826.3L847.8 827.1L848.4 828L848.9 828.8L849.5 829.6L850 830.5L850.5 831.3L851 832.2L851.5 833.1L852 833.9L852.5 834.8L852.9 835.7L853.4 836.5L853.9 837.4L854.3 838.3L854.7 839.2L855.2 840.1L855.6 840.9L856 841.8L856.4 842.7L856.8 843.6L857.2 844.5L857.6 845.4L858 846.3L858.4 847.2L858.8 848.1L859.1 849L859.5 849.9L859.9 850.8L860.2 851.7L860.6 852.6L860.9 853.5L861.3 854.4L861.6 855.3L862 856.2L862.3 857.1L862.7 858L863 858.9L863.4 859.8L863.7 860.7L864 861.6L864.4 862.5L864.7 863.4L865 864.2L865.4 865.1L865.7 866L866 866.8L866.4 867.7L866.7 868.5L867 869.4L867.4 870.2L867.7 871.1L868.1 871.9L868.4 872.8L868.7 873.7L869 874.6L869.3 875.5L869.6 876.4L869.9 877.4L870.1 878.3L870.4 879.3L870.6 880.3L870.7 881.3L870.9 882.3L871.1 883.3L871.2 884.3L871.4 885.3L871.5 886.3L871.7 887.3L871.8 888.3L871.9 889.3L872 890.3L872.2 891.3L872.3 892.3L872.4 893.3L872.6 894.3L872.7 895.3L872.9 896.3L873 897.3M763.8 738.7L764.6 739.2L765.4 739.7L766.2 740.1L767 740.6L767.8 741.1L768.6 741.6L769.4 742L770.2 742.5L771 743L771.8 743.5L772.7 743.9L773.5 744.4L774.2 744.9L775 745.4L775.8 745.9L776.6 746.5L777.4 747L778.1 747.5L778.9 748.1L779.6 748.6L780.4 749.2L781.1 749.7L781.9 750.3L782.6 750.9L783.4 751.4L784.1 752L784.8 752.6L785.6 753.1L786.3 753.7L787 754.3L787.8 754.9L788.5 755.5L789.2 756.1L789.9 756.7L790.6 757.3L791.3 757.9L792 758.5L792.7 759.2L793.4 759.8L794 760.4L794.7 761.1L795.3 761.8L796 762.4L796.6 763.1L797.2 763.8L797.9 764.5L798.5 765.2L799.1 765.9L799.7 766.6L800.3 767.3L801 768L801.6 768.7L802.2 769.4L802.8 770.1L803.4 770.8L804.1 771.5L804.7 772.2L805.3 772.9L805.9 773.6L806.5 774.3L807.1 775.1L807.8 775.8L808.4 776.5L809 777.2L809.6 777.9L810.2 778.6L810.8 779.3L811.5 780L812.1 780.7L812.7 781.4L813.4 782.1L814 782.8L814.6 783.5L815.3 784.2L815.9 784.9L816.5 785.6L817.2 786.3L817.8 787L818.4 787.7L819.1 788.4L819.7 789.1L820.4 789.8L821 790.5L821.6 791.2L822.3 791.9L822.9 792.6L823.5 793.3L824.2 794L824.8 794.7L825.5 795.3L826.1 796L826.8 796.7L827.4 797.4L828 798.1L828.7 798.8L829.3 799.5L830 800.2L830.6 800.9L831.2 801.6L831.9 802.3L832.5 803L833.1 803.7L833.8 804.4L834.4 805.1L835 805.8L835.6 806.5L836.3 807.2L836.9 807.9L837.5 808.6L838.1 809.4L838.7 810.1L839.3 810.8L839.9 811.5L840.5 812.2L841.1 813L841.7 813.7L842.3 814.4L842.9 815.1L843.5 815.9L844.1 816.6L844.7 817.3L845.2 818.1L845.8 818.8L846.3 819.6L846.9 820.3L847.4 821.1L847.9 821.8L848.5 822.6L849 823.4L849.5 824.1L850 824.9L850.5 825.7L851 826.5L851.5 827.2L851.9 828L852.4 828.8L852.9 829.6L853.3 830.4L853.8 831.1L854.2 831.9L854.7 832.7L855.1 833.5L855.6 834.3L856 835.1L856.4 835.9L856.9 836.6L857.3 837.4L857.7 838.2L858.1 839L858.6 839.8L859 840.6L859.4 841.4L859.8 842.2L860.2 843L860.6 843.7L861 844.5L861.4 845.3L861.8 846.1L862.2 846.9L862.6 847.7L863 848.4L863.4 849.2L863.8 850L864.3 850.7L864.7 851.5L865.1 852.2L865.5 852.9L865.9 853.6L866.4 854.3L866.8 855L867.2 855.7L867.6 856.4L868.1 857.2L868.5 857.9L868.9 858.6L869.3 859.4L869.7 860.2L870 861L870.3 861.9L870.6 862.8L870.8 863.7L871.1 864.6L871.3 865.5L871.4 866.4L871.6 867.4L871.7 868.3L871.9 869.2L872 870.2L872.1 871.1L872.2 872.1L872.3 873L872.4 873.9L872.5 874.9L872.6 875.8L872.8 876.8L872.9 877.7L873 878.6L873.1 879.6L873.2 880.5M764.2 738.5L764.9 738.9L765.7 739.3L766.5 739.7L767.2 740.2L768 740.6L768.8 741L769.6 741.4L770.3 741.8L771.1 742.2L771.9 742.6L772.6 743L773.4 743.4L774.1 743.9L774.9 744.3L775.6 744.7L776.4 745.2L777.1 745.6L777.9 746.1L778.6 746.6L779.3 747L780.1 747.5L780.8 748L781.5 748.5L782.2 749L782.9 749.4L783.6 749.9L784.4 750.4L785.1 750.9L785.8 751.4L786.5 751.9L787.2 752.4L787.9 752.9L788.6 753.4L789.3 753.9L790 754.4L790.7 755L791.3 755.5L792 756.1L792.7 756.6L793.3 757.2L794 757.7L794.6 758.3L795.2 758.9L795.9 759.5L796.5 760.1L797.1 760.7L797.7 761.3L798.3 761.9L798.9 762.6L799.6 763.2L800.2 763.8L800.8 764.4L801.4 765L802 765.7L802.6 766.3L803.2 766.9L803.8 767.5L804.4 768.2L805 768.8L805.6 769.4L806.2 770.1L806.8 770.7L807.4 771.3L808 772L808.6 772.6L809.2 773.2L809.8 773.9L810.4 774.5L811 775.1L811.6 775.8L812.2 776.4L812.8 777L813.4 777.7L814 778.3L814.6 778.9L815.2 779.6L815.8 780.2L816.4 780.8L817 781.5L817.6 782.1L818.3 782.7L818.9 783.4L819.5 784L820.1 784.6L820.7 785.3L821.3 785.9L821.9 786.6L822.5 787.2L823.1 787.8L823.7 788.5L824.3 789.1L824.9 789.8L825.5 790.4L826.1 791L826.7 791.7L827.3 792.3L827.9 792.9L828.5 793.6L829.1 794.2L829.7 794.8L830.3 795.5L830.9 796.1L831.5 796.8L832.1 797.4L832.7 798L833.3 798.7L833.9 799.3L834.5 800L835.1 800.6L835.7 801.2L836.3 801.9L836.8 802.5L837.4 803.2L838 803.8L838.6 804.5L839.2 805.1L839.8 805.8L840.3 806.4L840.9 807.1L841.5 807.7L842.1 808.4L842.6 809L843.2 809.7L843.8 810.3L844.3 811L844.9 811.7L845.4 812.3L845.9 813L846.5 813.7L847 814.4L847.5 815L848 815.7L848.5 816.4L849.1 817.1L849.6 817.7L850.1 818.4L850.6 819.1L851.1 819.8L851.6 820.4L852.1 821.1L852.6 821.8L853 822.5L853.5 823.2L854 823.8L854.5 824.5L855 825.2L855.5 825.9L855.9 826.6L856.4 827.2L856.9 827.9L857.3 828.6L857.8 829.3L858.3 829.9L858.8 830.6L859.2 831.3L859.7 832L860.2 832.6L860.6 833.3L861.1 834L861.6 834.6L862 835.3L862.5 836L863 836.6L863.5 837.2L864 837.8L864.5 838.4L865 839L865.5 839.6L866 840.2L866.5 840.7L867.1 841.3L867.6 841.8L868.1 842.4L868.6 843L869.1 843.6L869.5 844.2L870 844.9L870.4 845.7L870.7 846.4L871 847.2L871.3 848L871.6 848.9L871.8 849.7L871.9 850.6L872.1 851.5L872.2 852.3L872.3 853.2L872.4 854.1L872.5 854.9L872.6 855.8L872.7 856.7L872.8 857.6L872.9 858.4L873 859.3L873.1 860.2L873.2 861.1L873.3 861.9L873.4 862.8L873.5 863.7M764.6 738.3L765.3 738.7L766 739L766.8 739.3L767.5 739.7L768.2 740L769 740.4L769.7 740.7L770.4 741.1L771.1 741.4L771.9 741.8L772.6 742.1L773.3 742.5L774 742.8L774.8 743.2L775.5 743.5L776.2 743.9L776.9 744.3L777.6 744.7L778.3 745.1L779 745.4L779.7 745.8L780.4 746.2L781.1 746.6L781.8 747L782.5 747.4L783.2 747.8L783.9 748.2L784.6 748.6L785.3 749L786 749.5L786.6 749.9L787.3 750.3L788 750.7L788.7 751.1L789.3 751.6L790 752L790.7 752.5L791.3 752.9L792 753.4L792.6 753.9L793.3 754.4L793.9 754.9L794.5 755.4L795.1 755.9L795.7 756.4L796.4 756.9L797 757.4L797.6 758L798.2 758.5L798.8 759L799.4 759.6L799.9 760.1L800.5 760.7L801.1 761.2L801.7 761.8L802.3 762.3L802.9 762.9L803.5 763.4L804.1 764L804.7 764.5L805.2 765.1L805.8 765.6L806.4 766.2L807 766.8L807.6 767.3L808.1 767.9L808.7 768.4L809.3 769L809.9 769.6L810.4 770.1L811 770.7L811.6 771.3L812.2 771.8L812.8 772.4L813.3 773L813.9 773.5L814.5 774.1L815.1 774.7L815.6 775.2L816.2 775.8L816.8 776.4L817.3 777L817.9 777.5L818.5 778.1L819 778.7L819.6 779.3L820.2 779.9L820.7 780.5L821.3 781L821.9 781.6L822.4 782.2L823 782.8L823.6 783.4L824.1 783.9L824.7 784.5L825.3 785.1L825.8 785.7L826.4 786.2L827 786.8L827.5 787.4L828.1 788L828.7 788.5L829.2 789.1L829.8 789.7L830.4 790.3L831 790.8L831.5 791.4L832.1 792L832.7 792.5L833.2 793.1L833.8 793.7L834.4 794.3L834.9 794.8L835.5 795.4L836.1 796L836.7 796.6L837.2 797.1L837.8 797.7L838.4 798.3L838.9 798.8L839.5 799.4L840.1 800L840.6 800.6L841.2 801.1L841.7 801.7L842.3 802.3L842.8 802.9L843.4 803.4L843.9 804L844.5 804.6L845 805.2L845.6 805.7L846.1 806.3L846.7 806.9L847.2 807.5L847.7 808L848.3 808.6L848.8 809.2L849.3 809.8L849.9 810.3L850.4 810.9L850.9 811.5L851.5 812L852 812.6L852.5 813.2L853.1 813.8L853.6 814.3L854.1 814.9L854.7 815.5L855.2 816L855.7 816.6L856.3 817.2L856.8 817.7L857.3 818.3L857.8 818.9L858.4 819.4L858.9 820L859.4 820.5L860 821.1L860.5 821.6L861.1 822.2L861.6 822.7L862.2 823.2L862.7 823.7L863.3 824.2L863.9 824.7L864.5 825.1L865.1 825.5L865.7 826L866.3 826.4L866.9 826.8L867.5 827.2L868.1 827.6L868.7 828.1L869.2 828.5L869.8 829.1L870.3 829.6L870.8 830.3L871.2 831L871.5 831.7L871.8 832.4L872.1 833.2L872.3 834L872.4 834.8L872.6 835.6L872.7 836.4L872.8 837.2L872.9 838L873 838.8L873 839.6L873.1 840.4L873.2 841.2L873.2 842L873.3 842.8L873.4 843.6L873.5 844.4L873.5 845.2L873.6 846L873.8 846.8M737.5 755.1L768.2 739.4M741.3 756.9L771 740.5M745.8 759.1L774.3 741.9M750.3 761.6L777.6 743.3M754.4 764.3L780.8 744.8M757.7 766.8L783.4 746.1M761.4 770.1L786.5 747.6M765 773.6L789.5 749.1M768 776.6L791.8 750.5M771.4 780.2L794.5 752.3M774.8 784L797 754.2M778.1 787.8L799.5 756.1M780.7 791.1L801.5 757.8M783.8 795.1L803.9 759.8M786.8 799.1L806.2 761.8M789.2 802.4L808.1 763.4M792 806.5L810.4 765.4M794.7 810.6L812.6 767.5M797.4 814.8L814.8 769.5M799.6 818.4L816.6 771.3M802.3 822.7L818.7 773.4M804.9 827.1L820.8 775.5M807 830.7L822.6 777.3M809.4 835.1L824.6 779.3M811.8 839.5L826.7 781.2M814.1 844L828.8 783.1M816 847.8L830.5 784.7M818.3 852.5L832.6 786.6M820.7 857.5L834.7 788.5M823 861.9L836.5 790.1M825.7 867.2L838.7 792M828.4 872.5L840.9 793.9M831.2 877.8L843.1 795.7M833.6 882.1L844.9 797.2M836.5 887.2L847.1 799M839.5 892.1L849.3 800.8M841.9 896.1L851.2 802.3M844.9 900.8L853.4 804.1M848 905.4L855.6 805.8M851.2 910.1L857.9 807.5M853.9 913.8L859.8 808.8M871.1 814L874 814.8M866.3 818.4L874 819.2M862.3 822.8L874 823.6M862.3 827.2L874 828M862.3 831.6L874 832.4M862.3 836L874 836.8M862.3 840.4L874 841.2M862.3 844.8L874 845.6M862.3 849.2L874 850M862.3 853.6L874 854.4M862.3 858L874 858.8M862.3 862.4L874 863.2M862.3 866.8L874 867.6M862.3 871.2L874 872M862.3 875.6L874 876.4M862.3 880L874 880.8M862.3 884.4L874 885.2M862.3 888.8L874 889.6M862.3 893.2L874 894M862.3 897.6L874 898.4M862.3 902L874 902.8M862.3 906.4L874 907.2M862.3 910.8L874 911.6M862.3 915.2L874 916M862.3 919.6L874 920.4M862.3 924L874 924.8M862.3 928.4L874 929.2M862.3 932.8L874 933.6M863.8 812.1L865 936M865.8 813.3L867 936M867.8 814.5L869 936M869.8 815.7L871 936M871.8 816.9L873 936"/>
<path stroke="#5a5a5a" stroke-width="1.3" d="M151.4 1239V1284.4H195.8"/>
<text x="154.8" y="1240.4" font-family="Liberation Sans,sans-serif" font-size="20" fill="#5a5a5a" stroke="none">z</text>
<text x="200" y="1285.5" font-family="Liberation Sans,sans-serif" font-size="20" fill="#5a5a5a" stroke="none">x</text>
</svg>
</div>
<div id="vtab" class="abs"></div>
<div class="t" style="left:105px;top:132px;font-size:20px;font-weight:bold;color:#2a2d3a">Front</div>
<div class="abs" style="left:165px;top:131px;width:1px;height:24px;background:#2a2d3a"></div>
<svg class="abs" style="left:167px;top:138px" width="12" height="8" viewBox="0 0 12 8"><path d="M0.5 1 L11.5 1 L6 7 Z" fill="#2a2d3a"/></svg>
<style>

#panel{left:2305px;top:192px;width:253px;height:1176px;border:1px solid #b4bfda;box-sizing:border-box;}
.ph{position:absolute;left:2316px;font-size:23px;color:#222;white-space:nowrap;line-height:1;}
.pl{position:absolute;left:2344px;font-size:19px;color:#222;white-space:nowrap;line-height:1;}
.pl.g{color:#707070;}
.pv{position:absolute;left:2440px;width:118px;height:30px;background:#fff;}
.pt{position:absolute;left:2445px;font-size:19px;color:#111;white-space:nowrap;line-height:1;}
.prl{position:absolute;left:2340px;width:218px;height:1px;background:#dfe2ea;}
.phl{position:absolute;left:2316px;width:242px;height:1px;background:#dfe2ea;}
.pvl{position:absolute;left:2439px;width:1px;background:#dfe2ea;}
.btn{position:absolute;background:#e1e1e1;border:1px solid #adadad;box-sizing:border-box;font-size:19px;text-align:center;line-height:25px;color:#111;}
.cb{position:absolute;width:20px;height:20px;border:1px solid #333;background:#fff;box-sizing:border-box;}

</style>
<div class="t" style="left:2310px;top:135.5px;font-size:19px;color:#222">属性: 视图属性</div>
<div class="hl" style="left:2442px;top:142px;width:117px;background:#cfd6e8"></div><div class="hl" style="left:2442px;top:145px;width:117px;background:#dde2ee"></div>
<div id="panel" class="abs"></div>
<div class="abs" style="left:2305px;top:159px;width:35px;height:34px;border:1px solid #b4bfda;border-bottom:none;box-sizing:border-box;background:#ebecf0"></div>
<div class="ph" style="top:262px">工作视窗</div>
<div class="phl" style="top:290px"></div>
<div class="pvl" style="top:290px;height:155px"></div>
<div class="pv" style="top:291px;width:118px"></div>
<div class="pl" style="top:297px">标题</div>
<div class="pt" style="top:297px;left:2445px">Front</div>
<div class="prl" style="top:321px"></div>
<div class="pv" style="top:322px;width:118px"></div>
<div class="pl g" style="top:328px">宽度</div>
<div class="pt" style="top:328px;left:2445px">2199</div>
<div class="prl" style="top:352px"></div>
<div class="pv" style="top:353px;width:118px"></div>
<div class="pl g" style="top:359px">高度</div>
<div class="pt" style="top:359px;left:2445px">1209</div>
<div class="prl" style="top:383px"></div>
<div class="pv" style="top:384px;width:96px"></div>
<div class="pl" style="top:390px">投影</div>
<div class="pt" style="top:390px;left:2443px">平行</div>
<div class="btn" style="left:2536px;top:385px;width:23px;height:28px"><svg width="21" height="26" viewBox="0 0 21 26" style="position:absolute;left:0;top:0"><path d="M6.5 10.5 L11 15 L15.5 10.5" fill="none" stroke="#444" stroke-width="1.3"/></svg></div>
<div class="prl" style="top:414px"></div>
<div class="pl" style="top:421px">锁定</div>
<div class="cb" style="left:2443px;top:420px"></div>
<div class="prl" style="top:445px"></div>
<div class="ph" style="top:455px">摄像机</div>
<div class="phl" style="top:483px"></div>
<div class="pvl" style="top:483px;height:217px"></div>
<div class="pv" style="top:484px;width:118px"></div>
<div class="pl g" style="top:490px">镜头焦距</div>
<div class="pt" style="top:490px;left:2445px">50.0</div>
<div class="prl" style="top:514px"></div>
<div class="pv" style="top:515px;width:118px"></div>
<div class="pl" style="top:521px">旋转</div>
<div class="pt" style="top:521px;left:2445px">0.0</div>
<div class="prl" style="top:545px"></div>
<div class="pv" style="top:546px;width:118px"></div>
<div class="pl" style="top:552px">X 座标</div>
<div class="pt" style="top:552px;left:2445px">-3.725</div>
<div class="prl" style="top:576px"></div>
<div class="pv" style="top:577px;width:118px"></div>
<div class="pl" style="top:583px">Y 座标</div>
<div class="pt" style="top:583px;left:2445px">-4205.284</div>
<div class="prl" style="top:607px"></div>
<div class="pv" style="top:608px;width:118px"></div>
<div class="pl" style="top:614px">Z 座标</div>
<div class="pt" style="top:614px;left:2445px">998.449</div>
<div class="prl" style="top:638px"></div>
<div class="pl" style="top:645px">目标点距...</div>
<div class="pt" style="top:645px;left:2445px">4205.284</div>
<div class="prl" style="top:669px"></div>
<div class="pl" style="top:676px">位置</div>
<div class="btn" style="left:2441px;top:672px;width:118px;height:27px">放置...</div>
<div class="prl" style="top:700px"></div>
<div class="ph" style="top:710px">目标点</div>
<div class="phl" style="top:738px"></div>
<div class="pvl" style="top:738px;height:124px"></div>
<div class="pv" style="top:739px;width:118px"></div>
<div class="pl" style="top:745px">X 座标</div>
<div class="pt" style="top:745px;left:2445px">-3.725</div>
<div class="prl" style="top:769px"></div>
<div class="pv" style="top:770px;width:118px"></div>
<div class="pl" style="top:776px">Y 座标</div>
<div class="pt" style="top:776px;left:2445px">0.0</div>
<div class="prl" style="top:800px"></div>
<div class="pv" style="top:801px;width:118px"></div>
<div class="pl" style="top:807px">Z 座标</div>
<div class="pt" style="top:807px;left:2445px">998.449</div>
<div class="prl" style="top:831px"></div>
<div class="pl" style="top:838px">位置</div>
<div class="btn" style="left:2441px;top:834px;width:118px;height:27px">放置...</div>
<div class="prl" style="top:862px"></div>
<div class="ph" style="top:872px">底色图案</div>
<div class="phl" style="top:900px"></div>
<div class="pvl" style="top:900px;height:93px"></div>
<div class="pv" style="top:901px;width:96px"></div>
<div class="pl" style="top:907px">文件名称</div>
<div class="pt" style="top:907px;left:2442px">(无)</div>
<div class="btn" style="left:2536px;top:902px;width:23px;height:28px;line-height:24px">...</div>
<div class="prl" style="top:931px"></div>
<div class="pl" style="top:938px">显示</div>
<div class="cb" style="left:2443px;top:937px"><svg width="18" height="18" viewBox="0 0 18 18" style="position:absolute;left:0;top:0"><path d="M3.5 9.5 L7.3 13.2 L14.8 4.8" fill="none" stroke="#222" stroke-width="1.6"/></svg></div>
<div class="prl" style="top:962px"></div>
<div class="pl" style="top:969px">灰阶</div>
<div class="cb" style="left:2443px;top:968px"><svg width="18" height="18" viewBox="0 0 18 18" style="position:absolute;left:0;top:0"><path d="M3.5 9.5 L7.3 13.2 L14.8 4.8" fill="none" stroke="#222" stroke-width="1.6"/></svg></div>
<div class="prl" style="top:993px"></div>
<div class="abs" style="left:2306px;top:1341px;width:251px;height:26px;background:#f0f0f0"></div>
<div class="abs" style="left:2332px;top:1341px;width:186px;height:26px;background:#cdcdcd"></div>
<svg class="abs" style="left:2306px;top:1341px" width="251" height="26" viewBox="0 0 251 26"><path d="M15.5 7.5 L10.5 12.5 L15.5 17.5 M235.5 7.5 L240.5 12.5 L235.5 17.5" fill="none" stroke="#8a8a8a" stroke-width="1.6"/></svg>
<svg class="abs" style="left:2300px;top:150px" width="259" height="100" viewBox="2300 150 259 100">
<defs>
<radialGradient id="psph" cx="0.38" cy="0.32" r="0.75"><stop offset="0" stop-color="#e8efff"/><stop offset="0.35" stop-color="#5b83ea"/><stop offset="1" stop-color="#0a1f8c"/></radialGradient>
<linearGradient id="pfold" x1="0" y1="0" x2="0" y2="1"><stop offset="0" stop-color="#ffe680"/><stop offset="1" stop-color="#f0b820"/></linearGradient>
<linearGradient id="pcam" x1="0" y1="0" x2="0" y2="1"><stop offset="0" stop-color="#5a5a5a"/><stop offset="1" stop-color="#0e0e0e"/></linearGradient>
<linearGradient id="pfr" x1="0" y1="0" x2="0" y2="1"><stop offset="0" stop-color="#6a6a6a"/><stop offset="0.5" stop-color="#b0b0b0"/><stop offset="1" stop-color="#6a6a6a"/></linearGradient>
</defs>
<rect x="2315.2" y="199.3" width="41.7" height="41.5" fill="#a9b8ec"/>
<path d="M2319.90 168.20A9.6 9.6 0 0 1 2324.95 169.63L2322.74 173.21A5.4 5.4 0 0 0 2319.90 172.40Z" fill="#ff0000"/>
<path d="M2324.70 169.49A9.6 9.6 0 0 1 2328.35 173.25L2324.66 175.24A5.4 5.4 0 0 0 2322.60 173.12Z" fill="#ff8000"/>
<path d="M2328.21 173.00A9.6 9.6 0 0 1 2329.50 178.09L2325.30 177.96A5.4 5.4 0 0 0 2324.58 175.10Z" fill="#ffff00"/>
<path d="M2329.50 177.80A9.6 9.6 0 0 1 2328.07 182.85L2324.49 180.64A5.4 5.4 0 0 0 2325.30 177.80Z" fill="#80ff00"/>
<path d="M2328.21 182.60A9.6 9.6 0 0 1 2324.45 186.25L2322.46 182.56A5.4 5.4 0 0 0 2324.58 180.50Z" fill="#00ff00"/>
<path d="M2324.70 186.11A9.6 9.6 0 0 1 2319.61 187.40L2319.74 183.20A5.4 5.4 0 0 0 2322.60 182.48Z" fill="#00ff80"/>
<path d="M2319.90 187.40A9.6 9.6 0 0 1 2314.85 185.97L2317.06 182.39A5.4 5.4 0 0 0 2319.90 183.20Z" fill="#00ffff"/>
<path d="M2315.10 186.11A9.6 9.6 0 0 1 2311.45 182.35L2315.14 180.36A5.4 5.4 0 0 0 2317.20 182.48Z" fill="#0080ff"/>
<path d="M2311.59 182.60A9.6 9.6 0 0 1 2310.30 177.51L2314.50 177.64A5.4 5.4 0 0 0 2315.22 180.50Z" fill="#0000ff"/>
<path d="M2310.30 177.80A9.6 9.6 0 0 1 2311.73 172.75L2315.31 174.96A5.4 5.4 0 0 0 2314.50 177.80Z" fill="#8000ff"/>
<path d="M2311.59 173.00A9.6 9.6 0 0 1 2315.35 169.35L2317.34 173.04A5.4 5.4 0 0 0 2315.22 175.10Z" fill="#ff00ff"/>
<path d="M2315.10 169.49A9.6 9.6 0 0 1 2320.19 168.20L2320.06 172.40A5.4 5.4 0 0 0 2317.20 173.12Z" fill="#ff0080"/>
<circle cx="2319.9" cy="177.8" r="9.6" fill="none" stroke="#111" stroke-width="1.3"/><circle cx="2319.9" cy="177.8" r="5.4" fill="#fff" stroke="#444" stroke-width="0.6"/>
<path d="M2352.8 177.5Q2359 173.0 2366.7 171.5V175.3Q2359 176.8 2352.8 181.3Z" fill="#e21a1a"/><path d="M2352.8 181.3Q2359 176.8 2366.7 175.3V178.9Q2359 180.4 2352.8 184.9Z" fill="#f2f2f2"/><path d="M2352.8 184.9Q2359 180.4 2366.7 178.9V182.5Q2359 184.0 2352.8 188.5Z" fill="#2a3fb5"/>
<path d="M2344.3 166.8L2352.8 177.5V188.5L2344.3 177.8Z" fill="#16227a"/>
<path d="M2344.3 166.8L2347 166Q2358 168 2366.7 171.5Q2359 173 2352.8 177.5Z" fill="#ff8f5e"/>
<path d="M2344.3 166.8L2347 166Q2358 168 2366.7 171.5V182.5Q2359 184 2352.8 188.5L2344.3 177.8Z" fill="none" stroke="#111" stroke-width="1"/>
<ellipse cx="2392.5" cy="186" rx="10.5" ry="3.2" fill="#777" opacity="0.8"/><circle cx="2391.6" cy="178.8" r="9.3" fill="url(#psph)" stroke="#0a1250" stroke-width="0.8"/>
<path d="M2390 172.5Q2393 167.5 2397 167.2L2401 168.3V166.5H2404V173H2401V171.2L2397.5 172.5Q2395 173.5 2393.5 175Z" fill="#f2f2f2" stroke="#333" stroke-width="0.8"/><path d="M2403.5 166V173.5" stroke="#000" stroke-width="1.4"/>
<g transform="translate(2430.5 178) rotate(-46)"><path d="M-12 -3.5H4L8 -2.2H11V2.2H8L4 3.5H-12Q-13.5 0 -12 -3.5Z" fill="#f4f4f4" stroke="#222" stroke-width="1"/><rect x="0" y="-3.4" width="5.2" height="6.8" fill="#ef5a14"/><path d="M-8 -3.5V3.5" stroke="#999" stroke-width="0.8"/><rect x="9" y="-2.2" width="3.4" height="4.4" fill="#ddd" stroke="#222" stroke-width="0.8"/></g>
<path d="M2456 184.8V172L2458 170.2H2464L2466 172.3H2473.5V184.8Z" fill="#f5cf3a" stroke="#7a5c10" stroke-width="0.9"/><path d="M2456.3 185L2460 175.5H2476.6L2473.3 185Z" fill="url(#pfold)" stroke="#7a5c10" stroke-width="0.9"/>
<rect x="2493.3" y="167.2" width="20.7" height="20.8" fill="#fff" stroke="#666" stroke-width="1"/><rect x="2493.8" y="167.7" width="19.7" height="2.6" fill="#6a6fe0"/><path d="M2493.8 170.5H2513.5" stroke="#111" stroke-width="0.8"/><path d="M2496.2 184.5V181.5A7.6 8 0 0 1 2511.4 181.5V184.5Z" fill="#3f57c8"/><rect x="2493.8" y="184.5" width="19.7" height="3" fill="#a8a8a8"/>
<text x="2503.8" y="184" text-anchor="middle" font-family="Liberation Serif,serif" font-weight="bold" font-size="13" fill="#fff">?</text>
<path d="M2557.2 179.2L2556.7 181.4L2553.9 181.9L2553.0 183.3L2553.6 186.1L2551.7 187.4L2549.4 185.7L2547.7 186.1L2546.1 188.5L2543.9 188.0L2543.4 185.2L2542.0 184.3L2539.2 184.9L2537.9 183.0L2539.6 180.7L2539.2 179.0L2536.8 177.4L2537.3 175.2L2540.1 174.7L2541.0 173.3L2540.4 170.5L2542.3 169.2L2544.6 170.9L2546.3 170.5L2547.9 168.1L2550.1 168.6L2550.6 171.4L2552.0 172.3L2554.8 171.7L2556.1 173.6L2554.4 175.9L2554.8 177.6Z" fill="none" stroke="#c9d1e6" stroke-width="1.3" stroke-linejoin="round"/>
<circle cx="2547" cy="178.3" r="3.2" fill="none" stroke="#c9d1e6" stroke-width="1.3"/>
<path d="M2321.5 230.5V217Q2321.5 214.5 2324 214L2327 213.5Q2328 210.8 2330 211.3L2332.5 213L2335 209.5H2343L2345.5 213.5L2349.5 214.5Q2351.7 215.3 2351.7 218V230.5Q2336 232.5 2321.5 230.5Z" fill="url(#pcam)" stroke="#111" stroke-width="0.8"/>
<circle cx="2340" cy="223.4" r="7.6" fill="#1a1a1a" stroke="#cfcfcf" stroke-width="1.2"/><circle cx="2340" cy="223.4" r="5" fill="#222" stroke="#555" stroke-width="0.8"/><path d="M2336.5 221.5A4 4 0 0 1 2340 219.3" stroke="#7da0d8" stroke-width="1.6" fill="none"/><path d="M2343.3 225.5A4 4 0 0 1 2339.5 227.6" stroke="#4f9a5c" stroke-width="1.6" fill="none"/>
<rect x="2366.6" y="204.1" width="34.6" height="31.8" fill="url(#pfr)" stroke="#555" stroke-width="1"/><rect x="2369.8" y="208" width="28.2" height="24" fill="#86cbe9"/><rect x="2372.6" y="211.4" width="22.8" height="17.6" fill="#fff" stroke="#e8383c" stroke-width="1.5"/>
</svg>
<svg class="abs" style="left:0;top:0" width="96" height="900" viewBox="0 0 96 900">
<defs>
<linearGradient id="gb" x1="0" y1="0" x2="1" y2="1"><stop offset="0" stop-color="#b4c1f8"/><stop offset="1" stop-color="#5a78ee"/></linearGradient>
<linearGradient id="gb2" x1="0" y1="0" x2="0" y2="1"><stop offset="0" stop-color="#b9c5f8"/><stop offset="1" stop-color="#4f6be6"/></linearGradient>
<linearGradient id="gw" x1="0" y1="0" x2="1" y2="1"><stop offset="0" stop-color="#ffffff"/><stop offset="1" stop-color="#cfcfcf"/></linearGradient>
<radialGradient id="gs" cx="0.4" cy="0.35" r="0.7"><stop offset="0" stop-color="#c3cdfa"/><stop offset="0.6" stop-color="#6a85ee"/><stop offset="1" stop-color="#2b3fa8"/></radialGradient>
<linearGradient id="go" x1="0" y1="1" x2="1" y2="0"><stop offset="0" stop-color="#ffcc00"/><stop offset="0.6" stop-color="#ff8a00"/><stop offset="1" stop-color="#ff5a00"/></linearGradient>
<linearGradient id="gg" x1="0" y1="0" x2="1" y2="1"><stop offset="0" stop-color="#f4f4f4"/><stop offset="1" stop-color="#a9a9a9"/></linearGradient>
</defs>
<path d="M3 133.5H90M3 135.8H90" stroke="#c9d3e6" stroke-width="1" fill="none"/>
<path d="M83.0 170.3V178.7H74.4Z" fill="#6f6f73"/>
<path d="M40.7 212.3V220.7H32.1Z" fill="#6f6f73"/>
<path d="M83.0 212.3V220.7H74.4Z" fill="#6f6f73"/>
<path d="M40.7 254.3V262.7H32.1Z" fill="#6f6f73"/>
<path d="M83.0 254.3V262.7H74.4Z" fill="#6f6f73"/>
<path d="M40.7 296.3V304.7H32.1Z" fill="#6f6f73"/>
<path d="M83.0 296.3V304.7H74.4Z" fill="#6f6f73"/>
<path d="M40.7 338.3V346.7H32.1Z" fill="#6f6f73"/>
<path d="M83.0 338.3V346.7H74.4Z" fill="#6f6f73"/>
<path d="M40.7 380.3V388.7H32.1Z" fill="#6f6f73"/>
<path d="M83.0 380.3V388.7H74.4Z" fill="#6f6f73"/>
<path d="M40.7 422.3V430.7H32.1Z" fill="#6f6f73"/>
<path d="M83.0 422.3V430.7H74.4Z" fill="#6f6f73"/>
<path d="M40.7 464.3V472.7H32.1Z" fill="#6f6f73"/>
<path d="M83.0 464.3V472.7H74.4Z" fill="#6f6f73"/>
<path d="M40.7 590.3V598.7H32.1Z" fill="#6f6f73"/>
<path d="M83.0 632.3V640.7H74.4Z" fill="#6f6f73"/>
<path d="M83.0 674.3V682.7H74.4Z" fill="#6f6f73"/>
<path d="M40.7 758.3V766.7H32.1Z" fill="#6f6f73"/>
<path d="M83.0 758.3V766.7H74.4Z" fill="#6f6f73"/>
<path d="M40.7 800.3V808.7H32.1Z" fill="#6f6f73"/>
<path d="M83.0 800.3V808.7H74.4Z" fill="#6f6f73"/>
<path d="M40.7 842.3V850.7H32.1Z" fill="#6f6f73"/>
<path d="M83.0 842.3V850.7H74.4Z" fill="#6f6f73"/>
<path d="M40.7 884.3V892.7H32.1Z" fill="#6f6f73"/>
<path d="M83.0 884.3V892.7H74.4Z" fill="#6f6f73"/>
<path d="M14.3 148V166L19.3 162L23.3 169.5L25.8 168.2L22 161L27.4 160.4Z" fill="#fff" stroke="#333" stroke-width="1.2" stroke-linejoin="miter"/>
<circle cx="63.9" cy="160" r="2.9" fill="#fff" stroke="#333" stroke-width="1.2"/>
<path d="M10.7 213L18.5 192.9L33 208.9" fill="none" stroke="#555" stroke-width="1.1"/><rect x="16.3" y="190.7" width="4.4" height="4.4" fill="#fff" stroke="#000" stroke-width="1.25"/><rect x="30.8" y="206.7" width="4.4" height="4.4" fill="#fff" stroke="#000" stroke-width="1.25"/><rect x="8.5" y="210.8" width="4.4" height="4.4" fill="#fff" stroke="#000" stroke-width="1.25"/>
<path d="M51.5 192C68 187 74 196 73.7 203C73.4 211 65 216 51.5 211" fill="none" stroke="#555" stroke-width="1.1"/><rect x="49.3" y="189.8" width="4.4" height="4.4" fill="#fff" stroke="#000" stroke-width="1.25"/><rect x="70.8" y="186.3" width="4.4" height="4.4" fill="#fff" stroke="#000" stroke-width="1.25"/><rect x="49.3" y="208.8" width="4.4" height="4.4" fill="#fff" stroke="#000" stroke-width="1.25"/><rect x="72.8" y="211.0" width="4.4" height="4.4" fill="#fff" stroke="#000" stroke-width="1.25"/>
<circle cx="21.3" cy="243" r="13.8" fill="none" stroke="#6a6a6a" stroke-width="1.4"/><path d="M22 243L31 234" stroke="#888" stroke-width="1"/><rect x="19.8" y="240.8" width="4.4" height="4.4" fill="#fff" stroke="#000" stroke-width="1.25"/><rect x="28.8" y="231.8" width="4.4" height="4.4" fill="#fff" stroke="#000" stroke-width="1.25"/>
<ellipse cx="64" cy="243.7" rx="14.6" ry="10" fill="none" stroke="#555" stroke-width="1.4"/><path d="M63.9 234V243H77.3" stroke="#777" stroke-width="1" fill="none"/><rect x="61.7" y="231.8" width="4.4" height="4.4" fill="#fff" stroke="#000" stroke-width="1.25"/><rect x="61.7" y="240.8" width="4.4" height="4.4" fill="#fff" stroke="#000" stroke-width="1.25"/><rect x="75.1" y="240.8" width="4.4" height="4.4" fill="#fff" stroke="#000" stroke-width="1.25"/>
<path d="M11.9 273.7V298.3L34.1 286" fill="none" stroke="#aaa" stroke-width="1"/><path d="M11.9 273.7Q27 275 34.1 286" fill="none" stroke="#666" stroke-width="1.5"/><rect x="9.7" y="271.5" width="4.4" height="4.4" fill="#fff" stroke="#000" stroke-width="1.25"/><rect x="31.9" y="283.8" width="4.4" height="4.4" fill="#fff" stroke="#000" stroke-width="1.25"/><rect x="9.7" y="296.1" width="4.4" height="4.4" fill="#fff" stroke="#000" stroke-width="1.25"/>
<path d="M51 294V277.3H76.7" fill="none" stroke="#111" stroke-width="1.6"/><path d="M76.7 277.3V294H51" fill="none" stroke="#555" stroke-width="1.4"/><rect x="74.0" y="275.8" width="4.4" height="4.4" fill="#fff" stroke="#000" stroke-width="1.25"/><rect x="49.3" y="291.7" width="4.4" height="4.4" fill="#fff" stroke="#000" stroke-width="1.25"/>
<path d="M9.7 327L15.3 316.3H27.3L33 327L27.3 337.3H15.3Z" fill="none" stroke="#777" stroke-width="1.2"/><path d="M15.3 337.3H27.3" stroke="#111" stroke-width="1.5"/><path d="M20.8 327H33" stroke="#888" stroke-width="1"/><rect x="18.6" y="324.8" width="4.4" height="4.4" fill="#fff" stroke="#000" stroke-width="1.25"/><rect x="30.9" y="324.8" width="4.4" height="4.4" fill="#fff" stroke="#000" stroke-width="1.25"/>
<path d="M51.5 316.8H76.5V340" fill="none" stroke="#bbb" stroke-width="1"/><path d="M51.5 316.8H62Q76 317.5 76 333V340.3" fill="none" stroke="#111" stroke-width="1.8"/><rect x="49.3" y="314.6" width="4.4" height="4.4" fill="#fff" stroke="#000" stroke-width="1.25"/><rect x="73.8" y="338.1" width="4.4" height="4.4" fill="#fff" stroke="#000" stroke-width="1.25"/>
<path d="M16.3 358.7L33.1 358.8L26.3 381.2L10.7 374.2Z" fill="url(#gb)" stroke="#222" stroke-width="1.2"/><path d="M24.5 358.8L18.5 377.7M13.5 366.3L29.8 369.8" stroke="#2a3770" stroke-width="1.1"/><rect x="14.1" y="356.5" width="4.4" height="4.4" fill="#fff" stroke="#000" stroke-width="1.25"/><rect x="30.9" y="356.6" width="4.4" height="4.4" fill="#fff" stroke="#000" stroke-width="1.25"/><rect x="24.1" y="379.0" width="4.4" height="4.4" fill="#fff" stroke="#000" stroke-width="1.25"/><rect x="8.5" y="372.0" width="4.4" height="4.4" fill="#fff" stroke="#000" stroke-width="1.25"/>
<path d="M52 362.7L61.3 355.7L69.3 358.7L60.3 365Z" fill="#fff" stroke="#333" stroke-width="1.1"/><path d="M60.3 365L69.3 358.7Q76 361.5 76.7 368.7L66.7 374.7Q66.5 368.5 60.3 365Z" fill="url(#gb2)" stroke="#333" stroke-width="1.1"/><path d="M66.7 374.7L76.7 368.7V376L66.7 383.3Z" fill="#f1f1f1" stroke="#333" stroke-width="1.1"/>
<path d="M9.3 406.3L18.3 399.7L32.3 404L23 411Z" fill="#b9c4f8" stroke="#223" stroke-width="1"/><path d="M9.3 406.3L23 411L22.7 425.3L9.3 421.3Z" fill="#6b86f3" stroke="#223" stroke-width="1"/><path d="M23 411L32.3 404V418.3L22.7 425.3Z" fill="#3049b9" stroke="#223" stroke-width="1"/>
<circle cx="69" cy="406" r="9.6" fill="url(#gs)" stroke="#2a2f4a" stroke-width="1.1"/><circle cx="58.7" cy="416.7" r="9.6" fill="url(#gs)" stroke="#2a2f4a" stroke-width="1.1"/><path d="M59.7 411Q78 412 78.3 407M64.5 397.5Q62 405 65.5 414.5M49.2 419.5Q58 423 68 419M55.5 407.6Q53 416 56.5 426" fill="none" stroke="#2a2f4a" stroke-width="0.9"/>
<ellipse cx="22" cy="441.3" rx="8.7" ry="4" fill="none" stroke="#444" stroke-width="1.2"/><path d="M6.7 450.3Q22 459 36.7 450.3V464.7Q22 473.5 6.7 464.7Z" fill="url(#gb2)" stroke="#333" stroke-width="1.1"/><ellipse cx="22.3" cy="461" rx="8" ry="4.6" fill="#aab8f6" stroke="#fff" stroke-width="1.6"/>
<path d="M62.3 440Q70 445.5 79 446.7Q70 455 65 467.3Q57 462 49 461.3Q58 452 62.3 440Z" fill="url(#gb)" stroke="#2a3355" stroke-width="1.1"/><path d="M56.5 450Q64 453.5 73.5 455M52.5 456Q60 459 68.5 461M68.5 443.5Q62 454 56.5 462.5M74.5 445.5Q68 456 61 464.5" fill="none" stroke="#2a3355" stroke-width="1"/>
<g transform="translate(16.3 490.5) rotate(-35)"><path d="M-6 -6H-2.2Q-3.6 -9.6 0 -9.8Q3.6 -9.6 2.2 -6H6V-2.2Q9.6 -3.6 9.8 0Q9.6 3.6 6 2.2V6H2.2Q3.6 9.6 0 9.8Q-3.6 9.6 -2.2 6H-6V2.2Q-9.6 3.6 -9.8 0Q-9.6 -3.6 -6 -2.2Z" fill="#ffa800" stroke="#555" stroke-width="1"/></g><g transform="translate(27.5 502) rotate(-35)"><path d="M-6 -6H-2.2Q-3.6 -9.6 0 -9.8Q3.6 -9.6 2.2 -6H6V-2.2Q9.6 -3.6 9.8 0Q9.6 3.6 6 2.2V6H2.2Q3.6 9.6 0 9.8Q-3.6 9.6 -2.2 6H-6V2.2Q-9.6 3.6 -9.8 0Q-9.6 -3.6 -6 -2.2Z" fill="#ffffff" stroke="#555" stroke-width="1"/></g>
<path d="M46 496.7L51.7 485.3L52.3 504L72.3 484.3L63.3 505L78 505.3L65 511.3L68 513.7H46Z" fill="url(#go)"/><path d="M46 496.7L51.7 485.3L52.3 504L72.3 484.3L63.3 505L78 505.3L65 511.3L68 513.7" fill="none" stroke="#3a1c00" stroke-width="0.8" stroke-opacity="0.7"/>
<rect x="7.7" y="537.7" width="15" height="6.3" fill="#fff" stroke="#555" stroke-width="1.2"/><path d="M27 539.3L36 548L31.3 553L23 544.3Z" fill="#f4f4f6" stroke="#777" stroke-width="1"/><path d="M22 525H31.7L22.3 543.7Z" fill="#14267a"/>
<rect x="49.7" y="537.7" width="27.3" height="6.3" fill="#fff" stroke="#555" stroke-width="1.2"/><path d="M64 525H73.7L64.3 543.7Z" fill="#14267a"/>
<circle cx="16.7" cy="584" r="6" fill="#fff" stroke="#000" stroke-width="1.8"/><circle cx="27.3" cy="584" r="6" fill="#14267a" stroke="#000" stroke-width="1.8"/><circle cx="22" cy="575" r="6.3" fill="#6a88f6" stroke="#000" stroke-width="1.8"/>
<circle cx="63.3" cy="571.3" r="5.5" fill="#6a88f6" stroke="#555" stroke-width="1"/><circle cx="55.3" cy="586" r="5.5" fill="#fff" stroke="#555" stroke-width="1"/><circle cx="72.3" cy="586" r="5.5" fill="#14267a" stroke="#444" stroke-width="1"/>
<path d="M6.3 615Q23 610 29 626Q30.5 631 28.7 637.3" fill="none" stroke="#333" stroke-width="1.6"/><rect x="11.8" y="611.8" width="4.4" height="4.4" fill="#fff" stroke="#000" stroke-width="1.25"/><rect x="27.8" y="627.8" width="4.4" height="4.4" fill="#fff" stroke="#000" stroke-width="1.25"/>
<path d="M48.3 616.3Q64 610 69.5 624Q72 631 70 637.3" fill="none" stroke="#333" stroke-width="1.8"/><path d="M48.3 609H59.3L77.3 626.3V636" fill="none" stroke="#666" stroke-width="1" stroke-dasharray="1.2 1.6"/><rect x="57" y="606.4" width="4.6" height="4.6" fill="#e8e8e8" stroke="#666" stroke-width="1"/><rect x="75" y="624" width="4.6" height="4.6" fill="#e8e8e8" stroke="#666" stroke-width="1"/>
<g transform="matrix(1 0.28 0 1 0 -6)"><text x="8.5" y="677" font-family="Liberation Serif,serif" font-weight="bold" font-size="38" fill="#5b7af0" stroke="#1d2a6b" stroke-width="1.1" paint-order="stroke">T</text></g>
<rect x="51" y="668" width="8.7" height="8.7" fill="url(#gw)" stroke="#555" stroke-width="1.1"/><rect x="69" y="650" width="9" height="8.7" fill="url(#gb)" stroke="#445" stroke-width="1.1"/><path d="M59.7 668L67.5 660.2M63.5 659.8H67.8V664.2" fill="none" stroke="#444" stroke-width="1.1"/>
<rect x="9" y="692" width="9" height="8.8" fill="url(#gb)" stroke="#333" stroke-width="1.1"/>
<rect x="27" y="696.3" width="9" height="8.8" fill="url(#gb)" stroke="#333" stroke-width="1.1"/>
<rect x="21.3" y="701" width="9" height="8.8" fill="url(#gb)" stroke="#333" stroke-width="1.1"/>
<rect x="9" y="709.7" width="9" height="8.8" fill="url(#gw)" stroke="#333" stroke-width="1.1"/>
<rect x="27" y="712.3" width="9" height="8.8" fill="url(#gb)" stroke="#333" stroke-width="1.1"/>
<rect x="47.3" y="693.3" width="8.4" height="21" fill="url(#gw)" stroke="#444" stroke-width="1.1"/><path d="M74.3 701L79.3 706L64.3 720.7L59.7 715.3Z" fill="url(#gb)" stroke="#445" stroke-width="1.1"/><path d="M55.7 696.3Q63 696.5 68.8 701.3M69.3 697V701.8H64.5" fill="none" stroke="#555" stroke-width="1"/>
<path d="M7.7 740.3L19.3 732.3L36 738L24.3 746.3Z" fill="#b9c4f8" stroke="#333" stroke-width="1.1"/><path d="M7.7 740.3L24.3 746.3V764L7.7 758.3Z" fill="#6b86f3" stroke="#333" stroke-width="1.1"/><path d="M24.3 746.3L36 738V755.3L24.3 764Z" fill="#3049b9" stroke="#333" stroke-width="1.1"/><path d="M16.5 751.7L25.7 754.3V763.5L16.5 760.5Z" fill="#fff" stroke="#555" stroke-width="0.8"/><path d="M25.7 754.3L30.3 750V759.5L25.7 763.5Z" fill="#c9c9c9" stroke="#555" stroke-width="0.8"/><path d="M16.5 751.7L21 748.5L30.3 750" fill="none" stroke="#334" stroke-width="0.8"/>
<path d="M55 749.3H79.3L73.3 757.3H48.7Z" fill="url(#gb2)" stroke="#111" stroke-width="1.1"/>
<path d="M56 753V738M53 740L56 734.7L59 740Z" stroke="#fff" stroke-width="1.8" fill="#fff"/>
<path d="M64 753V738M61 740L64 734.7L67 740Z" stroke="#fff" stroke-width="1.8" fill="#fff"/>
<path d="M72 753V738M69 740L72 734.7L75 740Z" stroke="#fff" stroke-width="1.8" fill="#fff"/>
<rect x="7.699999999999999" y="776.7" width="6" height="6" fill="#a9b8f7" stroke="#222" stroke-width="1.1"/>
<rect x="7.699999999999999" y="786.7" width="6" height="6" fill="#a9b8f7" stroke="#222" stroke-width="1.1"/>
<rect x="7.699999999999999" y="796.9" width="6" height="6" fill="#fff" stroke="#222" stroke-width="1.1"/>
<rect x="17.7" y="776.7" width="6" height="6" fill="#a9b8f7" stroke="#222" stroke-width="1.1"/>
<rect x="17.7" y="786.7" width="6" height="6" fill="#6d88f3" stroke="#222" stroke-width="1.1"/>
<rect x="17.7" y="796.9" width="6" height="6" fill="#6d88f3" stroke="#222" stroke-width="1.1"/>
<rect x="28" y="776.7" width="6" height="6" fill="#6d88f3" stroke="#222" stroke-width="1.1"/>
<rect x="28" y="786.7" width="6" height="6" fill="#6d88f3" stroke="#222" stroke-width="1.1"/>
<rect x="28" y="796.9" width="6" height="6" fill="#6d88f3" stroke="#222" stroke-width="1.1"/>
<rect x="57.7" y="776" width="12.3" height="6.3" fill="url(#gw)" stroke="#555" stroke-width="1.1"/><rect x="61.3" y="786" width="5.4" height="5.3" fill="#fff" stroke="#444" stroke-width="1.1"/><rect x="58.7" y="795.3" width="10" height="8.4" fill="url(#gw)" stroke="#555" stroke-width="1.1"/><path d="M64 773.3V806.3" stroke="#d40000" stroke-width="1.8" stroke-opacity="0.85"/>
<path d="M19.5 816.5L25 818.5L22 830L19.5 829Z" fill="#f4f4f4" stroke="#444" stroke-width="0.9"/><path d="M7.7 822.3L12.5 820L18.5 822.5L15.7 843.3L7.7 840.5Z" fill="url(#gw)" stroke="#444" stroke-width="1"/><path d="M23.3 822.3L27 820.5L34.7 824L26.7 846.7L16 843.3Z" fill="url(#gb2)" stroke="#334" stroke-width="1"/><path d="M30 822.5Q27 834 22.5 845.3" fill="none" stroke="#3b50c8" stroke-width="1"/>
<path d="M49.7 833.9L52.8 832.2Q55.5 835 56.8 839.8Q64 827 77 818Q64 831 56 844.4Q53.5 837.5 49.7 833.9Z" fill="#000"/>
<path d="M7.7 867L14.5 863L25 866L18.5 870.5Z" fill="#efefef" stroke="#555" stroke-width="0.9"/><path d="M7.7 867L18.5 870.5V882L7.7 878.5Z" fill="#c9c9c9" stroke="#555" stroke-width="0.9"/><path d="M18.5 870.5L25 866V877L18.5 882Z" fill="#8e8e8e" stroke="#555" stroke-width="0.9"/><path d="M28.7 865L21.8 881Q22 885 28.7 885.2Q35.5 885 35.7 881Z" fill="url(#gg)" stroke="#555" stroke-width="0.9"/>
<path d="M63.3 867.7L52.3 883.3L66.3 889Z" fill="#ffdf6e" stroke="#7a6a20" stroke-width="0.9"/><path d="M63.3 867.7L66.3 889L75.3 880Z" fill="#c9a233" stroke="#7a6a20" stroke-width="0.9"/><path d="M65.3 863.3Q68 857.5 71.7 856.3L78 858V856.3H81V863H78V861.3L72 862.5Q69 863 65.3 863.3Z" fill="#e9e9e9" stroke="#555" stroke-width="0.8"/><path d="M80.5 856V863.5" stroke="#111" stroke-width="1.4"/>
</svg>
<svg class="abs" style="left:0;top:0" width="32" height="34" viewBox="0 0 32 34">
<path d="M2 5H6.6Q6.2 10 3.8 14.8L8.6 6L13 12.5L17.4 17.6L19.2 18.4L25.4 15.8L26 17.6L19.2 27.4L16.4 28.2L6 21.6L2 17Z" fill="#fff"/>
<path d="M7.5 17L13.5 14M7 18.5Q9 22 12.5 22.5M17.5 19L20 17" stroke="#000" stroke-width="1.1" fill="none"/>
<circle cx="17.3" cy="25.6" r="0.7" fill="#000"/>
<text x="18.6" y="15" font-family="Liberation Sans,sans-serif" font-size="12" fill="#d8d8d8">7</text>
</svg>
<svg class="abs" style="left:2360px;top:0" width="199" height="34" viewBox="2360 0 199 34" fill="none" stroke="#fff" stroke-width="1.1">
<path d="M2375.5 16.5H2391.5"/>
<path d="M2445.5 12.5H2456.5V23.5H2445.5ZM2448.5 12.5V9.5H2459.5V20.5H2456.5"/>
<path d="M2516.5 9.5L2530.5 23.5M2530.5 9.5L2516.5 23.5"/>
</svg>
<div class="abs" style="left:2534px;top:67px;width:25px;height:25px;background:#f0f0f0"></div>
<svg class="abs" style="left:2534px;top:62px" width="25" height="60" viewBox="2534 62 25 60">
<path d="M2542.5 76.5L2546 72.8L2549.5 76.5M2542.5 84.5L2546 88.2L2549.5 84.5" fill="none" stroke="#5a5a5a" stroke-width="1.6"/>
<rect x="2535.5" y="94.5" width="22" height="12" fill="#e9e9e9" stroke="#a0a0a0" stroke-width="1"/>
<rect x="2535.5" y="107.5" width="22" height="12" fill="#e9e9e9" stroke="#a0a0a0" stroke-width="1"/>
<path d="M2542 103L2546.5 97.5L2551 103ZM2542 111L2546.5 116.5L2551 111Z" fill="#000"/>
</svg>
<div class="vl" style="left:4px;top:66px;height:56px;background:#c9d3e6"></div><div class="vl" style="left:6px;top:66px;height:56px;background:#c9d3e6"></div>
<style>
.vt{position:absolute;top:1346px;font-size:19.5px;letter-spacing:0.3px;color:#1c1c1c;white-space:nowrap;line-height:1;}
.os{position:absolute;top:1386px;font-size:18.5px;color:#6e6e6e;white-space:nowrap;line-height:1;}
.ocb{position:absolute;top:1385px;width:19px;height:19px;border:1px solid #c8c8c8;background:#fff;box-sizing:border-box;}
.st{position:absolute;top:1420px;font-size:18.5px;color:#111;white-space:nowrap;line-height:1;}
.sv{position:absolute;top:1416px;width:1px;height:22px;background:#c3cbe0;}
</style>
<svg class="abs" style="left:96px;top:1339px" width="74" height="33" viewBox="0 0 74 33"><path d="M0.5 0 L0.5 14 L13 30.5 L68 30.5 Q70.5 30.5 70.5 28 L70.5 0" fill="none" stroke="#c3cbe0" stroke-width="1"/></svg>
<div class="vt" style="left:113px">Front</div>
<div class="vt" style="left:185px">Perspective</div>
<div class="vt" style="left:313px">Top</div>
<div class="vt" style="left:373px">Right</div>
<svg class="abs" style="left:446px;top:1348px" width="15" height="15" viewBox="0 0 15 15"><path d="M5.5 1.5 H9.5 V5.5 H13.5 V9.5 H9.5 V13.5 H5.5 V9.5 H1.5 V5.5 H5.5 Z" fill="#f4f5f8" stroke="#9a9ca3" stroke-width="1"/></svg>
<div class="vl" style="left:5px;top:1379px;height:33px;background:#c3cbe0"></div><div class="vl" style="left:7px;top:1379px;height:33px;background:#c3cbe0"></div>
<div class="ocb" style="left:14px"><svg width="17" height="17" viewBox="0 0 17 17" style="position:absolute;left:0;top:0"><path d="M3 8.5 L6.8 12.3 L14 4" fill="none" stroke="#b9b9b9" stroke-width="1.6"/></svg></div>
<div class="os" style="left:39px">端点</div>
<div class="ocb" style="left:89px"></div>
<div class="os" style="left:114px">最近点</div>
<div class="ocb" style="left:182px"></div>
<div class="os" style="left:207px">点</div>
<div class="ocb" style="left:236px"><svg width="17" height="17" viewBox="0 0 17 17" style="position:absolute;left:0;top:0"><path d="M3 8.5 L6.8 12.3 L14 4" fill="none" stroke="#b9b9b9" stroke-width="1.6"/></svg></div>
<div class="os" style="left:261px">中点</div>
<div class="ocb" style="left:311px"><svg width="17" height="17" viewBox="0 0 17 17" style="position:absolute;left:0;top:0"><path d="M3 8.5 L6.8 12.3 L14 4" fill="none" stroke="#b9b9b9" stroke-width="1.6"/></svg></div>
<div class="os" style="left:336px">中心点</div>
<div class="ocb" style="left:404px"></div>
<div class="os" style="left:429px">交点</div>
<div class="ocb" style="left:478px"></div>
<div class="os" style="left:503px">垂点</div>
<div class="ocb" style="left:552px"><svg width="17" height="17" viewBox="0 0 17 17" style="position:absolute;left:0;top:0"><path d="M3 8.5 L6.8 12.3 L14 4" fill="none" stroke="#b9b9b9" stroke-width="1.6"/></svg></div>
<div class="os" style="left:577px">切点</div>
<div class="ocb" style="left:625px"></div>
<div class="os" style="left:650px">四分点</div>
<div class="ocb" style="left:718px"></div>
<div class="os" style="left:743px">节点</div>
<div class="ocb" style="left:792px"></div>
<div class="os" style="left:817px">顶点</div>
<div class="ocb" style="left:867px;background:#cfcfcf;border-color:#cfcfcf"></div>
<div class="os" style="left:892px">投影</div>
<div class="ocb" style="left:960px;border-color:#0a64c8;border-width:1.5px"><div class="abs" style="left:3.5px;top:3.5px;width:9px;height:9px;background:#7d7d7d"></div></div>
<div class="os" style="left:985px;color:#333">停用</div>
<div class="hl" style="left:0;top:1415px;width:2559px;background:#c3cbe0"></div>
<div class="abs" style="left:0;top:1438px;width:2559px;height:2px;background:#3c3c3c"></div>
<div class="abs" style="left:848px;top:1416px;width:89px;height:22px;background:#d3daf5"></div>
<div class="sv" style="left:87px"></div>
<div class="sv" style="left:216px"></div>
<div class="sv" style="left:343px"></div>
<div class="sv" style="left:471px"></div>
<div class="sv" style="left:599px"></div>
<div class="sv" style="left:989px"></div>
<div class="sv" style="left:1078px"></div>
<div class="sv" style="left:1167px"></div>
<div class="sv" style="left:1256px"></div>
<div class="sv" style="left:1327px"></div>
<div class="sv" style="left:1452px"></div>
<div class="sv" style="left:1523px"></div>
<div class="sv" style="left:2552px"></div>
<div class="abs" style="left:0;top:1416px;width:2559px;height:22px;overflow:hidden">
<div class="st" style="left:6px;top:4px;">工作平面</div>
<div class="st" style="left:113px;top:4px;letter-spacing:0.65px">x 52.213</div>
<div class="st" style="left:236px;top:4px;letter-spacing:0.55px">y 989.948</div>
<div class="st" style="left:402px;top:4px;">z</div>
<div class="st" style="left:517px;top:4px;">毫米</div>
<div class="st" style="left:624px;top:4px;letter-spacing:0.6px">130茶壶</div>
<div class="st" style="left:854px;top:4px;font-weight:bold">锁定格点</div>
<div class="st" style="left:945px;top:4px;">正交</div>
<div class="st" style="left:997px;top:4px;">平面模式</div>
<div class="st" style="left:1085px;top:4px;">物件锁点</div>
<div class="st" style="left:1174px;top:4px;">智慧轨迹</div>
<div class="st" style="left:1264px;top:4px;">操作轴</div>
<div class="st" style="left:1333px;top:4px;">记录建构历史</div>
<div class="st" style="left:1460px;top:4px;">过滤器</div>
<div class="st" style="left:1526px;top:4px;letter-spacing:0.6px">内存使用量: 406 MB</div>
<div class="abs" style="left:604px;top:5px;width:16px;height:16px;background:#000"></div>
</div>
</body>
</html>
